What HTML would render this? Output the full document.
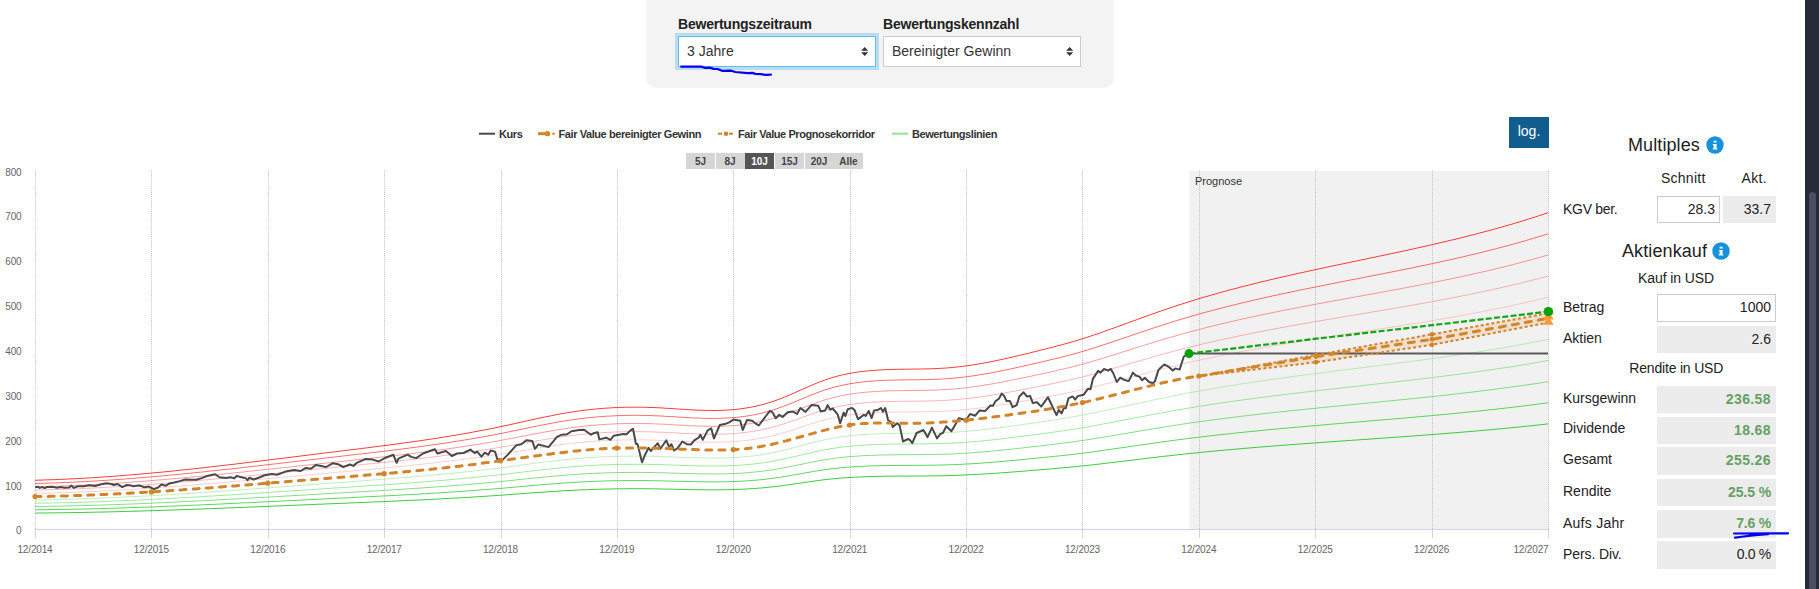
<!DOCTYPE html>
<html><head><meta charset="utf-8"><style>
*{box-sizing:border-box}
html,body{margin:0;padding:0}
body{width:1819px;height:589px;overflow:hidden;background:#fff;position:relative;font-family:"Liberation Sans",sans-serif;color:#222}
.abs{position:absolute}
.panel{position:absolute;left:646px;top:-20px;width:468px;height:108px;background:#f3f3f3;border-radius:10px}
.lbl{position:absolute;font-weight:bold;font-size:14px;color:#222;white-space:nowrap;letter-spacing:-0.22px}
.sel{position:absolute;background:#fff;border:1px solid #ccc;height:31px;font-size:14px;color:#333;padding-left:8px;line-height:29px;white-space:nowrap}
.arr{position:absolute;right:6px;top:9px;width:8px;height:12px}
svg text.ax{font-size:10px;fill:#666;letter-spacing:-0.15px;font-family:"Liberation Sans",sans-serif}
svg text.prog{font-size:11px;fill:#333;font-family:"Liberation Sans",sans-serif}
.leg{position:absolute;top:128px;font-size:11px;font-weight:bold;color:#333;white-space:nowrap;letter-spacing:-0.42px}
.rb{position:absolute;top:153px;height:16px;width:29px;background:#d6d6d6;font-size:10px;font-weight:bold;color:#444;text-align:center;line-height:18px}
.rb.on{background:#555;color:#fff}
.logb{position:absolute;left:1509px;top:117px;width:40px;height:31px;background:#115e8e;color:#fff;font-size:14px;text-align:center;line-height:28.5px}
.rp{position:absolute;font-size:14px;color:#222;white-space:nowrap}
.h{position:absolute;font-size:18px;color:#222;white-space:nowrap}
.info{position:absolute;width:18px;height:18px;color:#fff;font-size:12px;font-weight:bold;text-align:center;line-height:18px;font-family:"Liberation Sans",sans-serif}
.box{position:absolute;height:27.5px;background:#ececec;text-align:right;font-size:14px;color:#222;padding-right:5px;line-height:27px}
.box.w{background:#fff;border:1px solid #ccc;line-height:25.5px;padding-right:4px}
.g{color:#66a066;font-weight:bold}
.sb{position:absolute;left:1805px;top:0;width:14px;height:589px;background:#272b38}
.th{position:absolute;left:1808.5px;top:191.5px;width:7.5px;height:420px;background:#4a4e65;border-radius:4px}
</style></head><body>
<div class="panel"></div>
<div class="lbl" style="left:678px;top:16px">Bewertungszeitraum</div>
<div class="lbl" style="left:883px;top:16px">Bewertungskennzahl</div>
<div class="abs" style="left:675px;top:33px;width:204px;height:37px;background:#bcdcef"></div>
<div class="sel" style="left:678px;top:36px;width:198px;border-color:#5bc0f5">3 Jahre<svg class="arr" viewBox="0 0 8 12"><path d="M3.7,1 L7.2,4.7 L0.2,4.7Z M3.7,10 L7.2,6.2 L0.2,6.2Z" fill="#333"/></svg></div>
<div class="sel" style="left:883px;top:36px;width:198px">Bereinigter Gewinn<svg class="arr" viewBox="0 0 8 12"><path d="M3.7,1 L7.2,4.7 L0.2,4.7Z M3.7,10 L7.2,6.2 L0.2,6.2Z" fill="#333"/></svg></div>
<svg class="abs" style="left:0;top:0" width="1819" height="589">
<path d="M681.2,66.7 L701,66.5 L705,67.9 L710.2,67.7 L713.5,68.9 L717.5,69 L722.1,70.8 L731.3,70.7 L735.3,72 L747.8,73.1 L752.5,72.9 L755.8,74 L761,74.1 L765.6,74.9 L770.9,74.7" fill="none" stroke="#0000f0" stroke-width="2.2" stroke-linecap="round" stroke-linejoin="round"/>
</svg>
<svg class="abs" style="left:0;top:0" width="1819" height="589">
<rect x="1189.5" y="171" width="359" height="358.5" fill="#f1f1f1"/>
<line x1="35.5" y1="171" x2="35.5" y2="529" stroke="#bdbdbd" stroke-width="1" stroke-dasharray="1,1.1"/>
<line x1="151.5" y1="171" x2="151.5" y2="529" stroke="#bdbdbd" stroke-width="1" stroke-dasharray="1,1.1"/>
<line x1="268.5" y1="171" x2="268.5" y2="529" stroke="#bdbdbd" stroke-width="1" stroke-dasharray="1,1.1"/>
<line x1="384.5" y1="171" x2="384.5" y2="529" stroke="#bdbdbd" stroke-width="1" stroke-dasharray="1,1.1"/>
<line x1="501.5" y1="171" x2="501.5" y2="529" stroke="#bdbdbd" stroke-width="1" stroke-dasharray="1,1.1"/>
<line x1="617.5" y1="171" x2="617.5" y2="529" stroke="#bdbdbd" stroke-width="1" stroke-dasharray="1,1.1"/>
<line x1="733.5" y1="171" x2="733.5" y2="529" stroke="#bdbdbd" stroke-width="1" stroke-dasharray="1,1.1"/>
<line x1="850.5" y1="171" x2="850.5" y2="529" stroke="#bdbdbd" stroke-width="1" stroke-dasharray="1,1.1"/>
<line x1="966.5" y1="171" x2="966.5" y2="529" stroke="#bdbdbd" stroke-width="1" stroke-dasharray="1,1.1"/>
<line x1="1082.5" y1="171" x2="1082.5" y2="529" stroke="#bdbdbd" stroke-width="1" stroke-dasharray="1,1.1"/>
<line x1="1199.5" y1="171" x2="1199.5" y2="529" stroke="#bdbdbd" stroke-width="1" stroke-dasharray="1,1.1"/>
<line x1="1315.5" y1="171" x2="1315.5" y2="529" stroke="#bdbdbd" stroke-width="1" stroke-dasharray="1,1.1"/>
<line x1="1432.5" y1="171" x2="1432.5" y2="529" stroke="#bdbdbd" stroke-width="1" stroke-dasharray="1,1.1"/>
<line x1="1548.5" y1="171" x2="1548.5" y2="529" stroke="#bdbdbd" stroke-width="1" stroke-dasharray="1,1.1"/>
<line x1="35" y1="529.5" x2="1549" y2="529.5" stroke="#ccd6eb" stroke-width="1"/>
<line x1="35.5" y1="529.5" x2="35.5" y2="538" stroke="#ccd6eb" stroke-width="1"/>
<line x1="151.5" y1="529.5" x2="151.5" y2="538" stroke="#ccd6eb" stroke-width="1"/>
<line x1="268.5" y1="529.5" x2="268.5" y2="538" stroke="#ccd6eb" stroke-width="1"/>
<line x1="384.5" y1="529.5" x2="384.5" y2="538" stroke="#ccd6eb" stroke-width="1"/>
<line x1="501.5" y1="529.5" x2="501.5" y2="538" stroke="#ccd6eb" stroke-width="1"/>
<line x1="617.5" y1="529.5" x2="617.5" y2="538" stroke="#ccd6eb" stroke-width="1"/>
<line x1="733.5" y1="529.5" x2="733.5" y2="538" stroke="#ccd6eb" stroke-width="1"/>
<line x1="850.5" y1="529.5" x2="850.5" y2="538" stroke="#ccd6eb" stroke-width="1"/>
<line x1="966.5" y1="529.5" x2="966.5" y2="538" stroke="#ccd6eb" stroke-width="1"/>
<line x1="1082.5" y1="529.5" x2="1082.5" y2="538" stroke="#ccd6eb" stroke-width="1"/>
<line x1="1199.5" y1="529.5" x2="1199.5" y2="538" stroke="#ccd6eb" stroke-width="1"/>
<line x1="1315.5" y1="529.5" x2="1315.5" y2="538" stroke="#ccd6eb" stroke-width="1"/>
<line x1="1432.5" y1="529.5" x2="1432.5" y2="538" stroke="#ccd6eb" stroke-width="1"/>
<line x1="1548.5" y1="529.5" x2="1548.5" y2="538" stroke="#ccd6eb" stroke-width="1"/>
<path d="M1199,376.1 L1316,355.0 L1432,334.3 L1548,313.3 L1548,322.6 L1432,344.8 L1316,362.2 L1199,376.1 Z" fill="#e8a050" fill-opacity="0.22"/>
<path d="M35.0,480.2 L37.0,480.2 L39.0,480.1 L41.0,480.1 L43.0,480.0 L45.0,479.9 L47.0,479.9 L49.0,479.8 L51.0,479.7 L53.0,479.7 L55.0,479.6 L57.0,479.5 L59.0,479.4 L61.0,479.4 L63.0,479.3 L65.0,479.2 L67.0,479.1 L69.0,479.0 L71.0,478.9 L73.0,478.8 L75.0,478.7 L77.0,478.6 L79.0,478.5 L81.0,478.4 L83.0,478.3 L85.0,478.2 L87.0,478.0 L89.0,477.9 L91.0,477.8 L93.0,477.7 L95.0,477.6 L97.0,477.4 L99.0,477.3 L101.0,477.2 L103.0,477.0 L105.0,476.9 L107.0,476.7 L109.0,476.6 L111.0,476.5 L113.0,476.3 L115.0,476.2 L117.0,476.0 L119.0,475.8 L121.0,475.7 L123.0,475.5 L125.0,475.4 L127.0,475.2 L129.0,475.0 L131.0,474.9 L133.0,474.7 L135.0,474.5 L137.0,474.4 L139.0,474.2 L141.0,474.0 L143.0,473.8 L145.0,473.7 L147.0,473.5 L149.0,473.3 L151.0,473.1 L153.0,472.9 L155.0,472.7 L157.0,472.5 L159.0,472.4 L161.0,472.2 L163.0,472.0 L165.0,471.8 L167.0,471.6 L169.0,471.4 L171.0,471.2 L173.0,471.0 L175.0,470.8 L177.0,470.6 L179.0,470.3 L181.0,470.1 L183.0,469.9 L185.0,469.7 L187.0,469.5 L189.0,469.3 L191.0,469.1 L193.0,468.9 L195.0,468.6 L197.0,468.4 L199.0,468.2 L201.0,468.0 L203.0,467.8 L205.0,467.5 L207.0,467.3 L209.0,467.1 L211.0,466.9 L213.0,466.6 L215.0,466.4 L217.0,466.2 L219.0,465.9 L221.0,465.7 L223.0,465.5 L225.0,465.2 L227.0,465.0 L229.0,464.8 L231.0,464.5 L233.0,464.3 L235.0,464.1 L237.0,463.8 L239.0,463.6 L241.0,463.4 L243.0,463.1 L245.0,462.9 L247.0,462.6 L249.0,462.4 L251.0,462.1 L253.0,461.9 L255.0,461.7 L257.0,461.4 L259.0,461.2 L261.0,460.9 L263.0,460.7 L265.0,460.4 L267.0,460.2 L269.0,459.9 L271.0,459.7 L273.0,459.4 L275.0,459.2 L277.0,458.9 L279.0,458.7 L281.0,458.5 L283.0,458.2 L285.0,458.0 L287.0,457.7 L289.0,457.5 L291.0,457.2 L293.0,457.0 L295.0,456.7 L297.0,456.5 L299.0,456.2 L301.0,456.0 L303.0,455.7 L305.0,455.5 L307.0,455.2 L309.0,455.0 L311.0,454.7 L313.0,454.5 L315.0,454.2 L317.0,454.0 L319.0,453.7 L321.0,453.5 L323.0,453.2 L325.0,453.0 L327.0,452.7 L329.0,452.5 L331.0,452.2 L333.0,452.0 L335.0,451.8 L337.0,451.5 L339.0,451.3 L341.0,451.0 L343.0,450.8 L345.0,450.5 L347.0,450.3 L349.0,450.0 L351.0,449.8 L353.0,449.5 L355.0,449.3 L357.0,449.1 L359.0,448.8 L361.0,448.6 L363.0,448.3 L365.0,448.1 L367.0,447.8 L369.0,447.6 L371.0,447.3 L373.0,447.1 L375.0,446.8 L377.0,446.5 L379.0,446.3 L381.0,446.0 L383.0,445.8 L385.0,445.5 L387.0,445.3 L389.0,445.0 L391.0,444.7 L393.0,444.5 L395.0,444.2 L397.0,443.9 L399.0,443.7 L401.0,443.4 L403.0,443.1 L405.0,442.8 L407.0,442.6 L409.0,442.3 L411.0,442.0 L413.0,441.7 L415.0,441.4 L417.0,441.2 L419.0,440.9 L421.0,440.6 L423.0,440.3 L425.0,440.0 L427.0,439.7 L429.0,439.4 L431.0,439.1 L433.0,438.8 L435.0,438.5 L437.0,438.2 L439.0,437.9 L441.0,437.6 L443.0,437.2 L445.0,436.9 L447.0,436.6 L449.0,436.3 L451.0,435.9 L453.0,435.6 L455.0,435.3 L457.0,434.9 L459.0,434.6 L461.0,434.3 L463.0,433.9 L465.0,433.6 L467.0,433.2 L469.0,432.8 L471.0,432.5 L473.0,432.1 L475.0,431.7 L477.0,431.4 L479.0,431.0 L481.0,430.6 L483.0,430.2 L485.0,429.8 L487.0,429.5 L489.0,429.1 L491.0,428.7 L493.0,428.3 L495.0,427.8 L497.0,427.4 L499.0,427.0 L501.0,426.6 L503.0,426.2 L505.0,425.7 L507.0,425.3 L509.0,424.9 L511.0,424.4 L513.0,424.0 L515.0,423.5 L517.0,423.1 L519.0,422.7 L521.0,422.2 L523.0,421.8 L525.0,421.3 L527.0,420.9 L529.0,420.4 L531.0,420.0 L533.0,419.6 L535.0,419.1 L537.0,418.7 L539.0,418.2 L541.0,417.8 L543.0,417.4 L545.0,417.0 L547.0,416.6 L549.0,416.2 L551.0,415.8 L553.0,415.4 L555.0,415.0 L557.0,414.6 L559.0,414.2 L561.0,413.8 L563.0,413.5 L565.0,413.1 L567.0,412.8 L569.0,412.5 L571.0,412.2 L573.0,411.8 L575.0,411.5 L577.0,411.3 L579.0,411.0 L581.0,410.7 L583.0,410.4 L585.0,410.2 L587.0,410.0 L589.0,409.7 L591.0,409.5 L593.0,409.3 L595.0,409.1 L597.0,408.9 L599.0,408.7 L601.0,408.6 L603.0,408.4 L605.0,408.2 L607.0,408.1 L609.0,408.0 L611.0,407.9 L613.0,407.7 L615.0,407.6 L617.0,407.6 L619.0,407.5 L621.0,407.4 L623.0,407.3 L625.0,407.3 L627.0,407.2 L629.0,407.2 L631.0,407.2 L633.0,407.2 L635.0,407.2 L637.0,407.2 L639.0,407.2 L641.0,407.2 L643.0,407.2 L645.0,407.3 L647.0,407.3 L649.0,407.4 L651.0,407.5 L653.0,407.5 L655.0,407.6 L657.0,407.7 L659.0,407.8 L661.0,407.9 L663.0,408.0 L665.0,408.2 L667.0,408.3 L669.0,408.4 L671.0,408.5 L673.0,408.7 L675.0,408.8 L677.0,408.9 L679.0,409.1 L681.0,409.2 L683.0,409.3 L685.0,409.4 L687.0,409.6 L689.0,409.7 L691.0,409.8 L693.0,409.9 L695.0,410.0 L697.0,410.1 L699.0,410.2 L701.0,410.2 L703.0,410.3 L705.0,410.4 L707.0,410.4 L709.0,410.4 L711.0,410.5 L713.0,410.5 L715.0,410.5 L717.0,410.4 L719.0,410.4 L721.0,410.3 L723.0,410.3 L725.0,410.2 L727.0,410.1 L729.0,410.0 L731.0,409.8 L733.0,409.7 L735.0,409.5 L737.0,409.3 L739.0,409.0 L741.0,408.8 L743.0,408.5 L745.0,408.2 L747.0,407.9 L749.0,407.5 L751.0,407.2 L753.0,406.8 L755.0,406.4 L757.0,405.9 L759.0,405.4 L761.0,405.0 L763.0,404.4 L765.0,403.9 L767.0,403.3 L769.0,402.7 L771.0,402.1 L773.0,401.4 L775.0,400.7 L777.0,400.0 L779.0,399.3 L781.0,398.5 L783.0,397.7 L785.0,396.9 L787.0,396.1 L789.0,395.2 L791.0,394.4 L793.0,393.5 L795.0,392.6 L797.0,391.7 L799.0,390.8 L801.0,389.9 L803.0,389.0 L805.0,388.2 L807.0,387.3 L809.0,386.4 L811.0,385.5 L813.0,384.7 L815.0,383.8 L817.0,383.0 L819.0,382.2 L821.0,381.5 L823.0,380.7 L825.0,380.0 L827.0,379.3 L829.0,378.6 L831.0,378.0 L833.0,377.4 L835.0,376.8 L837.0,376.3 L839.0,375.7 L841.0,375.2 L843.0,374.8 L845.0,374.3 L847.0,373.9 L849.0,373.5 L851.0,373.2 L853.0,372.8 L855.0,372.5 L857.0,372.2 L859.0,371.9 L861.0,371.6 L863.0,371.4 L865.0,371.2 L867.0,371.0 L869.0,370.8 L871.0,370.6 L873.0,370.4 L875.0,370.3 L877.0,370.1 L879.0,370.0 L881.0,369.9 L883.0,369.8 L885.0,369.7 L887.0,369.6 L889.0,369.6 L891.0,369.5 L893.0,369.4 L895.0,369.4 L897.0,369.3 L899.0,369.3 L901.0,369.3 L903.0,369.2 L905.0,369.2 L907.0,369.2 L909.0,369.2 L911.0,369.1 L913.0,369.1 L915.0,369.1 L917.0,369.1 L919.0,369.0 L921.0,369.0 L923.0,369.0 L925.0,368.9 L927.0,368.9 L929.0,368.8 L931.0,368.8 L933.0,368.7 L935.0,368.6 L937.0,368.5 L939.0,368.4 L941.0,368.3 L943.0,368.2 L945.0,368.1 L947.0,367.9 L949.0,367.8 L951.0,367.6 L953.0,367.4 L955.0,367.2 L957.0,367.0 L959.0,366.8 L961.0,366.6 L963.0,366.3 L965.0,366.0 L967.0,365.8 L969.0,365.5 L971.0,365.2 L973.0,364.9 L975.0,364.6 L977.0,364.2 L979.0,363.9 L981.0,363.6 L983.0,363.2 L985.0,362.8 L987.0,362.5 L989.0,362.1 L991.0,361.7 L993.0,361.3 L995.0,360.9 L997.0,360.5 L999.0,360.0 L1001.0,359.6 L1003.0,359.2 L1005.0,358.7 L1007.0,358.3 L1009.0,357.8 L1011.0,357.4 L1013.0,356.9 L1015.0,356.4 L1017.0,356.0 L1019.0,355.5 L1021.0,355.0 L1023.0,354.5 L1025.0,354.1 L1027.0,353.6 L1029.0,353.1 L1031.0,352.6 L1033.0,352.1 L1035.0,351.6 L1037.0,351.1 L1039.0,350.6 L1041.0,350.1 L1043.0,349.6 L1045.0,349.1 L1047.0,348.6 L1049.0,348.1 L1051.0,347.6 L1053.0,347.1 L1055.0,346.6 L1057.0,346.0 L1059.0,345.5 L1061.0,345.0 L1063.0,344.4 L1065.0,343.9 L1067.0,343.3 L1069.0,342.8 L1071.0,342.2 L1073.0,341.6 L1075.0,341.0 L1077.0,340.5 L1079.0,339.8 L1081.0,339.2 L1083.0,338.6 L1085.0,338.0 L1087.0,337.3 L1089.0,336.7 L1091.0,336.0 L1093.0,335.3 L1095.0,334.6 L1097.0,334.0 L1099.0,333.3 L1101.0,332.6 L1103.0,331.9 L1105.0,331.1 L1107.0,330.4 L1109.0,329.7 L1111.0,329.0 L1113.0,328.3 L1115.0,327.6 L1117.0,326.8 L1119.0,326.1 L1121.0,325.4 L1123.0,324.7 L1125.0,323.9 L1127.0,323.2 L1129.0,322.5 L1131.0,321.7 L1133.0,321.0 L1135.0,320.3 L1137.0,319.6 L1139.0,318.8 L1141.0,318.1 L1143.0,317.4 L1145.0,316.7 L1147.0,315.9 L1149.0,315.2 L1151.0,314.5 L1153.0,313.8 L1155.0,313.1 L1157.0,312.4 L1159.0,311.7 L1161.0,311.0 L1163.0,310.3 L1165.0,309.6 L1167.0,308.9 L1169.0,308.3 L1171.0,307.6 L1173.0,306.9 L1175.0,306.3 L1177.0,305.6 L1179.0,304.9 L1181.0,304.3 L1183.0,303.7 L1185.0,303.0 L1187.0,302.4 L1189.0,301.8 L1191.0,301.1 L1193.0,300.5 L1195.0,299.9 L1197.0,299.3 L1199.0,298.7 L1201.0,298.1 L1203.0,297.5 L1205.0,296.9 L1207.0,296.3 L1209.0,295.8 L1211.0,295.2 L1213.0,294.6 L1215.0,294.1 L1217.0,293.5 L1219.0,292.9 L1221.0,292.4 L1223.0,291.8 L1225.0,291.3 L1227.0,290.7 L1229.0,290.2 L1231.0,289.7 L1233.0,289.1 L1235.0,288.6 L1237.0,288.1 L1239.0,287.6 L1241.0,287.0 L1243.0,286.5 L1245.0,286.0 L1247.0,285.5 L1249.0,285.0 L1251.0,284.5 L1253.0,284.0 L1255.0,283.5 L1257.0,283.0 L1259.0,282.5 L1261.0,282.0 L1263.0,281.5 L1265.0,281.1 L1267.0,280.6 L1269.0,280.1 L1271.0,279.6 L1273.0,279.2 L1275.0,278.7 L1277.0,278.2 L1279.0,277.8 L1281.0,277.3 L1283.0,276.8 L1285.0,276.4 L1287.0,275.9 L1289.0,275.5 L1291.0,275.0 L1293.0,274.6 L1295.0,274.1 L1297.0,273.7 L1299.0,273.2 L1301.0,272.8 L1303.0,272.4 L1305.0,271.9 L1307.0,271.5 L1309.0,271.0 L1311.0,270.6 L1313.0,270.2 L1315.0,269.7 L1317.0,269.3 L1319.0,268.9 L1321.0,268.4 L1323.0,268.0 L1325.0,267.6 L1327.0,267.2 L1329.0,266.7 L1331.0,266.3 L1333.0,265.9 L1335.0,265.5 L1337.0,265.1 L1339.0,264.6 L1341.0,264.2 L1343.0,263.8 L1345.0,263.4 L1347.0,263.0 L1349.0,262.5 L1351.0,262.1 L1353.0,261.7 L1355.0,261.3 L1357.0,260.9 L1359.0,260.4 L1361.0,260.0 L1363.0,259.6 L1365.0,259.2 L1367.0,258.8 L1369.0,258.3 L1371.0,257.9 L1373.0,257.5 L1375.0,257.1 L1377.0,256.7 L1379.0,256.2 L1381.0,255.8 L1383.0,255.4 L1385.0,255.0 L1387.0,254.6 L1389.0,254.1 L1391.0,253.7 L1393.0,253.3 L1395.0,252.9 L1397.0,252.4 L1399.0,252.0 L1401.0,251.6 L1403.0,251.1 L1405.0,250.7 L1407.0,250.3 L1409.0,249.8 L1411.0,249.4 L1413.0,249.0 L1415.0,248.5 L1417.0,248.1 L1419.0,247.6 L1421.0,247.2 L1423.0,246.7 L1425.0,246.3 L1427.0,245.8 L1429.0,245.4 L1431.0,244.9 L1433.0,244.5 L1435.0,244.0 L1437.0,243.5 L1439.0,243.1 L1441.0,242.6 L1443.0,242.1 L1445.0,241.7 L1447.0,241.2 L1449.0,240.7 L1451.0,240.2 L1453.0,239.8 L1455.0,239.3 L1457.0,238.8 L1459.0,238.3 L1461.0,237.8 L1463.0,237.3 L1465.0,236.8 L1467.0,236.3 L1469.0,235.8 L1471.0,235.3 L1473.0,234.8 L1475.0,234.3 L1477.0,233.8 L1479.0,233.2 L1481.0,232.7 L1483.0,232.2 L1485.0,231.6 L1487.0,231.1 L1489.0,230.6 L1491.0,230.0 L1493.0,229.5 L1495.0,228.9 L1497.0,228.4 L1499.0,227.8 L1501.0,227.3 L1503.0,226.7 L1505.0,226.1 L1507.0,225.5 L1509.0,225.0 L1511.0,224.4 L1513.0,223.8 L1515.0,223.2 L1517.0,222.6 L1519.0,222.0 L1521.0,221.4 L1523.0,220.8 L1525.0,220.2 L1527.0,219.5 L1529.0,218.9 L1531.0,218.3 L1533.0,217.7 L1535.0,217.0 L1537.0,216.4 L1539.0,215.7 L1541.0,215.1 L1543.0,214.4 L1545.0,213.7 L1547.0,213.1 L1548.0,212.7" fill="none" stroke="#ff2828" stroke-opacity="0.9" stroke-width="1"/>
<path d="M35.0,483.5 L37.0,483.4 L39.0,483.4 L41.0,483.4 L43.0,483.3 L45.0,483.2 L47.0,483.2 L49.0,483.1 L51.0,483.1 L53.0,483.0 L55.0,482.9 L57.0,482.9 L59.0,482.8 L61.0,482.7 L63.0,482.6 L65.0,482.5 L67.0,482.5 L69.0,482.4 L71.0,482.3 L73.0,482.2 L75.0,482.1 L77.0,482.0 L79.0,481.9 L81.0,481.8 L83.0,481.7 L85.0,481.6 L87.0,481.5 L89.0,481.4 L91.0,481.2 L93.0,481.1 L95.0,481.0 L97.0,480.9 L99.0,480.8 L101.0,480.6 L103.0,480.5 L105.0,480.4 L107.0,480.3 L109.0,480.1 L111.0,480.0 L113.0,479.9 L115.0,479.7 L117.0,479.6 L119.0,479.4 L121.0,479.3 L123.0,479.1 L125.0,479.0 L127.0,478.8 L129.0,478.7 L131.0,478.5 L133.0,478.4 L135.0,478.2 L137.0,478.0 L139.0,477.9 L141.0,477.7 L143.0,477.6 L145.0,477.4 L147.0,477.2 L149.0,477.0 L151.0,476.9 L153.0,476.7 L155.0,476.5 L157.0,476.3 L159.0,476.2 L161.0,476.0 L163.0,475.8 L165.0,475.6 L167.0,475.4 L169.0,475.2 L171.0,475.1 L173.0,474.9 L175.0,474.7 L177.0,474.5 L179.0,474.3 L181.0,474.1 L183.0,473.9 L185.0,473.7 L187.0,473.5 L189.0,473.3 L191.0,473.1 L193.0,472.9 L195.0,472.7 L197.0,472.5 L199.0,472.3 L201.0,472.1 L203.0,471.9 L205.0,471.7 L207.0,471.5 L209.0,471.2 L211.0,471.0 L213.0,470.8 L215.0,470.6 L217.0,470.4 L219.0,470.2 L221.0,470.0 L223.0,469.7 L225.0,469.5 L227.0,469.3 L229.0,469.1 L231.0,468.9 L233.0,468.7 L235.0,468.4 L237.0,468.2 L239.0,468.0 L241.0,467.8 L243.0,467.5 L245.0,467.3 L247.0,467.1 L249.0,466.9 L251.0,466.6 L253.0,466.4 L255.0,466.2 L257.0,466.0 L259.0,465.7 L261.0,465.5 L263.0,465.3 L265.0,465.0 L267.0,464.8 L269.0,464.6 L271.0,464.3 L273.0,464.1 L275.0,463.9 L277.0,463.7 L279.0,463.4 L281.0,463.2 L283.0,463.0 L285.0,462.7 L287.0,462.5 L289.0,462.3 L291.0,462.0 L293.0,461.8 L295.0,461.6 L297.0,461.3 L299.0,461.1 L301.0,460.9 L303.0,460.6 L305.0,460.4 L307.0,460.2 L309.0,459.9 L311.0,459.7 L313.0,459.5 L315.0,459.2 L317.0,459.0 L319.0,458.8 L321.0,458.6 L323.0,458.3 L325.0,458.1 L327.0,457.9 L329.0,457.6 L331.0,457.4 L333.0,457.2 L335.0,456.9 L337.0,456.7 L339.0,456.5 L341.0,456.3 L343.0,456.0 L345.0,455.8 L347.0,455.6 L349.0,455.3 L351.0,455.1 L353.0,454.9 L355.0,454.6 L357.0,454.4 L359.0,454.2 L361.0,454.0 L363.0,453.7 L365.0,453.5 L367.0,453.3 L369.0,453.0 L371.0,452.8 L373.0,452.5 L375.0,452.3 L377.0,452.1 L379.0,451.8 L381.0,451.6 L383.0,451.4 L385.0,451.1 L387.0,450.9 L389.0,450.6 L391.0,450.4 L393.0,450.1 L395.0,449.9 L397.0,449.6 L399.0,449.4 L401.0,449.1 L403.0,448.9 L405.0,448.6 L407.0,448.4 L409.0,448.1 L411.0,447.8 L413.0,447.6 L415.0,447.3 L417.0,447.1 L419.0,446.8 L421.0,446.5 L423.0,446.2 L425.0,446.0 L427.0,445.7 L429.0,445.4 L431.0,445.1 L433.0,444.8 L435.0,444.6 L437.0,444.3 L439.0,444.0 L441.0,443.7 L443.0,443.4 L445.0,443.1 L447.0,442.8 L449.0,442.5 L451.0,442.2 L453.0,441.9 L455.0,441.6 L457.0,441.2 L459.0,440.9 L461.0,440.6 L463.0,440.3 L465.0,439.9 L467.0,439.6 L469.0,439.3 L471.0,438.9 L473.0,438.6 L475.0,438.3 L477.0,437.9 L479.0,437.6 L481.0,437.2 L483.0,436.8 L485.0,436.5 L487.0,436.1 L489.0,435.8 L491.0,435.4 L493.0,435.0 L495.0,434.6 L497.0,434.2 L499.0,433.8 L501.0,433.5 L503.0,433.1 L505.0,432.7 L507.0,432.3 L509.0,431.8 L511.0,431.4 L513.0,431.0 L515.0,430.6 L517.0,430.2 L519.0,429.8 L521.0,429.4 L523.0,428.9 L525.0,428.5 L527.0,428.1 L529.0,427.7 L531.0,427.3 L533.0,426.9 L535.0,426.5 L537.0,426.1 L539.0,425.7 L541.0,425.3 L543.0,424.9 L545.0,424.5 L547.0,424.1 L549.0,423.7 L551.0,423.3 L553.0,423.0 L555.0,422.6 L557.0,422.2 L559.0,421.9 L561.0,421.6 L563.0,421.2 L565.0,420.9 L567.0,420.6 L569.0,420.3 L571.0,420.0 L573.0,419.7 L575.0,419.4 L577.0,419.1 L579.0,418.9 L581.0,418.6 L583.0,418.4 L585.0,418.1 L587.0,417.9 L589.0,417.7 L591.0,417.5 L593.0,417.3 L595.0,417.1 L597.0,416.9 L599.0,416.8 L601.0,416.6 L603.0,416.5 L605.0,416.3 L607.0,416.2 L609.0,416.1 L611.0,416.0 L613.0,415.9 L615.0,415.8 L617.0,415.7 L619.0,415.6 L621.0,415.5 L623.0,415.5 L625.0,415.4 L627.0,415.4 L629.0,415.4 L631.0,415.3 L633.0,415.3 L635.0,415.3 L637.0,415.3 L639.0,415.3 L641.0,415.4 L643.0,415.4 L645.0,415.4 L647.0,415.5 L649.0,415.5 L651.0,415.6 L653.0,415.7 L655.0,415.8 L657.0,415.8 L659.0,415.9 L661.0,416.0 L663.0,416.1 L665.0,416.3 L667.0,416.4 L669.0,416.5 L671.0,416.6 L673.0,416.7 L675.0,416.8 L677.0,417.0 L679.0,417.1 L681.0,417.2 L683.0,417.3 L685.0,417.4 L687.0,417.6 L689.0,417.7 L691.0,417.8 L693.0,417.9 L695.0,418.0 L697.0,418.0 L699.0,418.1 L701.0,418.2 L703.0,418.3 L705.0,418.3 L707.0,418.3 L709.0,418.4 L711.0,418.4 L713.0,418.4 L715.0,418.4 L717.0,418.4 L719.0,418.3 L721.0,418.3 L723.0,418.2 L725.0,418.1 L727.0,418.0 L729.0,417.9 L731.0,417.8 L733.0,417.6 L735.0,417.5 L737.0,417.3 L739.0,417.1 L741.0,416.8 L743.0,416.6 L745.0,416.3 L747.0,416.0 L749.0,415.7 L751.0,415.3 L753.0,415.0 L755.0,414.6 L757.0,414.2 L759.0,413.7 L761.0,413.3 L763.0,412.8 L765.0,412.3 L767.0,411.7 L769.0,411.2 L771.0,410.6 L773.0,410.0 L775.0,409.3 L777.0,408.6 L779.0,407.9 L781.0,407.2 L783.0,406.5 L785.0,405.7 L787.0,405.0 L789.0,404.2 L791.0,403.4 L793.0,402.6 L795.0,401.7 L797.0,400.9 L799.0,400.1 L801.0,399.2 L803.0,398.4 L805.0,397.6 L807.0,396.8 L809.0,395.9 L811.0,395.1 L813.0,394.3 L815.0,393.6 L817.0,392.8 L819.0,392.1 L821.0,391.3 L823.0,390.6 L825.0,389.9 L827.0,389.3 L829.0,388.7 L831.0,388.1 L833.0,387.5 L835.0,387.0 L837.0,386.5 L839.0,386.0 L841.0,385.5 L843.0,385.1 L845.0,384.7 L847.0,384.3 L849.0,383.9 L851.0,383.6 L853.0,383.3 L855.0,383.0 L857.0,382.7 L859.0,382.4 L861.0,382.2 L863.0,381.9 L865.0,381.7 L867.0,381.5 L869.0,381.3 L871.0,381.2 L873.0,381.0 L875.0,380.9 L877.0,380.8 L879.0,380.6 L881.0,380.5 L883.0,380.4 L885.0,380.4 L887.0,380.3 L889.0,380.2 L891.0,380.2 L893.0,380.1 L895.0,380.1 L897.0,380.0 L899.0,380.0 L901.0,379.9 L903.0,379.9 L905.0,379.9 L907.0,379.9 L909.0,379.8 L911.0,379.8 L913.0,379.8 L915.0,379.8 L917.0,379.8 L919.0,379.7 L921.0,379.7 L923.0,379.7 L925.0,379.6 L927.0,379.6 L929.0,379.5 L931.0,379.5 L933.0,379.4 L935.0,379.3 L937.0,379.3 L939.0,379.2 L941.0,379.1 L943.0,379.0 L945.0,378.8 L947.0,378.7 L949.0,378.6 L951.0,378.4 L953.0,378.2 L955.0,378.0 L957.0,377.9 L959.0,377.6 L961.0,377.4 L963.0,377.2 L965.0,376.9 L967.0,376.7 L969.0,376.4 L971.0,376.1 L973.0,375.9 L975.0,375.6 L977.0,375.3 L979.0,374.9 L981.0,374.6 L983.0,374.3 L985.0,373.9 L987.0,373.6 L989.0,373.2 L991.0,372.9 L993.0,372.5 L995.0,372.1 L997.0,371.7 L999.0,371.3 L1001.0,370.9 L1003.0,370.5 L1005.0,370.1 L1007.0,369.7 L1009.0,369.3 L1011.0,368.8 L1013.0,368.4 L1015.0,368.0 L1017.0,367.5 L1019.0,367.1 L1021.0,366.7 L1023.0,366.2 L1025.0,365.8 L1027.0,365.3 L1029.0,364.8 L1031.0,364.4 L1033.0,363.9 L1035.0,363.5 L1037.0,363.0 L1039.0,362.5 L1041.0,362.1 L1043.0,361.6 L1045.0,361.1 L1047.0,360.7 L1049.0,360.2 L1051.0,359.7 L1053.0,359.2 L1055.0,358.8 L1057.0,358.3 L1059.0,357.8 L1061.0,357.3 L1063.0,356.8 L1065.0,356.3 L1067.0,355.8 L1069.0,355.2 L1071.0,354.7 L1073.0,354.2 L1075.0,353.6 L1077.0,353.1 L1079.0,352.5 L1081.0,351.9 L1083.0,351.3 L1085.0,350.7 L1087.0,350.1 L1089.0,349.5 L1091.0,348.9 L1093.0,348.3 L1095.0,347.6 L1097.0,347.0 L1099.0,346.3 L1101.0,345.7 L1103.0,345.0 L1105.0,344.4 L1107.0,343.7 L1109.0,343.0 L1111.0,342.4 L1113.0,341.7 L1115.0,341.0 L1117.0,340.3 L1119.0,339.7 L1121.0,339.0 L1123.0,338.3 L1125.0,337.6 L1127.0,337.0 L1129.0,336.3 L1131.0,335.6 L1133.0,334.9 L1135.0,334.2 L1137.0,333.6 L1139.0,332.9 L1141.0,332.2 L1143.0,331.5 L1145.0,330.9 L1147.0,330.2 L1149.0,329.5 L1151.0,328.8 L1153.0,328.2 L1155.0,327.5 L1157.0,326.9 L1159.0,326.2 L1161.0,325.6 L1163.0,324.9 L1165.0,324.3 L1167.0,323.6 L1169.0,323.0 L1171.0,322.4 L1173.0,321.8 L1175.0,321.1 L1177.0,320.5 L1179.0,319.9 L1181.0,319.3 L1183.0,318.7 L1185.0,318.1 L1187.0,317.5 L1189.0,317.0 L1191.0,316.4 L1193.0,315.8 L1195.0,315.2 L1197.0,314.7 L1199.0,314.1 L1201.0,313.5 L1203.0,313.0 L1205.0,312.4 L1207.0,311.9 L1209.0,311.4 L1211.0,310.8 L1213.0,310.3 L1215.0,309.8 L1217.0,309.2 L1219.0,308.7 L1221.0,308.2 L1223.0,307.7 L1225.0,307.2 L1227.0,306.7 L1229.0,306.2 L1231.0,305.6 L1233.0,305.2 L1235.0,304.7 L1237.0,304.2 L1239.0,303.7 L1241.0,303.2 L1243.0,302.7 L1245.0,302.2 L1247.0,301.8 L1249.0,301.3 L1251.0,300.8 L1253.0,300.4 L1255.0,299.9 L1257.0,299.4 L1259.0,299.0 L1261.0,298.5 L1263.0,298.1 L1265.0,297.6 L1267.0,297.2 L1269.0,296.7 L1271.0,296.3 L1273.0,295.8 L1275.0,295.4 L1277.0,295.0 L1279.0,294.5 L1281.0,294.1 L1283.0,293.7 L1285.0,293.3 L1287.0,292.8 L1289.0,292.4 L1291.0,292.0 L1293.0,291.6 L1295.0,291.1 L1297.0,290.7 L1299.0,290.3 L1301.0,289.9 L1303.0,289.5 L1305.0,289.1 L1307.0,288.7 L1309.0,288.3 L1311.0,287.9 L1313.0,287.5 L1315.0,287.1 L1317.0,286.7 L1319.0,286.3 L1321.0,285.9 L1323.0,285.5 L1325.0,285.1 L1327.0,284.7 L1329.0,284.3 L1331.0,283.9 L1333.0,283.5 L1335.0,283.1 L1337.0,282.7 L1339.0,282.3 L1341.0,281.9 L1343.0,281.5 L1345.0,281.1 L1347.0,280.7 L1349.0,280.3 L1351.0,279.9 L1353.0,279.5 L1355.0,279.2 L1357.0,278.8 L1359.0,278.4 L1361.0,278.0 L1363.0,277.6 L1365.0,277.2 L1367.0,276.8 L1369.0,276.4 L1371.0,276.0 L1373.0,275.6 L1375.0,275.2 L1377.0,274.9 L1379.0,274.5 L1381.0,274.1 L1383.0,273.7 L1385.0,273.3 L1387.0,272.9 L1389.0,272.5 L1391.0,272.1 L1393.0,271.7 L1395.0,271.3 L1397.0,270.9 L1399.0,270.5 L1401.0,270.1 L1403.0,269.7 L1405.0,269.3 L1407.0,268.9 L1409.0,268.5 L1411.0,268.1 L1413.0,267.7 L1415.0,267.2 L1417.0,266.8 L1419.0,266.4 L1421.0,266.0 L1423.0,265.6 L1425.0,265.2 L1427.0,264.7 L1429.0,264.3 L1431.0,263.9 L1433.0,263.5 L1435.0,263.0 L1437.0,262.6 L1439.0,262.2 L1441.0,261.7 L1443.0,261.3 L1445.0,260.9 L1447.0,260.4 L1449.0,260.0 L1451.0,259.5 L1453.0,259.1 L1455.0,258.6 L1457.0,258.2 L1459.0,257.7 L1461.0,257.3 L1463.0,256.8 L1465.0,256.3 L1467.0,255.9 L1469.0,255.4 L1471.0,254.9 L1473.0,254.4 L1475.0,254.0 L1477.0,253.5 L1479.0,253.0 L1481.0,252.5 L1483.0,252.0 L1485.0,251.5 L1487.0,251.0 L1489.0,250.5 L1491.0,250.0 L1493.0,249.5 L1495.0,249.0 L1497.0,248.5 L1499.0,247.9 L1501.0,247.4 L1503.0,246.9 L1505.0,246.3 L1507.0,245.8 L1509.0,245.3 L1511.0,244.7 L1513.0,244.2 L1515.0,243.6 L1517.0,243.1 L1519.0,242.5 L1521.0,241.9 L1523.0,241.4 L1525.0,240.8 L1527.0,240.2 L1529.0,239.6 L1531.0,239.0 L1533.0,238.4 L1535.0,237.8 L1537.0,237.2 L1539.0,236.6 L1541.0,236.0 L1543.0,235.4 L1545.0,234.8 L1547.0,234.2 L1548.0,233.8" fill="none" stroke="#ff3838" stroke-opacity="0.72" stroke-width="1"/>
<path d="M35.0,486.8 L37.0,486.7 L39.0,486.7 L41.0,486.6 L43.0,486.6 L45.0,486.5 L47.0,486.5 L49.0,486.4 L51.0,486.4 L53.0,486.3 L55.0,486.3 L57.0,486.2 L59.0,486.1 L61.0,486.0 L63.0,486.0 L65.0,485.9 L67.0,485.8 L69.0,485.7 L71.0,485.7 L73.0,485.6 L75.0,485.5 L77.0,485.4 L79.0,485.3 L81.0,485.2 L83.0,485.1 L85.0,485.0 L87.0,484.9 L89.0,484.8 L91.0,484.7 L93.0,484.6 L95.0,484.5 L97.0,484.4 L99.0,484.3 L101.0,484.1 L103.0,484.0 L105.0,483.9 L107.0,483.8 L109.0,483.7 L111.0,483.5 L113.0,483.4 L115.0,483.3 L117.0,483.1 L119.0,483.0 L121.0,482.9 L123.0,482.7 L125.0,482.6 L127.0,482.4 L129.0,482.3 L131.0,482.2 L133.0,482.0 L135.0,481.9 L137.0,481.7 L139.0,481.6 L141.0,481.4 L143.0,481.3 L145.0,481.1 L147.0,480.9 L149.0,480.8 L151.0,480.6 L153.0,480.5 L155.0,480.3 L157.0,480.1 L159.0,480.0 L161.0,479.8 L163.0,479.6 L165.0,479.5 L167.0,479.3 L169.0,479.1 L171.0,478.9 L173.0,478.8 L175.0,478.6 L177.0,478.4 L179.0,478.2 L181.0,478.1 L183.0,477.9 L185.0,477.7 L187.0,477.5 L189.0,477.3 L191.0,477.1 L193.0,476.9 L195.0,476.8 L197.0,476.6 L199.0,476.4 L201.0,476.2 L203.0,476.0 L205.0,475.8 L207.0,475.6 L209.0,475.4 L211.0,475.2 L213.0,475.0 L215.0,474.8 L217.0,474.6 L219.0,474.4 L221.0,474.2 L223.0,474.0 L225.0,473.8 L227.0,473.6 L229.0,473.4 L231.0,473.2 L233.0,473.0 L235.0,472.8 L237.0,472.6 L239.0,472.4 L241.0,472.2 L243.0,472.0 L245.0,471.8 L247.0,471.5 L249.0,471.3 L251.0,471.1 L253.0,470.9 L255.0,470.7 L257.0,470.5 L259.0,470.3 L261.0,470.1 L263.0,469.9 L265.0,469.6 L267.0,469.4 L269.0,469.2 L271.0,469.0 L273.0,468.8 L275.0,468.6 L277.0,468.4 L279.0,468.1 L281.0,467.9 L283.0,467.7 L285.0,467.5 L287.0,467.3 L289.0,467.1 L291.0,466.8 L293.0,466.6 L295.0,466.4 L297.0,466.2 L299.0,466.0 L301.0,465.8 L303.0,465.6 L305.0,465.3 L307.0,465.1 L309.0,464.9 L311.0,464.7 L313.0,464.5 L315.0,464.3 L317.0,464.0 L319.0,463.8 L321.0,463.6 L323.0,463.4 L325.0,463.2 L327.0,463.0 L329.0,462.8 L331.0,462.5 L333.0,462.3 L335.0,462.1 L337.0,461.9 L339.0,461.7 L341.0,461.5 L343.0,461.3 L345.0,461.1 L347.0,460.8 L349.0,460.6 L351.0,460.4 L353.0,460.2 L355.0,460.0 L357.0,459.8 L359.0,459.6 L361.0,459.3 L363.0,459.1 L365.0,458.9 L367.0,458.7 L369.0,458.5 L371.0,458.3 L373.0,458.0 L375.0,457.8 L377.0,457.6 L379.0,457.4 L381.0,457.2 L383.0,456.9 L385.0,456.7 L387.0,456.5 L389.0,456.3 L391.0,456.0 L393.0,455.8 L395.0,455.6 L397.0,455.3 L399.0,455.1 L401.0,454.9 L403.0,454.6 L405.0,454.4 L407.0,454.2 L409.0,453.9 L411.0,453.7 L413.0,453.4 L415.0,453.2 L417.0,452.9 L419.0,452.7 L421.0,452.4 L423.0,452.2 L425.0,451.9 L427.0,451.7 L429.0,451.4 L431.0,451.2 L433.0,450.9 L435.0,450.6 L437.0,450.4 L439.0,450.1 L441.0,449.8 L443.0,449.5 L445.0,449.3 L447.0,449.0 L449.0,448.7 L451.0,448.4 L453.0,448.1 L455.0,447.8 L457.0,447.5 L459.0,447.2 L461.0,447.0 L463.0,446.6 L465.0,446.3 L467.0,446.0 L469.0,445.7 L471.0,445.4 L473.0,445.1 L475.0,444.8 L477.0,444.5 L479.0,444.1 L481.0,443.8 L483.0,443.5 L485.0,443.1 L487.0,442.8 L489.0,442.4 L491.0,442.1 L493.0,441.8 L495.0,441.4 L497.0,441.0 L499.0,440.7 L501.0,440.3 L503.0,439.9 L505.0,439.6 L507.0,439.2 L509.0,438.8 L511.0,438.4 L513.0,438.1 L515.0,437.7 L517.0,437.3 L519.0,436.9 L521.0,436.5 L523.0,436.1 L525.0,435.7 L527.0,435.4 L529.0,435.0 L531.0,434.6 L533.0,434.2 L535.0,433.8 L537.0,433.5 L539.0,433.1 L541.0,432.7 L543.0,432.3 L545.0,432.0 L547.0,431.6 L549.0,431.3 L551.0,430.9 L553.0,430.6 L555.0,430.2 L557.0,429.9 L559.0,429.6 L561.0,429.3 L563.0,429.0 L565.0,428.7 L567.0,428.4 L569.0,428.1 L571.0,427.8 L573.0,427.5 L575.0,427.3 L577.0,427.0 L579.0,426.8 L581.0,426.5 L583.0,426.3 L585.0,426.1 L587.0,425.9 L589.0,425.7 L591.0,425.5 L593.0,425.3 L595.0,425.2 L597.0,425.0 L599.0,424.8 L601.0,424.7 L603.0,424.5 L605.0,424.4 L607.0,424.3 L609.0,424.2 L611.0,424.1 L613.0,424.0 L615.0,423.9 L617.0,423.8 L619.0,423.7 L621.0,423.7 L623.0,423.6 L625.0,423.6 L627.0,423.5 L629.0,423.5 L631.0,423.5 L633.0,423.5 L635.0,423.5 L637.0,423.5 L639.0,423.5 L641.0,423.5 L643.0,423.5 L645.0,423.6 L647.0,423.6 L649.0,423.7 L651.0,423.7 L653.0,423.8 L655.0,423.9 L657.0,424.0 L659.0,424.0 L661.0,424.1 L663.0,424.2 L665.0,424.3 L667.0,424.4 L669.0,424.6 L671.0,424.7 L673.0,424.8 L675.0,424.9 L677.0,425.0 L679.0,425.1 L681.0,425.2 L683.0,425.3 L685.0,425.4 L687.0,425.6 L689.0,425.7 L691.0,425.7 L693.0,425.8 L695.0,425.9 L697.0,426.0 L699.0,426.1 L701.0,426.1 L703.0,426.2 L705.0,426.2 L707.0,426.3 L709.0,426.3 L711.0,426.3 L713.0,426.3 L715.0,426.3 L717.0,426.3 L719.0,426.3 L721.0,426.2 L723.0,426.2 L725.0,426.1 L727.0,426.0 L729.0,425.9 L731.0,425.8 L733.0,425.6 L735.0,425.5 L737.0,425.3 L739.0,425.1 L741.0,424.9 L743.0,424.6 L745.0,424.4 L747.0,424.1 L749.0,423.8 L751.0,423.5 L753.0,423.1 L755.0,422.8 L757.0,422.4 L759.0,422.0 L761.0,421.6 L763.0,421.1 L765.0,420.6 L767.0,420.1 L769.0,419.6 L771.0,419.1 L773.0,418.5 L775.0,417.9 L777.0,417.3 L779.0,416.6 L781.0,416.0 L783.0,415.3 L785.0,414.6 L787.0,413.9 L789.0,413.1 L791.0,412.4 L793.0,411.6 L795.0,410.9 L797.0,410.1 L799.0,409.3 L801.0,408.5 L803.0,407.8 L805.0,407.0 L807.0,406.2 L809.0,405.5 L811.0,404.7 L813.0,404.0 L815.0,403.3 L817.0,402.6 L819.0,401.9 L821.0,401.2 L823.0,400.5 L825.0,399.9 L827.0,399.3 L829.0,398.7 L831.0,398.2 L833.0,397.7 L835.0,397.2 L837.0,396.7 L839.0,396.2 L841.0,395.8 L843.0,395.4 L845.0,395.0 L847.0,394.7 L849.0,394.3 L851.0,394.0 L853.0,393.7 L855.0,393.4 L857.0,393.2 L859.0,392.9 L861.0,392.7 L863.0,392.5 L865.0,392.3 L867.0,392.1 L869.0,391.9 L871.0,391.8 L873.0,391.6 L875.0,391.5 L877.0,391.4 L879.0,391.3 L881.0,391.2 L883.0,391.1 L885.0,391.0 L887.0,390.9 L889.0,390.9 L891.0,390.8 L893.0,390.8 L895.0,390.7 L897.0,390.7 L899.0,390.7 L901.0,390.6 L903.0,390.6 L905.0,390.6 L907.0,390.6 L909.0,390.5 L911.0,390.5 L913.0,390.5 L915.0,390.5 L917.0,390.4 L919.0,390.4 L921.0,390.4 L923.0,390.4 L925.0,390.3 L927.0,390.3 L929.0,390.2 L931.0,390.2 L933.0,390.1 L935.0,390.1 L937.0,390.0 L939.0,389.9 L941.0,389.8 L943.0,389.7 L945.0,389.6 L947.0,389.5 L949.0,389.3 L951.0,389.2 L953.0,389.0 L955.0,388.9 L957.0,388.7 L959.0,388.5 L961.0,388.3 L963.0,388.1 L965.0,387.8 L967.0,387.6 L969.0,387.4 L971.0,387.1 L973.0,386.8 L975.0,386.6 L977.0,386.3 L979.0,386.0 L981.0,385.7 L983.0,385.4 L985.0,385.0 L987.0,384.7 L989.0,384.4 L991.0,384.1 L993.0,383.7 L995.0,383.4 L997.0,383.0 L999.0,382.6 L1001.0,382.3 L1003.0,381.9 L1005.0,381.5 L1007.0,381.1 L1009.0,380.7 L1011.0,380.3 L1013.0,379.9 L1015.0,379.5 L1017.0,379.1 L1019.0,378.7 L1021.0,378.3 L1023.0,377.9 L1025.0,377.5 L1027.0,377.0 L1029.0,376.6 L1031.0,376.2 L1033.0,375.8 L1035.0,375.3 L1037.0,374.9 L1039.0,374.5 L1041.0,374.0 L1043.0,373.6 L1045.0,373.2 L1047.0,372.7 L1049.0,372.3 L1051.0,371.9 L1053.0,371.4 L1055.0,371.0 L1057.0,370.5 L1059.0,370.0 L1061.0,369.6 L1063.0,369.1 L1065.0,368.6 L1067.0,368.2 L1069.0,367.7 L1071.0,367.2 L1073.0,366.7 L1075.0,366.2 L1077.0,365.7 L1079.0,365.1 L1081.0,364.6 L1083.0,364.1 L1085.0,363.5 L1087.0,362.9 L1089.0,362.4 L1091.0,361.8 L1093.0,361.2 L1095.0,360.6 L1097.0,360.0 L1099.0,359.4 L1101.0,358.8 L1103.0,358.2 L1105.0,357.6 L1107.0,357.0 L1109.0,356.4 L1111.0,355.7 L1113.0,355.1 L1115.0,354.5 L1117.0,353.9 L1119.0,353.2 L1121.0,352.6 L1123.0,352.0 L1125.0,351.3 L1127.0,350.7 L1129.0,350.1 L1131.0,349.4 L1133.0,348.8 L1135.0,348.2 L1137.0,347.5 L1139.0,346.9 L1141.0,346.3 L1143.0,345.7 L1145.0,345.0 L1147.0,344.4 L1149.0,343.8 L1151.0,343.2 L1153.0,342.6 L1155.0,341.9 L1157.0,341.3 L1159.0,340.7 L1161.0,340.1 L1163.0,339.5 L1165.0,338.9 L1167.0,338.3 L1169.0,337.8 L1171.0,337.2 L1173.0,336.6 L1175.0,336.0 L1177.0,335.5 L1179.0,334.9 L1181.0,334.3 L1183.0,333.8 L1185.0,333.2 L1187.0,332.7 L1189.0,332.1 L1191.0,331.6 L1193.0,331.1 L1195.0,330.5 L1197.0,330.0 L1199.0,329.5 L1201.0,329.0 L1203.0,328.5 L1205.0,327.9 L1207.0,327.4 L1209.0,326.9 L1211.0,326.4 L1213.0,325.9 L1215.0,325.4 L1217.0,325.0 L1219.0,324.5 L1221.0,324.0 L1223.0,323.5 L1225.0,323.0 L1227.0,322.6 L1229.0,322.1 L1231.0,321.6 L1233.0,321.2 L1235.0,320.7 L1237.0,320.3 L1239.0,319.8 L1241.0,319.4 L1243.0,318.9 L1245.0,318.5 L1247.0,318.0 L1249.0,317.6 L1251.0,317.2 L1253.0,316.7 L1255.0,316.3 L1257.0,315.9 L1259.0,315.4 L1261.0,315.0 L1263.0,314.6 L1265.0,314.2 L1267.0,313.8 L1269.0,313.4 L1271.0,312.9 L1273.0,312.5 L1275.0,312.1 L1277.0,311.7 L1279.0,311.3 L1281.0,310.9 L1283.0,310.5 L1285.0,310.1 L1287.0,309.7 L1289.0,309.3 L1291.0,309.0 L1293.0,308.6 L1295.0,308.2 L1297.0,307.8 L1299.0,307.4 L1301.0,307.0 L1303.0,306.6 L1305.0,306.3 L1307.0,305.9 L1309.0,305.5 L1311.0,305.1 L1313.0,304.7 L1315.0,304.4 L1317.0,304.0 L1319.0,303.6 L1321.0,303.3 L1323.0,302.9 L1325.0,302.5 L1327.0,302.1 L1329.0,301.8 L1331.0,301.4 L1333.0,301.0 L1335.0,300.7 L1337.0,300.3 L1339.0,299.9 L1341.0,299.6 L1343.0,299.2 L1345.0,298.9 L1347.0,298.5 L1349.0,298.1 L1351.0,297.8 L1353.0,297.4 L1355.0,297.0 L1357.0,296.7 L1359.0,296.3 L1361.0,296.0 L1363.0,295.6 L1365.0,295.2 L1367.0,294.9 L1369.0,294.5 L1371.0,294.1 L1373.0,293.8 L1375.0,293.4 L1377.0,293.0 L1379.0,292.7 L1381.0,292.3 L1383.0,291.9 L1385.0,291.6 L1387.0,291.2 L1389.0,290.8 L1391.0,290.5 L1393.0,290.1 L1395.0,289.7 L1397.0,289.4 L1399.0,289.0 L1401.0,288.6 L1403.0,288.2 L1405.0,287.9 L1407.0,287.5 L1409.0,287.1 L1411.0,286.7 L1413.0,286.4 L1415.0,286.0 L1417.0,285.6 L1419.0,285.2 L1421.0,284.8 L1423.0,284.4 L1425.0,284.0 L1427.0,283.7 L1429.0,283.3 L1431.0,282.9 L1433.0,282.5 L1435.0,282.1 L1437.0,281.7 L1439.0,281.3 L1441.0,280.9 L1443.0,280.5 L1445.0,280.0 L1447.0,279.6 L1449.0,279.2 L1451.0,278.8 L1453.0,278.4 L1455.0,278.0 L1457.0,277.6 L1459.0,277.1 L1461.0,276.7 L1463.0,276.3 L1465.0,275.8 L1467.0,275.4 L1469.0,275.0 L1471.0,274.5 L1473.0,274.1 L1475.0,273.6 L1477.0,273.2 L1479.0,272.7 L1481.0,272.3 L1483.0,271.8 L1485.0,271.4 L1487.0,270.9 L1489.0,270.4 L1491.0,270.0 L1493.0,269.5 L1495.0,269.0 L1497.0,268.5 L1499.0,268.0 L1501.0,267.6 L1503.0,267.1 L1505.0,266.6 L1507.0,266.1 L1509.0,265.6 L1511.0,265.1 L1513.0,264.6 L1515.0,264.0 L1517.0,263.5 L1519.0,263.0 L1521.0,262.5 L1523.0,261.9 L1525.0,261.4 L1527.0,260.9 L1529.0,260.3 L1531.0,259.8 L1533.0,259.2 L1535.0,258.7 L1537.0,258.1 L1539.0,257.6 L1541.0,257.0 L1543.0,256.4 L1545.0,255.8 L1547.0,255.3 L1548.0,255.0" fill="none" stroke="#ff4848" stroke-opacity="0.55" stroke-width="1"/>
<path d="M35.0,490.1 L37.0,490.0 L39.0,490.0 L41.0,489.9 L43.0,489.9 L45.0,489.9 L47.0,489.8 L49.0,489.8 L51.0,489.7 L53.0,489.6 L55.0,489.6 L57.0,489.5 L59.0,489.5 L61.0,489.4 L63.0,489.3 L65.0,489.3 L67.0,489.2 L69.0,489.1 L71.0,489.0 L73.0,488.9 L75.0,488.9 L77.0,488.8 L79.0,488.7 L81.0,488.6 L83.0,488.5 L85.0,488.4 L87.0,488.3 L89.0,488.2 L91.0,488.1 L93.0,488.0 L95.0,487.9 L97.0,487.8 L99.0,487.7 L101.0,487.6 L103.0,487.5 L105.0,487.4 L107.0,487.3 L109.0,487.2 L111.0,487.1 L113.0,486.9 L115.0,486.8 L117.0,486.7 L119.0,486.6 L121.0,486.5 L123.0,486.3 L125.0,486.2 L127.0,486.1 L129.0,485.9 L131.0,485.8 L133.0,485.7 L135.0,485.5 L137.0,485.4 L139.0,485.3 L141.0,485.1 L143.0,485.0 L145.0,484.8 L147.0,484.7 L149.0,484.5 L151.0,484.4 L153.0,484.2 L155.0,484.1 L157.0,483.9 L159.0,483.8 L161.0,483.6 L163.0,483.5 L165.0,483.3 L167.0,483.2 L169.0,483.0 L171.0,482.8 L173.0,482.7 L175.0,482.5 L177.0,482.3 L179.0,482.2 L181.0,482.0 L183.0,481.8 L185.0,481.7 L187.0,481.5 L189.0,481.3 L191.0,481.2 L193.0,481.0 L195.0,480.8 L197.0,480.6 L199.0,480.5 L201.0,480.3 L203.0,480.1 L205.0,479.9 L207.0,479.8 L209.0,479.6 L211.0,479.4 L213.0,479.2 L215.0,479.0 L217.0,478.8 L219.0,478.7 L221.0,478.5 L223.0,478.3 L225.0,478.1 L227.0,477.9 L229.0,477.7 L231.0,477.5 L233.0,477.3 L235.0,477.2 L237.0,477.0 L239.0,476.8 L241.0,476.6 L243.0,476.4 L245.0,476.2 L247.0,476.0 L249.0,475.8 L251.0,475.6 L253.0,475.4 L255.0,475.2 L257.0,475.0 L259.0,474.8 L261.0,474.6 L263.0,474.4 L265.0,474.2 L267.0,474.0 L269.0,473.9 L271.0,473.7 L273.0,473.5 L275.0,473.3 L277.0,473.1 L279.0,472.9 L281.0,472.7 L283.0,472.5 L285.0,472.3 L287.0,472.1 L289.0,471.9 L291.0,471.7 L293.0,471.5 L295.0,471.3 L297.0,471.1 L299.0,470.9 L301.0,470.7 L303.0,470.5 L305.0,470.3 L307.0,470.1 L309.0,469.9 L311.0,469.7 L313.0,469.5 L315.0,469.3 L317.0,469.1 L319.0,468.9 L321.0,468.7 L323.0,468.5 L325.0,468.3 L327.0,468.1 L329.0,467.9 L331.0,467.7 L333.0,467.5 L335.0,467.3 L337.0,467.1 L339.0,466.9 L341.0,466.7 L343.0,466.5 L345.0,466.3 L347.0,466.1 L349.0,465.9 L351.0,465.7 L353.0,465.5 L355.0,465.3 L357.0,465.1 L359.0,464.9 L361.0,464.7 L363.0,464.5 L365.0,464.3 L367.0,464.1 L369.0,463.9 L371.0,463.7 L373.0,463.5 L375.0,463.3 L377.0,463.1 L379.0,462.9 L381.0,462.7 L383.0,462.5 L385.0,462.3 L387.0,462.1 L389.0,461.9 L391.0,461.7 L393.0,461.5 L395.0,461.3 L397.0,461.0 L399.0,460.8 L401.0,460.6 L403.0,460.4 L405.0,460.2 L407.0,460.0 L409.0,459.7 L411.0,459.5 L413.0,459.3 L415.0,459.1 L417.0,458.8 L419.0,458.6 L421.0,458.4 L423.0,458.1 L425.0,457.9 L427.0,457.7 L429.0,457.4 L431.0,457.2 L433.0,456.9 L435.0,456.7 L437.0,456.4 L439.0,456.2 L441.0,455.9 L443.0,455.7 L445.0,455.4 L447.0,455.2 L449.0,454.9 L451.0,454.7 L453.0,454.4 L455.0,454.1 L457.0,453.8 L459.0,453.6 L461.0,453.3 L463.0,453.0 L465.0,452.7 L467.0,452.5 L469.0,452.2 L471.0,451.9 L473.0,451.6 L475.0,451.3 L477.0,451.0 L479.0,450.7 L481.0,450.4 L483.0,450.1 L485.0,449.8 L487.0,449.5 L489.0,449.1 L491.0,448.8 L493.0,448.5 L495.0,448.2 L497.0,447.8 L499.0,447.5 L501.0,447.2 L503.0,446.8 L505.0,446.5 L507.0,446.1 L509.0,445.8 L511.0,445.4 L513.0,445.1 L515.0,444.7 L517.0,444.4 L519.0,444.0 L521.0,443.7 L523.0,443.3 L525.0,443.0 L527.0,442.6 L529.0,442.2 L531.0,441.9 L533.0,441.5 L535.0,441.2 L537.0,440.8 L539.0,440.5 L541.0,440.2 L543.0,439.8 L545.0,439.5 L547.0,439.2 L549.0,438.8 L551.0,438.5 L553.0,438.2 L555.0,437.9 L557.0,437.6 L559.0,437.3 L561.0,437.0 L563.0,436.7 L565.0,436.4 L567.0,436.1 L569.0,435.9 L571.0,435.6 L573.0,435.4 L575.0,435.1 L577.0,434.9 L579.0,434.7 L581.0,434.5 L583.0,434.3 L585.0,434.1 L587.0,433.9 L589.0,433.7 L591.0,433.5 L593.0,433.3 L595.0,433.2 L597.0,433.0 L599.0,432.9 L601.0,432.7 L603.0,432.6 L605.0,432.5 L607.0,432.4 L609.0,432.3 L611.0,432.2 L613.0,432.1 L615.0,432.0 L617.0,431.9 L619.0,431.9 L621.0,431.8 L623.0,431.8 L625.0,431.7 L627.0,431.7 L629.0,431.7 L631.0,431.6 L633.0,431.6 L635.0,431.6 L637.0,431.6 L639.0,431.6 L641.0,431.7 L643.0,431.7 L645.0,431.7 L647.0,431.8 L649.0,431.8 L651.0,431.9 L653.0,431.9 L655.0,432.0 L657.0,432.1 L659.0,432.2 L661.0,432.2 L663.0,432.3 L665.0,432.4 L667.0,432.5 L669.0,432.6 L671.0,432.7 L673.0,432.8 L675.0,432.9 L677.0,433.0 L679.0,433.1 L681.0,433.3 L683.0,433.4 L685.0,433.5 L687.0,433.5 L689.0,433.6 L691.0,433.7 L693.0,433.8 L695.0,433.9 L697.0,434.0 L699.0,434.0 L701.0,434.1 L703.0,434.1 L705.0,434.2 L707.0,434.2 L709.0,434.2 L711.0,434.3 L713.0,434.3 L715.0,434.3 L717.0,434.2 L719.0,434.2 L721.0,434.2 L723.0,434.1 L725.0,434.1 L727.0,434.0 L729.0,433.9 L731.0,433.8 L733.0,433.6 L735.0,433.5 L737.0,433.3 L739.0,433.1 L741.0,432.9 L743.0,432.7 L745.0,432.5 L747.0,432.2 L749.0,431.9 L751.0,431.6 L753.0,431.3 L755.0,431.0 L757.0,430.6 L759.0,430.3 L761.0,429.9 L763.0,429.4 L765.0,429.0 L767.0,428.5 L769.0,428.1 L771.0,427.6 L773.0,427.0 L775.0,426.5 L777.0,425.9 L779.0,425.3 L781.0,424.7 L783.0,424.1 L785.0,423.4 L787.0,422.7 L789.0,422.1 L791.0,421.4 L793.0,420.7 L795.0,420.0 L797.0,419.3 L799.0,418.6 L801.0,417.8 L803.0,417.1 L805.0,416.4 L807.0,415.7 L809.0,415.0 L811.0,414.3 L813.0,413.6 L815.0,413.0 L817.0,412.3 L819.0,411.7 L821.0,411.1 L823.0,410.5 L825.0,409.9 L827.0,409.3 L829.0,408.8 L831.0,408.3 L833.0,407.8 L835.0,407.3 L837.0,406.9 L839.0,406.5 L841.0,406.1 L843.0,405.7 L845.0,405.4 L847.0,405.0 L849.0,404.7 L851.0,404.4 L853.0,404.2 L855.0,403.9 L857.0,403.7 L859.0,403.4 L861.0,403.2 L863.0,403.0 L865.0,402.8 L867.0,402.7 L869.0,402.5 L871.0,402.4 L873.0,402.2 L875.0,402.1 L877.0,402.0 L879.0,401.9 L881.0,401.8 L883.0,401.7 L885.0,401.7 L887.0,401.6 L889.0,401.5 L891.0,401.5 L893.0,401.4 L895.0,401.4 L897.0,401.4 L899.0,401.3 L901.0,401.3 L903.0,401.3 L905.0,401.3 L907.0,401.2 L909.0,401.2 L911.0,401.2 L913.0,401.2 L915.0,401.2 L917.0,401.1 L919.0,401.1 L921.0,401.1 L923.0,401.1 L925.0,401.0 L927.0,401.0 L929.0,401.0 L931.0,400.9 L933.0,400.9 L935.0,400.8 L937.0,400.7 L939.0,400.6 L941.0,400.6 L943.0,400.5 L945.0,400.4 L947.0,400.3 L949.0,400.1 L951.0,400.0 L953.0,399.8 L955.0,399.7 L957.0,399.5 L959.0,399.3 L961.0,399.1 L963.0,398.9 L965.0,398.7 L967.0,398.5 L969.0,398.3 L971.0,398.1 L973.0,397.8 L975.0,397.6 L977.0,397.3 L979.0,397.0 L981.0,396.7 L983.0,396.5 L985.0,396.2 L987.0,395.9 L989.0,395.6 L991.0,395.2 L993.0,394.9 L995.0,394.6 L997.0,394.3 L999.0,393.9 L1001.0,393.6 L1003.0,393.2 L1005.0,392.9 L1007.0,392.5 L1009.0,392.2 L1011.0,391.8 L1013.0,391.4 L1015.0,391.1 L1017.0,390.7 L1019.0,390.3 L1021.0,389.9 L1023.0,389.5 L1025.0,389.1 L1027.0,388.8 L1029.0,388.4 L1031.0,388.0 L1033.0,387.6 L1035.0,387.2 L1037.0,386.8 L1039.0,386.4 L1041.0,386.0 L1043.0,385.6 L1045.0,385.2 L1047.0,384.8 L1049.0,384.4 L1051.0,384.0 L1053.0,383.6 L1055.0,383.2 L1057.0,382.7 L1059.0,382.3 L1061.0,381.9 L1063.0,381.5 L1065.0,381.0 L1067.0,380.6 L1069.0,380.1 L1071.0,379.7 L1073.0,379.2 L1075.0,378.7 L1077.0,378.3 L1079.0,377.8 L1081.0,377.3 L1083.0,376.8 L1085.0,376.3 L1087.0,375.8 L1089.0,375.2 L1091.0,374.7 L1093.0,374.2 L1095.0,373.6 L1097.0,373.1 L1099.0,372.5 L1101.0,371.9 L1103.0,371.4 L1105.0,370.8 L1107.0,370.2 L1109.0,369.7 L1111.0,369.1 L1113.0,368.5 L1115.0,367.9 L1117.0,367.4 L1119.0,366.8 L1121.0,366.2 L1123.0,365.6 L1125.0,365.0 L1127.0,364.5 L1129.0,363.9 L1131.0,363.3 L1133.0,362.7 L1135.0,362.1 L1137.0,361.5 L1139.0,361.0 L1141.0,360.4 L1143.0,359.8 L1145.0,359.2 L1147.0,358.7 L1149.0,358.1 L1151.0,357.5 L1153.0,356.9 L1155.0,356.4 L1157.0,355.8 L1159.0,355.3 L1161.0,354.7 L1163.0,354.1 L1165.0,353.6 L1167.0,353.0 L1169.0,352.5 L1171.0,352.0 L1173.0,351.4 L1175.0,350.9 L1177.0,350.4 L1179.0,349.9 L1181.0,349.3 L1183.0,348.8 L1185.0,348.3 L1187.0,347.8 L1189.0,347.3 L1191.0,346.8 L1193.0,346.3 L1195.0,345.8 L1197.0,345.4 L1199.0,344.9 L1201.0,344.4 L1203.0,343.9 L1205.0,343.4 L1207.0,343.0 L1209.0,342.5 L1211.0,342.1 L1213.0,341.6 L1215.0,341.1 L1217.0,340.7 L1219.0,340.2 L1221.0,339.8 L1223.0,339.4 L1225.0,338.9 L1227.0,338.5 L1229.0,338.1 L1231.0,337.6 L1233.0,337.2 L1235.0,336.8 L1237.0,336.4 L1239.0,335.9 L1241.0,335.5 L1243.0,335.1 L1245.0,334.7 L1247.0,334.3 L1249.0,333.9 L1251.0,333.5 L1253.0,333.1 L1255.0,332.7 L1257.0,332.3 L1259.0,331.9 L1261.0,331.5 L1263.0,331.1 L1265.0,330.7 L1267.0,330.4 L1269.0,330.0 L1271.0,329.6 L1273.0,329.2 L1275.0,328.9 L1277.0,328.5 L1279.0,328.1 L1281.0,327.7 L1283.0,327.4 L1285.0,327.0 L1287.0,326.6 L1289.0,326.3 L1291.0,325.9 L1293.0,325.6 L1295.0,325.2 L1297.0,324.8 L1299.0,324.5 L1301.0,324.1 L1303.0,323.8 L1305.0,323.4 L1307.0,323.1 L1309.0,322.7 L1311.0,322.4 L1313.0,322.0 L1315.0,321.7 L1317.0,321.3 L1319.0,321.0 L1321.0,320.7 L1323.0,320.3 L1325.0,320.0 L1327.0,319.6 L1329.0,319.3 L1331.0,319.0 L1333.0,318.6 L1335.0,318.3 L1337.0,317.9 L1339.0,317.6 L1341.0,317.3 L1343.0,316.9 L1345.0,316.6 L1347.0,316.3 L1349.0,315.9 L1351.0,315.6 L1353.0,315.3 L1355.0,314.9 L1357.0,314.6 L1359.0,314.3 L1361.0,313.9 L1363.0,313.6 L1365.0,313.2 L1367.0,312.9 L1369.0,312.6 L1371.0,312.2 L1373.0,311.9 L1375.0,311.6 L1377.0,311.2 L1379.0,310.9 L1381.0,310.6 L1383.0,310.2 L1385.0,309.9 L1387.0,309.5 L1389.0,309.2 L1391.0,308.9 L1393.0,308.5 L1395.0,308.2 L1397.0,307.8 L1399.0,307.5 L1401.0,307.2 L1403.0,306.8 L1405.0,306.5 L1407.0,306.1 L1409.0,305.8 L1411.0,305.4 L1413.0,305.1 L1415.0,304.7 L1417.0,304.4 L1419.0,304.0 L1421.0,303.6 L1423.0,303.3 L1425.0,302.9 L1427.0,302.6 L1429.0,302.2 L1431.0,301.8 L1433.0,301.5 L1435.0,301.1 L1437.0,300.7 L1439.0,300.4 L1441.0,300.0 L1443.0,299.6 L1445.0,299.2 L1447.0,298.9 L1449.0,298.5 L1451.0,298.1 L1453.0,297.7 L1455.0,297.3 L1457.0,296.9 L1459.0,296.5 L1461.0,296.1 L1463.0,295.7 L1465.0,295.3 L1467.0,294.9 L1469.0,294.5 L1471.0,294.1 L1473.0,293.7 L1475.0,293.3 L1477.0,292.9 L1479.0,292.5 L1481.0,292.1 L1483.0,291.6 L1485.0,291.2 L1487.0,290.8 L1489.0,290.4 L1491.0,289.9 L1493.0,289.5 L1495.0,289.0 L1497.0,288.6 L1499.0,288.2 L1501.0,287.7 L1503.0,287.2 L1505.0,286.8 L1507.0,286.3 L1509.0,285.9 L1511.0,285.4 L1513.0,284.9 L1515.0,284.5 L1517.0,284.0 L1519.0,283.5 L1521.0,283.0 L1523.0,282.5 L1525.0,282.0 L1527.0,281.5 L1529.0,281.0 L1531.0,280.5 L1533.0,280.0 L1535.0,279.5 L1537.0,279.0 L1539.0,278.5 L1541.0,277.9 L1543.0,277.4 L1545.0,276.9 L1547.0,276.3 L1548.0,276.1" fill="none" stroke="#ff6060" stroke-opacity="0.45" stroke-width="1"/>
<path d="M35.0,493.4 L37.0,493.3 L39.0,493.3 L41.0,493.2 L43.0,493.2 L45.0,493.2 L47.0,493.1 L49.0,493.1 L51.0,493.0 L53.0,493.0 L55.0,492.9 L57.0,492.9 L59.0,492.8 L61.0,492.7 L63.0,492.7 L65.0,492.6 L67.0,492.5 L69.0,492.5 L71.0,492.4 L73.0,492.3 L75.0,492.3 L77.0,492.2 L79.0,492.1 L81.0,492.0 L83.0,491.9 L85.0,491.9 L87.0,491.8 L89.0,491.7 L91.0,491.6 L93.0,491.5 L95.0,491.4 L97.0,491.3 L99.0,491.2 L101.0,491.1 L103.0,491.0 L105.0,490.9 L107.0,490.8 L109.0,490.7 L111.0,490.6 L113.0,490.5 L115.0,490.4 L117.0,490.3 L119.0,490.2 L121.0,490.0 L123.0,489.9 L125.0,489.8 L127.0,489.7 L129.0,489.6 L131.0,489.4 L133.0,489.3 L135.0,489.2 L137.0,489.1 L139.0,488.9 L141.0,488.8 L143.0,488.7 L145.0,488.6 L147.0,488.4 L149.0,488.3 L151.0,488.1 L153.0,488.0 L155.0,487.9 L157.0,487.7 L159.0,487.6 L161.0,487.5 L163.0,487.3 L165.0,487.2 L167.0,487.0 L169.0,486.9 L171.0,486.7 L173.0,486.6 L175.0,486.4 L177.0,486.3 L179.0,486.1 L181.0,486.0 L183.0,485.8 L185.0,485.7 L187.0,485.5 L189.0,485.3 L191.0,485.2 L193.0,485.0 L195.0,484.9 L197.0,484.7 L199.0,484.6 L201.0,484.4 L203.0,484.2 L205.0,484.1 L207.0,483.9 L209.0,483.7 L211.0,483.6 L213.0,483.4 L215.0,483.2 L217.0,483.1 L219.0,482.9 L221.0,482.7 L223.0,482.6 L225.0,482.4 L227.0,482.2 L229.0,482.0 L231.0,481.9 L233.0,481.7 L235.0,481.5 L237.0,481.3 L239.0,481.2 L241.0,481.0 L243.0,480.8 L245.0,480.6 L247.0,480.5 L249.0,480.3 L251.0,480.1 L253.0,479.9 L255.0,479.7 L257.0,479.6 L259.0,479.4 L261.0,479.2 L263.0,479.0 L265.0,478.9 L267.0,478.7 L269.0,478.5 L271.0,478.3 L273.0,478.1 L275.0,477.9 L277.0,477.8 L279.0,477.6 L281.0,477.4 L283.0,477.2 L285.0,477.0 L287.0,476.9 L289.0,476.7 L291.0,476.5 L293.0,476.3 L295.0,476.1 L297.0,475.9 L299.0,475.8 L301.0,475.6 L303.0,475.4 L305.0,475.2 L307.0,475.0 L309.0,474.8 L311.0,474.7 L313.0,474.5 L315.0,474.3 L317.0,474.1 L319.0,473.9 L321.0,473.8 L323.0,473.6 L325.0,473.4 L327.0,473.2 L329.0,473.0 L331.0,472.8 L333.0,472.7 L335.0,472.5 L337.0,472.3 L339.0,472.1 L341.0,471.9 L343.0,471.8 L345.0,471.6 L347.0,471.4 L349.0,471.2 L351.0,471.0 L353.0,470.9 L355.0,470.7 L357.0,470.5 L359.0,470.3 L361.0,470.1 L363.0,470.0 L365.0,469.8 L367.0,469.6 L369.0,469.4 L371.0,469.2 L373.0,469.0 L375.0,468.9 L377.0,468.7 L379.0,468.5 L381.0,468.3 L383.0,468.1 L385.0,467.9 L387.0,467.7 L389.0,467.5 L391.0,467.3 L393.0,467.1 L395.0,466.9 L397.0,466.8 L399.0,466.6 L401.0,466.4 L403.0,466.2 L405.0,466.0 L407.0,465.8 L409.0,465.5 L411.0,465.3 L413.0,465.1 L415.0,464.9 L417.0,464.7 L419.0,464.5 L421.0,464.3 L423.0,464.1 L425.0,463.9 L427.0,463.6 L429.0,463.4 L431.0,463.2 L433.0,463.0 L435.0,462.8 L437.0,462.5 L439.0,462.3 L441.0,462.1 L443.0,461.8 L445.0,461.6 L447.0,461.4 L449.0,461.1 L451.0,460.9 L453.0,460.6 L455.0,460.4 L457.0,460.2 L459.0,459.9 L461.0,459.7 L463.0,459.4 L465.0,459.1 L467.0,458.9 L469.0,458.6 L471.0,458.3 L473.0,458.1 L475.0,457.8 L477.0,457.5 L479.0,457.3 L481.0,457.0 L483.0,456.7 L485.0,456.4 L487.0,456.1 L489.0,455.8 L491.0,455.5 L493.0,455.3 L495.0,455.0 L497.0,454.6 L499.0,454.3 L501.0,454.0 L503.0,453.7 L505.0,453.4 L507.0,453.1 L509.0,452.8 L511.0,452.4 L513.0,452.1 L515.0,451.8 L517.0,451.5 L519.0,451.1 L521.0,450.8 L523.0,450.5 L525.0,450.2 L527.0,449.8 L529.0,449.5 L531.0,449.2 L533.0,448.9 L535.0,448.6 L537.0,448.2 L539.0,447.9 L541.0,447.6 L543.0,447.3 L545.0,447.0 L547.0,446.7 L549.0,446.4 L551.0,446.1 L553.0,445.8 L555.0,445.5 L557.0,445.2 L559.0,445.0 L561.0,444.7 L563.0,444.4 L565.0,444.2 L567.0,443.9 L569.0,443.7 L571.0,443.4 L573.0,443.2 L575.0,443.0 L577.0,442.8 L579.0,442.6 L581.0,442.4 L583.0,442.2 L585.0,442.0 L587.0,441.8 L589.0,441.7 L591.0,441.5 L593.0,441.4 L595.0,441.2 L597.0,441.1 L599.0,440.9 L601.0,440.8 L603.0,440.7 L605.0,440.6 L607.0,440.5 L609.0,440.4 L611.0,440.3 L613.0,440.2 L615.0,440.1 L617.0,440.1 L619.0,440.0 L621.0,440.0 L623.0,439.9 L625.0,439.9 L627.0,439.8 L629.0,439.8 L631.0,439.8 L633.0,439.8 L635.0,439.8 L637.0,439.8 L639.0,439.8 L641.0,439.8 L643.0,439.8 L645.0,439.9 L647.0,439.9 L649.0,440.0 L651.0,440.0 L653.0,440.1 L655.0,440.1 L657.0,440.2 L659.0,440.3 L661.0,440.4 L663.0,440.4 L665.0,440.5 L667.0,440.6 L669.0,440.7 L671.0,440.8 L673.0,440.9 L675.0,441.0 L677.0,441.1 L679.0,441.2 L681.0,441.3 L683.0,441.4 L685.0,441.5 L687.0,441.5 L689.0,441.6 L691.0,441.7 L693.0,441.8 L695.0,441.9 L697.0,441.9 L699.0,442.0 L701.0,442.0 L703.0,442.1 L705.0,442.1 L707.0,442.2 L709.0,442.2 L711.0,442.2 L713.0,442.2 L715.0,442.2 L717.0,442.2 L719.0,442.2 L721.0,442.1 L723.0,442.1 L725.0,442.0 L727.0,441.9 L729.0,441.8 L731.0,441.7 L733.0,441.6 L735.0,441.5 L737.0,441.3 L739.0,441.2 L741.0,441.0 L743.0,440.8 L745.0,440.6 L747.0,440.3 L749.0,440.1 L751.0,439.8 L753.0,439.5 L755.0,439.2 L757.0,438.9 L759.0,438.5 L761.0,438.2 L763.0,437.8 L765.0,437.4 L767.0,437.0 L769.0,436.5 L771.0,436.1 L773.0,435.6 L775.0,435.1 L777.0,434.5 L779.0,434.0 L781.0,433.4 L783.0,432.9 L785.0,432.3 L787.0,431.6 L789.0,431.0 L791.0,430.4 L793.0,429.8 L795.0,429.1 L797.0,428.5 L799.0,427.8 L801.0,427.2 L803.0,426.5 L805.0,425.8 L807.0,425.2 L809.0,424.6 L811.0,423.9 L813.0,423.3 L815.0,422.7 L817.0,422.1 L819.0,421.5 L821.0,420.9 L823.0,420.4 L825.0,419.9 L827.0,419.3 L829.0,418.9 L831.0,418.4 L833.0,417.9 L835.0,417.5 L837.0,417.1 L839.0,416.7 L841.0,416.4 L843.0,416.0 L845.0,415.7 L847.0,415.4 L849.0,415.1 L851.0,414.9 L853.0,414.6 L855.0,414.4 L857.0,414.1 L859.0,413.9 L861.0,413.7 L863.0,413.6 L865.0,413.4 L867.0,413.2 L869.0,413.1 L871.0,413.0 L873.0,412.8 L875.0,412.7 L877.0,412.6 L879.0,412.5 L881.0,412.5 L883.0,412.4 L885.0,412.3 L887.0,412.3 L889.0,412.2 L891.0,412.2 L893.0,412.1 L895.0,412.1 L897.0,412.1 L899.0,412.0 L901.0,412.0 L903.0,412.0 L905.0,412.0 L907.0,411.9 L909.0,411.9 L911.0,411.9 L913.0,411.9 L915.0,411.9 L917.0,411.8 L919.0,411.8 L921.0,411.8 L923.0,411.8 L925.0,411.7 L927.0,411.7 L929.0,411.7 L931.0,411.6 L933.0,411.6 L935.0,411.5 L937.0,411.5 L939.0,411.4 L941.0,411.3 L943.0,411.2 L945.0,411.1 L947.0,411.0 L949.0,410.9 L951.0,410.8 L953.0,410.6 L955.0,410.5 L957.0,410.3 L959.0,410.2 L961.0,410.0 L963.0,409.8 L965.0,409.6 L967.0,409.4 L969.0,409.2 L971.0,409.0 L973.0,408.8 L975.0,408.5 L977.0,408.3 L979.0,408.1 L981.0,407.8 L983.0,407.5 L985.0,407.3 L987.0,407.0 L989.0,406.7 L991.0,406.4 L993.0,406.1 L995.0,405.8 L997.0,405.5 L999.0,405.2 L1001.0,404.9 L1003.0,404.6 L1005.0,404.3 L1007.0,403.9 L1009.0,403.6 L1011.0,403.3 L1013.0,402.9 L1015.0,402.6 L1017.0,402.2 L1019.0,401.9 L1021.0,401.6 L1023.0,401.2 L1025.0,400.8 L1027.0,400.5 L1029.0,400.1 L1031.0,399.8 L1033.0,399.4 L1035.0,399.0 L1037.0,398.7 L1039.0,398.3 L1041.0,398.0 L1043.0,397.6 L1045.0,397.2 L1047.0,396.9 L1049.0,396.5 L1051.0,396.1 L1053.0,395.7 L1055.0,395.4 L1057.0,395.0 L1059.0,394.6 L1061.0,394.2 L1063.0,393.8 L1065.0,393.4 L1067.0,393.0 L1069.0,392.6 L1071.0,392.2 L1073.0,391.7 L1075.0,391.3 L1077.0,390.9 L1079.0,390.4 L1081.0,390.0 L1083.0,389.5 L1085.0,389.0 L1087.0,388.6 L1089.0,388.1 L1091.0,387.6 L1093.0,387.1 L1095.0,386.6 L1097.0,386.1 L1099.0,385.6 L1101.0,385.1 L1103.0,384.6 L1105.0,384.0 L1107.0,383.5 L1109.0,383.0 L1111.0,382.5 L1113.0,381.9 L1115.0,381.4 L1117.0,380.9 L1119.0,380.3 L1121.0,379.8 L1123.0,379.3 L1125.0,378.7 L1127.0,378.2 L1129.0,377.7 L1131.0,377.1 L1133.0,376.6 L1135.0,376.1 L1137.0,375.5 L1139.0,375.0 L1141.0,374.5 L1143.0,373.9 L1145.0,373.4 L1147.0,372.9 L1149.0,372.4 L1151.0,371.8 L1153.0,371.3 L1155.0,370.8 L1157.0,370.3 L1159.0,369.8 L1161.0,369.3 L1163.0,368.8 L1165.0,368.3 L1167.0,367.8 L1169.0,367.3 L1171.0,366.8 L1173.0,366.3 L1175.0,365.8 L1177.0,365.3 L1179.0,364.8 L1181.0,364.4 L1183.0,363.9 L1185.0,363.4 L1187.0,363.0 L1189.0,362.5 L1191.0,362.0 L1193.0,361.6 L1195.0,361.1 L1197.0,360.7 L1199.0,360.3 L1201.0,359.8 L1203.0,359.4 L1205.0,359.0 L1207.0,358.5 L1209.0,358.1 L1211.0,357.7 L1213.0,357.3 L1215.0,356.8 L1217.0,356.4 L1219.0,356.0 L1221.0,355.6 L1223.0,355.2 L1225.0,354.8 L1227.0,354.4 L1229.0,354.0 L1231.0,353.6 L1233.0,353.2 L1235.0,352.8 L1237.0,352.5 L1239.0,352.1 L1241.0,351.7 L1243.0,351.3 L1245.0,350.9 L1247.0,350.6 L1249.0,350.2 L1251.0,349.8 L1253.0,349.5 L1255.0,349.1 L1257.0,348.7 L1259.0,348.4 L1261.0,348.0 L1263.0,347.7 L1265.0,347.3 L1267.0,347.0 L1269.0,346.6 L1271.0,346.3 L1273.0,345.9 L1275.0,345.6 L1277.0,345.2 L1279.0,344.9 L1281.0,344.6 L1283.0,344.2 L1285.0,343.9 L1287.0,343.5 L1289.0,343.2 L1291.0,342.9 L1293.0,342.6 L1295.0,342.2 L1297.0,341.9 L1299.0,341.6 L1301.0,341.2 L1303.0,340.9 L1305.0,340.6 L1307.0,340.3 L1309.0,340.0 L1311.0,339.6 L1313.0,339.3 L1315.0,339.0 L1317.0,338.7 L1319.0,338.4 L1321.0,338.1 L1323.0,337.7 L1325.0,337.4 L1327.0,337.1 L1329.0,336.8 L1331.0,336.5 L1333.0,336.2 L1335.0,335.9 L1337.0,335.6 L1339.0,335.3 L1341.0,335.0 L1343.0,334.6 L1345.0,334.3 L1347.0,334.0 L1349.0,333.7 L1351.0,333.4 L1353.0,333.1 L1355.0,332.8 L1357.0,332.5 L1359.0,332.2 L1361.0,331.9 L1363.0,331.6 L1365.0,331.3 L1367.0,331.0 L1369.0,330.7 L1371.0,330.3 L1373.0,330.0 L1375.0,329.7 L1377.0,329.4 L1379.0,329.1 L1381.0,328.8 L1383.0,328.5 L1385.0,328.2 L1387.0,327.9 L1389.0,327.6 L1391.0,327.3 L1393.0,326.9 L1395.0,326.6 L1397.0,326.3 L1399.0,326.0 L1401.0,325.7 L1403.0,325.4 L1405.0,325.0 L1407.0,324.7 L1409.0,324.4 L1411.0,324.1 L1413.0,323.8 L1415.0,323.4 L1417.0,323.1 L1419.0,322.8 L1421.0,322.5 L1423.0,322.1 L1425.0,321.8 L1427.0,321.5 L1429.0,321.1 L1431.0,320.8 L1433.0,320.5 L1435.0,320.1 L1437.0,319.8 L1439.0,319.5 L1441.0,319.1 L1443.0,318.8 L1445.0,318.4 L1447.0,318.1 L1449.0,317.7 L1451.0,317.4 L1453.0,317.0 L1455.0,316.7 L1457.0,316.3 L1459.0,316.0 L1461.0,315.6 L1463.0,315.2 L1465.0,314.9 L1467.0,314.5 L1469.0,314.1 L1471.0,313.8 L1473.0,313.4 L1475.0,313.0 L1477.0,312.6 L1479.0,312.2 L1481.0,311.9 L1483.0,311.5 L1485.0,311.1 L1487.0,310.7 L1489.0,310.3 L1491.0,309.9 L1493.0,309.5 L1495.0,309.1 L1497.0,308.7 L1499.0,308.3 L1501.0,307.9 L1503.0,307.4 L1505.0,307.0 L1507.0,306.6 L1509.0,306.2 L1511.0,305.7 L1513.0,305.3 L1515.0,304.9 L1517.0,304.4 L1519.0,304.0 L1521.0,303.6 L1523.0,303.1 L1525.0,302.7 L1527.0,302.2 L1529.0,301.7 L1531.0,301.3 L1533.0,300.8 L1535.0,300.3 L1537.0,299.9 L1539.0,299.4 L1541.0,298.9 L1543.0,298.4 L1545.0,297.9 L1547.0,297.4 L1548.0,297.2" fill="none" stroke="#ff8080" stroke-opacity="0.38" stroke-width="1"/>
<path d="M35.0,499.9 L37.0,499.9 L39.0,499.9 L41.0,499.8 L43.0,499.8 L45.0,499.8 L47.0,499.7 L49.0,499.7 L51.0,499.6 L53.0,499.6 L55.0,499.6 L57.0,499.5 L59.0,499.5 L61.0,499.4 L63.0,499.4 L65.0,499.3 L67.0,499.3 L69.0,499.2 L71.0,499.1 L73.0,499.1 L75.0,499.0 L77.0,499.0 L79.0,498.9 L81.0,498.8 L83.0,498.8 L85.0,498.7 L87.0,498.6 L89.0,498.6 L91.0,498.5 L93.0,498.4 L95.0,498.3 L97.0,498.3 L99.0,498.2 L101.0,498.1 L103.0,498.0 L105.0,497.9 L107.0,497.8 L109.0,497.8 L111.0,497.7 L113.0,497.6 L115.0,497.5 L117.0,497.4 L119.0,497.3 L121.0,497.2 L123.0,497.1 L125.0,497.0 L127.0,496.9 L129.0,496.8 L131.0,496.7 L133.0,496.6 L135.0,496.5 L137.0,496.4 L139.0,496.3 L141.0,496.2 L143.0,496.1 L145.0,496.0 L147.0,495.9 L149.0,495.8 L151.0,495.7 L153.0,495.6 L155.0,495.4 L157.0,495.3 L159.0,495.2 L161.0,495.1 L163.0,495.0 L165.0,494.9 L167.0,494.7 L169.0,494.6 L171.0,494.5 L173.0,494.4 L175.0,494.3 L177.0,494.1 L179.0,494.0 L181.0,493.9 L183.0,493.8 L185.0,493.6 L187.0,493.5 L189.0,493.4 L191.0,493.2 L193.0,493.1 L195.0,493.0 L197.0,492.9 L199.0,492.7 L201.0,492.6 L203.0,492.5 L205.0,492.3 L207.0,492.2 L209.0,492.1 L211.0,491.9 L213.0,491.8 L215.0,491.6 L217.0,491.5 L219.0,491.4 L221.0,491.2 L223.0,491.1 L225.0,490.9 L227.0,490.8 L229.0,490.7 L231.0,490.5 L233.0,490.4 L235.0,490.2 L237.0,490.1 L239.0,490.0 L241.0,489.8 L243.0,489.7 L245.0,489.5 L247.0,489.4 L249.0,489.2 L251.0,489.1 L253.0,488.9 L255.0,488.8 L257.0,488.6 L259.0,488.5 L261.0,488.4 L263.0,488.2 L265.0,488.1 L267.0,487.9 L269.0,487.8 L271.0,487.6 L273.0,487.5 L275.0,487.3 L277.0,487.2 L279.0,487.0 L281.0,486.9 L283.0,486.7 L285.0,486.6 L287.0,486.4 L289.0,486.3 L291.0,486.1 L293.0,486.0 L295.0,485.8 L297.0,485.7 L299.0,485.5 L301.0,485.4 L303.0,485.2 L305.0,485.1 L307.0,484.9 L309.0,484.8 L311.0,484.6 L313.0,484.5 L315.0,484.3 L317.0,484.2 L319.0,484.0 L321.0,483.9 L323.0,483.7 L325.0,483.6 L327.0,483.4 L329.0,483.3 L331.0,483.1 L333.0,483.0 L335.0,482.9 L337.0,482.7 L339.0,482.6 L341.0,482.4 L343.0,482.3 L345.0,482.1 L347.0,482.0 L349.0,481.8 L351.0,481.7 L353.0,481.5 L355.0,481.4 L357.0,481.2 L359.0,481.1 L361.0,480.9 L363.0,480.8 L365.0,480.6 L367.0,480.5 L369.0,480.3 L371.0,480.2 L373.0,480.0 L375.0,479.9 L377.0,479.7 L379.0,479.6 L381.0,479.4 L383.0,479.3 L385.0,479.1 L387.0,479.0 L389.0,478.8 L391.0,478.6 L393.0,478.5 L395.0,478.3 L397.0,478.2 L399.0,478.0 L401.0,477.8 L403.0,477.7 L405.0,477.5 L407.0,477.3 L409.0,477.2 L411.0,477.0 L413.0,476.8 L415.0,476.7 L417.0,476.5 L419.0,476.3 L421.0,476.2 L423.0,476.0 L425.0,475.8 L427.0,475.6 L429.0,475.4 L431.0,475.3 L433.0,475.1 L435.0,474.9 L437.0,474.7 L439.0,474.5 L441.0,474.3 L443.0,474.1 L445.0,474.0 L447.0,473.8 L449.0,473.6 L451.0,473.4 L453.0,473.2 L455.0,473.0 L457.0,472.8 L459.0,472.6 L461.0,472.4 L463.0,472.1 L465.0,471.9 L467.0,471.7 L469.0,471.5 L471.0,471.3 L473.0,471.1 L475.0,470.8 L477.0,470.6 L479.0,470.4 L481.0,470.2 L483.0,469.9 L485.0,469.7 L487.0,469.5 L489.0,469.2 L491.0,469.0 L493.0,468.8 L495.0,468.5 L497.0,468.3 L499.0,468.0 L501.0,467.8 L503.0,467.5 L505.0,467.2 L507.0,467.0 L509.0,466.7 L511.0,466.5 L513.0,466.2 L515.0,465.9 L517.0,465.7 L519.0,465.4 L521.0,465.1 L523.0,464.9 L525.0,464.6 L527.0,464.3 L529.0,464.1 L531.0,463.8 L533.0,463.5 L535.0,463.3 L537.0,463.0 L539.0,462.7 L541.0,462.5 L543.0,462.2 L545.0,462.0 L547.0,461.7 L549.0,461.5 L551.0,461.3 L553.0,461.0 L555.0,460.8 L557.0,460.6 L559.0,460.3 L561.0,460.1 L563.0,459.9 L565.0,459.7 L567.0,459.5 L569.0,459.3 L571.0,459.1 L573.0,458.9 L575.0,458.7 L577.0,458.6 L579.0,458.4 L581.0,458.2 L583.0,458.1 L585.0,457.9 L587.0,457.8 L589.0,457.6 L591.0,457.5 L593.0,457.4 L595.0,457.3 L597.0,457.1 L599.0,457.0 L601.0,456.9 L603.0,456.8 L605.0,456.7 L607.0,456.7 L609.0,456.6 L611.0,456.5 L613.0,456.4 L615.0,456.4 L617.0,456.3 L619.0,456.3 L621.0,456.2 L623.0,456.2 L625.0,456.2 L627.0,456.1 L629.0,456.1 L631.0,456.1 L633.0,456.1 L635.0,456.1 L637.0,456.1 L639.0,456.1 L641.0,456.1 L643.0,456.1 L645.0,456.2 L647.0,456.2 L649.0,456.2 L651.0,456.3 L653.0,456.3 L655.0,456.4 L657.0,456.4 L659.0,456.5 L661.0,456.6 L663.0,456.6 L665.0,456.7 L667.0,456.8 L669.0,456.8 L671.0,456.9 L673.0,457.0 L675.0,457.1 L677.0,457.2 L679.0,457.2 L681.0,457.3 L683.0,457.4 L685.0,457.5 L687.0,457.5 L689.0,457.6 L691.0,457.7 L693.0,457.7 L695.0,457.8 L697.0,457.8 L699.0,457.9 L701.0,457.9 L703.0,458.0 L705.0,458.0 L707.0,458.0 L709.0,458.1 L711.0,458.1 L713.0,458.1 L715.0,458.1 L717.0,458.1 L719.0,458.0 L721.0,458.0 L723.0,458.0 L725.0,457.9 L727.0,457.9 L729.0,457.8 L731.0,457.7 L733.0,457.6 L735.0,457.5 L737.0,457.4 L739.0,457.2 L741.0,457.1 L743.0,456.9 L745.0,456.7 L747.0,456.5 L749.0,456.3 L751.0,456.1 L753.0,455.9 L755.0,455.6 L757.0,455.4 L759.0,455.1 L761.0,454.8 L763.0,454.5 L765.0,454.1 L767.0,453.8 L769.0,453.4 L771.0,453.0 L773.0,452.6 L775.0,452.2 L777.0,451.8 L779.0,451.4 L781.0,450.9 L783.0,450.4 L785.0,449.9 L787.0,449.4 L789.0,448.9 L791.0,448.4 L793.0,447.9 L795.0,447.4 L797.0,446.8 L799.0,446.3 L801.0,445.8 L803.0,445.2 L805.0,444.7 L807.0,444.2 L809.0,443.6 L811.0,443.1 L813.0,442.6 L815.0,442.1 L817.0,441.6 L819.0,441.1 L821.0,440.7 L823.0,440.2 L825.0,439.8 L827.0,439.4 L829.0,439.0 L831.0,438.6 L833.0,438.2 L835.0,437.9 L837.0,437.6 L839.0,437.2 L841.0,436.9 L843.0,436.7 L845.0,436.4 L847.0,436.2 L849.0,435.9 L851.0,435.7 L853.0,435.5 L855.0,435.3 L857.0,435.1 L859.0,434.9 L861.0,434.8 L863.0,434.6 L865.0,434.5 L867.0,434.4 L869.0,434.3 L871.0,434.2 L873.0,434.1 L875.0,434.0 L877.0,433.9 L879.0,433.8 L881.0,433.7 L883.0,433.7 L885.0,433.6 L887.0,433.6 L889.0,433.5 L891.0,433.5 L893.0,433.5 L895.0,433.4 L897.0,433.4 L899.0,433.4 L901.0,433.4 L903.0,433.3 L905.0,433.3 L907.0,433.3 L909.0,433.3 L911.0,433.3 L913.0,433.3 L915.0,433.2 L917.0,433.2 L919.0,433.2 L921.0,433.2 L923.0,433.2 L925.0,433.1 L927.0,433.1 L929.0,433.1 L931.0,433.1 L933.0,433.0 L935.0,433.0 L937.0,432.9 L939.0,432.9 L941.0,432.8 L943.0,432.7 L945.0,432.6 L947.0,432.6 L949.0,432.5 L951.0,432.4 L953.0,432.3 L955.0,432.1 L957.0,432.0 L959.0,431.9 L961.0,431.7 L963.0,431.6 L965.0,431.4 L967.0,431.3 L969.0,431.1 L971.0,430.9 L973.0,430.7 L975.0,430.5 L977.0,430.3 L979.0,430.1 L981.0,429.9 L983.0,429.7 L985.0,429.5 L987.0,429.3 L989.0,429.0 L991.0,428.8 L993.0,428.6 L995.0,428.3 L997.0,428.1 L999.0,427.8 L1001.0,427.6 L1003.0,427.3 L1005.0,427.0 L1007.0,426.8 L1009.0,426.5 L1011.0,426.2 L1013.0,425.9 L1015.0,425.7 L1017.0,425.4 L1019.0,425.1 L1021.0,424.8 L1023.0,424.5 L1025.0,424.2 L1027.0,423.9 L1029.0,423.7 L1031.0,423.4 L1033.0,423.1 L1035.0,422.8 L1037.0,422.5 L1039.0,422.2 L1041.0,421.9 L1043.0,421.6 L1045.0,421.3 L1047.0,421.0 L1049.0,420.7 L1051.0,420.4 L1053.0,420.1 L1055.0,419.7 L1057.0,419.4 L1059.0,419.1 L1061.0,418.8 L1063.0,418.5 L1065.0,418.1 L1067.0,417.8 L1069.0,417.5 L1071.0,417.1 L1073.0,416.8 L1075.0,416.4 L1077.0,416.1 L1079.0,415.7 L1081.0,415.3 L1083.0,415.0 L1085.0,414.6 L1087.0,414.2 L1089.0,413.8 L1091.0,413.4 L1093.0,413.0 L1095.0,412.6 L1097.0,412.2 L1099.0,411.8 L1101.0,411.3 L1103.0,410.9 L1105.0,410.5 L1107.0,410.1 L1109.0,409.6 L1111.0,409.2 L1113.0,408.8 L1115.0,408.3 L1117.0,407.9 L1119.0,407.5 L1121.0,407.0 L1123.0,406.6 L1125.0,406.2 L1127.0,405.7 L1129.0,405.3 L1131.0,404.8 L1133.0,404.4 L1135.0,404.0 L1137.0,403.5 L1139.0,403.1 L1141.0,402.7 L1143.0,402.2 L1145.0,401.8 L1147.0,401.4 L1149.0,400.9 L1151.0,400.5 L1153.0,400.1 L1155.0,399.7 L1157.0,399.2 L1159.0,398.8 L1161.0,398.4 L1163.0,398.0 L1165.0,397.6 L1167.0,397.2 L1169.0,396.8 L1171.0,396.4 L1173.0,396.0 L1175.0,395.6 L1177.0,395.2 L1179.0,394.8 L1181.0,394.4 L1183.0,394.0 L1185.0,393.6 L1187.0,393.2 L1189.0,392.9 L1191.0,392.5 L1193.0,392.1 L1195.0,391.8 L1197.0,391.4 L1199.0,391.0 L1201.0,390.7 L1203.0,390.3 L1205.0,390.0 L1207.0,389.6 L1209.0,389.3 L1211.0,388.9 L1213.0,388.6 L1215.0,388.2 L1217.0,387.9 L1219.0,387.6 L1221.0,387.2 L1223.0,386.9 L1225.0,386.6 L1227.0,386.2 L1229.0,385.9 L1231.0,385.6 L1233.0,385.3 L1235.0,385.0 L1237.0,384.6 L1239.0,384.3 L1241.0,384.0 L1243.0,383.7 L1245.0,383.4 L1247.0,383.1 L1249.0,382.8 L1251.0,382.5 L1253.0,382.2 L1255.0,381.9 L1257.0,381.6 L1259.0,381.3 L1261.0,381.0 L1263.0,380.7 L1265.0,380.4 L1267.0,380.1 L1269.0,379.9 L1271.0,379.6 L1273.0,379.3 L1275.0,379.0 L1277.0,378.7 L1279.0,378.5 L1281.0,378.2 L1283.0,377.9 L1285.0,377.6 L1287.0,377.4 L1289.0,377.1 L1291.0,376.8 L1293.0,376.5 L1295.0,376.3 L1297.0,376.0 L1299.0,375.7 L1301.0,375.5 L1303.0,375.2 L1305.0,374.9 L1307.0,374.7 L1309.0,374.4 L1311.0,374.2 L1313.0,373.9 L1315.0,373.6 L1317.0,373.4 L1319.0,373.1 L1321.0,372.9 L1323.0,372.6 L1325.0,372.4 L1327.0,372.1 L1329.0,371.8 L1331.0,371.6 L1333.0,371.3 L1335.0,371.1 L1337.0,370.8 L1339.0,370.6 L1341.0,370.3 L1343.0,370.1 L1345.0,369.8 L1347.0,369.6 L1349.0,369.3 L1351.0,369.1 L1353.0,368.8 L1355.0,368.6 L1357.0,368.3 L1359.0,368.1 L1361.0,367.8 L1363.0,367.6 L1365.0,367.3 L1367.0,367.1 L1369.0,366.8 L1371.0,366.6 L1373.0,366.3 L1375.0,366.1 L1377.0,365.8 L1379.0,365.5 L1381.0,365.3 L1383.0,365.0 L1385.0,364.8 L1387.0,364.5 L1389.0,364.3 L1391.0,364.0 L1393.0,363.8 L1395.0,363.5 L1397.0,363.3 L1399.0,363.0 L1401.0,362.7 L1403.0,362.5 L1405.0,362.2 L1407.0,362.0 L1409.0,361.7 L1411.0,361.4 L1413.0,361.2 L1415.0,360.9 L1417.0,360.6 L1419.0,360.4 L1421.0,360.1 L1423.0,359.8 L1425.0,359.6 L1427.0,359.3 L1429.0,359.0 L1431.0,358.8 L1433.0,358.5 L1435.0,358.2 L1437.0,357.9 L1439.0,357.6 L1441.0,357.4 L1443.0,357.1 L1445.0,356.8 L1447.0,356.5 L1449.0,356.2 L1451.0,355.9 L1453.0,355.7 L1455.0,355.4 L1457.0,355.1 L1459.0,354.8 L1461.0,354.5 L1463.0,354.2 L1465.0,353.9 L1467.0,353.6 L1469.0,353.3 L1471.0,353.0 L1473.0,352.7 L1475.0,352.4 L1477.0,352.1 L1479.0,351.7 L1481.0,351.4 L1483.0,351.1 L1485.0,350.8 L1487.0,350.5 L1489.0,350.1 L1491.0,349.8 L1493.0,349.5 L1495.0,349.2 L1497.0,348.8 L1499.0,348.5 L1501.0,348.2 L1503.0,347.8 L1505.0,347.5 L1507.0,347.1 L1509.0,346.8 L1511.0,346.4 L1513.0,346.1 L1515.0,345.7 L1517.0,345.4 L1519.0,345.0 L1521.0,344.6 L1523.0,344.3 L1525.0,343.9 L1527.0,343.5 L1529.0,343.2 L1531.0,342.8 L1533.0,342.4 L1535.0,342.0 L1537.0,341.6 L1539.0,341.2 L1541.0,340.8 L1543.0,340.4 L1545.0,340.0 L1547.0,339.6 L1548.0,339.4" fill="none" stroke="#70dd70" stroke-opacity="0.45" stroke-width="1"/>
<path d="M35.0,503.2 L37.0,503.2 L39.0,503.2 L41.0,503.1 L43.0,503.1 L45.0,503.1 L47.0,503.0 L49.0,503.0 L51.0,503.0 L53.0,502.9 L55.0,502.9 L57.0,502.8 L59.0,502.8 L61.0,502.8 L63.0,502.7 L65.0,502.7 L67.0,502.6 L69.0,502.6 L71.0,502.5 L73.0,502.5 L75.0,502.4 L77.0,502.4 L79.0,502.3 L81.0,502.2 L83.0,502.2 L85.0,502.1 L87.0,502.1 L89.0,502.0 L91.0,501.9 L93.0,501.9 L95.0,501.8 L97.0,501.7 L99.0,501.7 L101.0,501.6 L103.0,501.5 L105.0,501.4 L107.0,501.4 L109.0,501.3 L111.0,501.2 L113.0,501.1 L115.0,501.0 L117.0,501.0 L119.0,500.9 L121.0,500.8 L123.0,500.7 L125.0,500.6 L127.0,500.5 L129.0,500.5 L131.0,500.4 L133.0,500.3 L135.0,500.2 L137.0,500.1 L139.0,500.0 L141.0,499.9 L143.0,499.8 L145.0,499.7 L147.0,499.6 L149.0,499.5 L151.0,499.4 L153.0,499.3 L155.0,499.2 L157.0,499.1 L159.0,499.0 L161.0,498.9 L163.0,498.8 L165.0,498.7 L167.0,498.6 L169.0,498.5 L171.0,498.4 L173.0,498.3 L175.0,498.2 L177.0,498.1 L179.0,498.0 L181.0,497.8 L183.0,497.7 L185.0,497.6 L187.0,497.5 L189.0,497.4 L191.0,497.3 L193.0,497.2 L195.0,497.0 L197.0,496.9 L199.0,496.8 L201.0,496.7 L203.0,496.6 L205.0,496.5 L207.0,496.3 L209.0,496.2 L211.0,496.1 L213.0,496.0 L215.0,495.8 L217.0,495.7 L219.0,495.6 L221.0,495.5 L223.0,495.4 L225.0,495.2 L227.0,495.1 L229.0,495.0 L231.0,494.9 L233.0,494.7 L235.0,494.6 L237.0,494.5 L239.0,494.3 L241.0,494.2 L243.0,494.1 L245.0,494.0 L247.0,493.8 L249.0,493.7 L251.0,493.6 L253.0,493.4 L255.0,493.3 L257.0,493.2 L259.0,493.1 L261.0,492.9 L263.0,492.8 L265.0,492.7 L267.0,492.5 L269.0,492.4 L271.0,492.3 L273.0,492.1 L275.0,492.0 L277.0,491.9 L279.0,491.7 L281.0,491.6 L283.0,491.5 L285.0,491.3 L287.0,491.2 L289.0,491.1 L291.0,490.9 L293.0,490.8 L295.0,490.7 L297.0,490.5 L299.0,490.4 L301.0,490.3 L303.0,490.1 L305.0,490.0 L307.0,489.9 L309.0,489.8 L311.0,489.6 L313.0,489.5 L315.0,489.4 L317.0,489.2 L319.0,489.1 L321.0,489.0 L323.0,488.8 L325.0,488.7 L327.0,488.6 L329.0,488.4 L331.0,488.3 L333.0,488.2 L335.0,488.0 L337.0,487.9 L339.0,487.8 L341.0,487.6 L343.0,487.5 L345.0,487.4 L347.0,487.3 L349.0,487.1 L351.0,487.0 L353.0,486.9 L355.0,486.7 L357.0,486.6 L359.0,486.5 L361.0,486.3 L363.0,486.2 L365.0,486.1 L367.0,485.9 L369.0,485.8 L371.0,485.7 L373.0,485.5 L375.0,485.4 L377.0,485.3 L379.0,485.1 L381.0,485.0 L383.0,484.8 L385.0,484.7 L387.0,484.6 L389.0,484.4 L391.0,484.3 L393.0,484.1 L395.0,484.0 L397.0,483.9 L399.0,483.7 L401.0,483.6 L403.0,483.4 L405.0,483.3 L407.0,483.1 L409.0,483.0 L411.0,482.8 L413.0,482.7 L415.0,482.5 L417.0,482.4 L419.0,482.2 L421.0,482.1 L423.0,481.9 L425.0,481.8 L427.0,481.6 L429.0,481.4 L431.0,481.3 L433.0,481.1 L435.0,481.0 L437.0,480.8 L439.0,480.6 L441.0,480.5 L443.0,480.3 L445.0,480.1 L447.0,480.0 L449.0,479.8 L451.0,479.6 L453.0,479.4 L455.0,479.2 L457.0,479.1 L459.0,478.9 L461.0,478.7 L463.0,478.5 L465.0,478.3 L467.0,478.1 L469.0,477.9 L471.0,477.8 L473.0,477.6 L475.0,477.4 L477.0,477.2 L479.0,477.0 L481.0,476.8 L483.0,476.6 L485.0,476.3 L487.0,476.1 L489.0,475.9 L491.0,475.7 L493.0,475.5 L495.0,475.3 L497.0,475.1 L499.0,474.8 L501.0,474.6 L503.0,474.4 L505.0,474.2 L507.0,473.9 L509.0,473.7 L511.0,473.5 L513.0,473.2 L515.0,473.0 L517.0,472.8 L519.0,472.5 L521.0,472.3 L523.0,472.0 L525.0,471.8 L527.0,471.6 L529.0,471.3 L531.0,471.1 L533.0,470.9 L535.0,470.6 L537.0,470.4 L539.0,470.2 L541.0,469.9 L543.0,469.7 L545.0,469.5 L547.0,469.3 L549.0,469.1 L551.0,468.8 L553.0,468.6 L555.0,468.4 L557.0,468.2 L559.0,468.0 L561.0,467.8 L563.0,467.6 L565.0,467.4 L567.0,467.3 L569.0,467.1 L571.0,466.9 L573.0,466.7 L575.0,466.6 L577.0,466.4 L579.0,466.3 L581.0,466.1 L583.0,466.0 L585.0,465.9 L587.0,465.7 L589.0,465.6 L591.0,465.5 L593.0,465.4 L595.0,465.3 L597.0,465.2 L599.0,465.1 L601.0,465.0 L603.0,464.9 L605.0,464.8 L607.0,464.8 L609.0,464.7 L611.0,464.6 L613.0,464.6 L615.0,464.5 L617.0,464.5 L619.0,464.4 L621.0,464.4 L623.0,464.3 L625.0,464.3 L627.0,464.3 L629.0,464.3 L631.0,464.3 L633.0,464.3 L635.0,464.3 L637.0,464.3 L639.0,464.3 L641.0,464.3 L643.0,464.3 L645.0,464.3 L647.0,464.3 L649.0,464.4 L651.0,464.4 L653.0,464.5 L655.0,464.5 L657.0,464.6 L659.0,464.6 L661.0,464.7 L663.0,464.7 L665.0,464.8 L667.0,464.9 L669.0,464.9 L671.0,465.0 L673.0,465.1 L675.0,465.1 L677.0,465.2 L679.0,465.3 L681.0,465.3 L683.0,465.4 L685.0,465.5 L687.0,465.5 L689.0,465.6 L691.0,465.7 L693.0,465.7 L695.0,465.8 L697.0,465.8 L699.0,465.9 L701.0,465.9 L703.0,465.9 L705.0,466.0 L707.0,466.0 L709.0,466.0 L711.0,466.0 L713.0,466.0 L715.0,466.0 L717.0,466.0 L719.0,466.0 L721.0,466.0 L723.0,465.9 L725.0,465.9 L727.0,465.8 L729.0,465.7 L731.0,465.7 L733.0,465.6 L735.0,465.5 L737.0,465.4 L739.0,465.2 L741.0,465.1 L743.0,465.0 L745.0,464.8 L747.0,464.6 L749.0,464.5 L751.0,464.3 L753.0,464.0 L755.0,463.8 L757.0,463.6 L759.0,463.3 L761.0,463.1 L763.0,462.8 L765.0,462.5 L767.0,462.2 L769.0,461.9 L771.0,461.5 L773.0,461.2 L775.0,460.8 L777.0,460.4 L779.0,460.0 L781.0,459.6 L783.0,459.2 L785.0,458.8 L787.0,458.3 L789.0,457.9 L791.0,457.4 L793.0,457.0 L795.0,456.5 L797.0,456.0 L799.0,455.5 L801.0,455.1 L803.0,454.6 L805.0,454.1 L807.0,453.6 L809.0,453.2 L811.0,452.7 L813.0,452.3 L815.0,451.8 L817.0,451.4 L819.0,451.0 L821.0,450.5 L823.0,450.1 L825.0,449.8 L827.0,449.4 L829.0,449.0 L831.0,448.7 L833.0,448.4 L835.0,448.1 L837.0,447.8 L839.0,447.5 L841.0,447.2 L843.0,447.0 L845.0,446.7 L847.0,446.5 L849.0,446.3 L851.0,446.1 L853.0,445.9 L855.0,445.8 L857.0,445.6 L859.0,445.5 L861.0,445.3 L863.0,445.2 L865.0,445.1 L867.0,444.9 L869.0,444.8 L871.0,444.7 L873.0,444.7 L875.0,444.6 L877.0,444.5 L879.0,444.4 L881.0,444.4 L883.0,444.3 L885.0,444.3 L887.0,444.2 L889.0,444.2 L891.0,444.2 L893.0,444.1 L895.0,444.1 L897.0,444.1 L899.0,444.1 L901.0,444.0 L903.0,444.0 L905.0,444.0 L907.0,444.0 L909.0,444.0 L911.0,444.0 L913.0,444.0 L915.0,443.9 L917.0,443.9 L919.0,443.9 L921.0,443.9 L923.0,443.9 L925.0,443.9 L927.0,443.8 L929.0,443.8 L931.0,443.8 L933.0,443.7 L935.0,443.7 L937.0,443.6 L939.0,443.6 L941.0,443.5 L943.0,443.5 L945.0,443.4 L947.0,443.3 L949.0,443.3 L951.0,443.2 L953.0,443.1 L955.0,443.0 L957.0,442.8 L959.0,442.7 L961.0,442.6 L963.0,442.5 L965.0,442.3 L967.0,442.2 L969.0,442.0 L971.0,441.9 L973.0,441.7 L975.0,441.5 L977.0,441.4 L979.0,441.2 L981.0,441.0 L983.0,440.8 L985.0,440.6 L987.0,440.4 L989.0,440.2 L991.0,440.0 L993.0,439.8 L995.0,439.6 L997.0,439.3 L999.0,439.1 L1001.0,438.9 L1003.0,438.7 L1005.0,438.4 L1007.0,438.2 L1009.0,437.9 L1011.0,437.7 L1013.0,437.5 L1015.0,437.2 L1017.0,437.0 L1019.0,436.7 L1021.0,436.4 L1023.0,436.2 L1025.0,435.9 L1027.0,435.7 L1029.0,435.4 L1031.0,435.1 L1033.0,434.9 L1035.0,434.6 L1037.0,434.4 L1039.0,434.1 L1041.0,433.8 L1043.0,433.6 L1045.0,433.3 L1047.0,433.0 L1049.0,432.8 L1051.0,432.5 L1053.0,432.2 L1055.0,431.9 L1057.0,431.7 L1059.0,431.4 L1061.0,431.1 L1063.0,430.8 L1065.0,430.5 L1067.0,430.2 L1069.0,429.9 L1071.0,429.6 L1073.0,429.3 L1075.0,429.0 L1077.0,428.7 L1079.0,428.4 L1081.0,428.0 L1083.0,427.7 L1085.0,427.3 L1087.0,427.0 L1089.0,426.7 L1091.0,426.3 L1093.0,425.9 L1095.0,425.6 L1097.0,425.2 L1099.0,424.8 L1101.0,424.5 L1103.0,424.1 L1105.0,423.7 L1107.0,423.3 L1109.0,422.9 L1111.0,422.6 L1113.0,422.2 L1115.0,421.8 L1117.0,421.4 L1119.0,421.0 L1121.0,420.6 L1123.0,420.2 L1125.0,419.9 L1127.0,419.5 L1129.0,419.1 L1131.0,418.7 L1133.0,418.3 L1135.0,417.9 L1137.0,417.5 L1139.0,417.1 L1141.0,416.8 L1143.0,416.4 L1145.0,416.0 L1147.0,415.6 L1149.0,415.2 L1151.0,414.8 L1153.0,414.5 L1155.0,414.1 L1157.0,413.7 L1159.0,413.3 L1161.0,413.0 L1163.0,412.6 L1165.0,412.2 L1167.0,411.9 L1169.0,411.5 L1171.0,411.1 L1173.0,410.8 L1175.0,410.4 L1177.0,410.1 L1179.0,409.7 L1181.0,409.4 L1183.0,409.1 L1185.0,408.7 L1187.0,408.4 L1189.0,408.0 L1191.0,407.7 L1193.0,407.4 L1195.0,407.1 L1197.0,406.7 L1199.0,406.4 L1201.0,406.1 L1203.0,405.8 L1205.0,405.5 L1207.0,405.2 L1209.0,404.8 L1211.0,404.5 L1213.0,404.2 L1215.0,403.9 L1217.0,403.6 L1219.0,403.3 L1221.0,403.0 L1223.0,402.7 L1225.0,402.4 L1227.0,402.2 L1229.0,401.9 L1231.0,401.6 L1233.0,401.3 L1235.0,401.0 L1237.0,400.7 L1239.0,400.5 L1241.0,400.2 L1243.0,399.9 L1245.0,399.6 L1247.0,399.4 L1249.0,399.1 L1251.0,398.8 L1253.0,398.6 L1255.0,398.3 L1257.0,398.0 L1259.0,397.8 L1261.0,397.5 L1263.0,397.3 L1265.0,397.0 L1267.0,396.7 L1269.0,396.5 L1271.0,396.2 L1273.0,396.0 L1275.0,395.7 L1277.0,395.5 L1279.0,395.2 L1281.0,395.0 L1283.0,394.7 L1285.0,394.5 L1287.0,394.3 L1289.0,394.0 L1291.0,393.8 L1293.0,393.5 L1295.0,393.3 L1297.0,393.1 L1299.0,392.8 L1301.0,392.6 L1303.0,392.4 L1305.0,392.1 L1307.0,391.9 L1309.0,391.7 L1311.0,391.4 L1313.0,391.2 L1315.0,391.0 L1317.0,390.7 L1319.0,390.5 L1321.0,390.3 L1323.0,390.0 L1325.0,389.8 L1327.0,389.6 L1329.0,389.4 L1331.0,389.1 L1333.0,388.9 L1335.0,388.7 L1337.0,388.5 L1339.0,388.2 L1341.0,388.0 L1343.0,387.8 L1345.0,387.6 L1347.0,387.3 L1349.0,387.1 L1351.0,386.9 L1353.0,386.7 L1355.0,386.4 L1357.0,386.2 L1359.0,386.0 L1361.0,385.8 L1363.0,385.6 L1365.0,385.3 L1367.0,385.1 L1369.0,384.9 L1371.0,384.7 L1373.0,384.4 L1375.0,384.2 L1377.0,384.0 L1379.0,383.8 L1381.0,383.5 L1383.0,383.3 L1385.0,383.1 L1387.0,382.9 L1389.0,382.6 L1391.0,382.4 L1393.0,382.2 L1395.0,382.0 L1397.0,381.7 L1399.0,381.5 L1401.0,381.3 L1403.0,381.0 L1405.0,380.8 L1407.0,380.6 L1409.0,380.3 L1411.0,380.1 L1413.0,379.9 L1415.0,379.6 L1417.0,379.4 L1419.0,379.2 L1421.0,378.9 L1423.0,378.7 L1425.0,378.4 L1427.0,378.2 L1429.0,378.0 L1431.0,377.7 L1433.0,377.5 L1435.0,377.2 L1437.0,377.0 L1439.0,376.7 L1441.0,376.5 L1443.0,376.2 L1445.0,376.0 L1447.0,375.7 L1449.0,375.5 L1451.0,375.2 L1453.0,375.0 L1455.0,374.7 L1457.0,374.5 L1459.0,374.2 L1461.0,373.9 L1463.0,373.7 L1465.0,373.4 L1467.0,373.1 L1469.0,372.9 L1471.0,372.6 L1473.0,372.3 L1475.0,372.0 L1477.0,371.8 L1479.0,371.5 L1481.0,371.2 L1483.0,370.9 L1485.0,370.6 L1487.0,370.4 L1489.0,370.1 L1491.0,369.8 L1493.0,369.5 L1495.0,369.2 L1497.0,368.9 L1499.0,368.6 L1501.0,368.3 L1503.0,368.0 L1505.0,367.7 L1507.0,367.4 L1509.0,367.1 L1511.0,366.8 L1513.0,366.5 L1515.0,366.1 L1517.0,365.8 L1519.0,365.5 L1521.0,365.2 L1523.0,364.8 L1525.0,364.5 L1527.0,364.2 L1529.0,363.9 L1531.0,363.5 L1533.0,363.2 L1535.0,362.8 L1537.0,362.5 L1539.0,362.1 L1541.0,361.8 L1543.0,361.4 L1545.0,361.1 L1547.0,360.7 L1548.0,360.6" fill="none" stroke="#50d850" stroke-opacity="0.55" stroke-width="1"/>
<path d="M35.0,506.5 L37.0,506.5 L39.0,506.5 L41.0,506.4 L43.0,506.4 L45.0,506.4 L47.0,506.3 L49.0,506.3 L51.0,506.3 L53.0,506.2 L55.0,506.2 L57.0,506.2 L59.0,506.1 L61.0,506.1 L63.0,506.1 L65.0,506.0 L67.0,506.0 L69.0,505.9 L71.0,505.9 L73.0,505.8 L75.0,505.8 L77.0,505.7 L79.0,505.7 L81.0,505.6 L83.0,505.6 L85.0,505.5 L87.0,505.5 L89.0,505.4 L91.0,505.4 L93.0,505.3 L95.0,505.3 L97.0,505.2 L99.0,505.1 L101.0,505.1 L103.0,505.0 L105.0,504.9 L107.0,504.9 L109.0,504.8 L111.0,504.7 L113.0,504.7 L115.0,504.6 L117.0,504.5 L119.0,504.5 L121.0,504.4 L123.0,504.3 L125.0,504.2 L127.0,504.2 L129.0,504.1 L131.0,504.0 L133.0,503.9 L135.0,503.9 L137.0,503.8 L139.0,503.7 L141.0,503.6 L143.0,503.5 L145.0,503.4 L147.0,503.4 L149.0,503.3 L151.0,503.2 L153.0,503.1 L155.0,503.0 L157.0,502.9 L159.0,502.8 L161.0,502.7 L163.0,502.7 L165.0,502.6 L167.0,502.5 L169.0,502.4 L171.0,502.3 L173.0,502.2 L175.0,502.1 L177.0,502.0 L179.0,501.9 L181.0,501.8 L183.0,501.7 L185.0,501.6 L187.0,501.5 L189.0,501.4 L191.0,501.3 L193.0,501.2 L195.0,501.1 L197.0,501.0 L199.0,500.9 L201.0,500.8 L203.0,500.7 L205.0,500.6 L207.0,500.5 L209.0,500.4 L211.0,500.3 L213.0,500.2 L215.0,500.1 L217.0,499.9 L219.0,499.8 L221.0,499.7 L223.0,499.6 L225.0,499.5 L227.0,499.4 L229.0,499.3 L231.0,499.2 L233.0,499.1 L235.0,499.0 L237.0,498.9 L239.0,498.7 L241.0,498.6 L243.0,498.5 L245.0,498.4 L247.0,498.3 L249.0,498.2 L251.0,498.1 L253.0,498.0 L255.0,497.8 L257.0,497.7 L259.0,497.6 L261.0,497.5 L263.0,497.4 L265.0,497.3 L267.0,497.2 L269.0,497.0 L271.0,496.9 L273.0,496.8 L275.0,496.7 L277.0,496.6 L279.0,496.5 L281.0,496.3 L283.0,496.2 L285.0,496.1 L287.0,496.0 L289.0,495.9 L291.0,495.8 L293.0,495.6 L295.0,495.5 L297.0,495.4 L299.0,495.3 L301.0,495.2 L303.0,495.1 L305.0,495.0 L307.0,494.8 L309.0,494.7 L311.0,494.6 L313.0,494.5 L315.0,494.4 L317.0,494.3 L319.0,494.1 L321.0,494.0 L323.0,493.9 L325.0,493.8 L327.0,493.7 L329.0,493.6 L331.0,493.4 L333.0,493.3 L335.0,493.2 L337.0,493.1 L339.0,493.0 L341.0,492.9 L343.0,492.8 L345.0,492.6 L347.0,492.5 L349.0,492.4 L351.0,492.3 L353.0,492.2 L355.0,492.1 L357.0,492.0 L359.0,491.8 L361.0,491.7 L363.0,491.6 L365.0,491.5 L367.0,491.4 L369.0,491.3 L371.0,491.1 L373.0,491.0 L375.0,490.9 L377.0,490.8 L379.0,490.7 L381.0,490.5 L383.0,490.4 L385.0,490.3 L387.0,490.2 L389.0,490.1 L391.0,489.9 L393.0,489.8 L395.0,489.7 L397.0,489.6 L399.0,489.4 L401.0,489.3 L403.0,489.2 L405.0,489.1 L407.0,488.9 L409.0,488.8 L411.0,488.7 L413.0,488.5 L415.0,488.4 L417.0,488.3 L419.0,488.1 L421.0,488.0 L423.0,487.9 L425.0,487.7 L427.0,487.6 L429.0,487.5 L431.0,487.3 L433.0,487.2 L435.0,487.0 L437.0,486.9 L439.0,486.7 L441.0,486.6 L443.0,486.4 L445.0,486.3 L447.0,486.1 L449.0,486.0 L451.0,485.8 L453.0,485.7 L455.0,485.5 L457.0,485.4 L459.0,485.2 L461.0,485.1 L463.0,484.9 L465.0,484.7 L467.0,484.6 L469.0,484.4 L471.0,484.2 L473.0,484.1 L475.0,483.9 L477.0,483.7 L479.0,483.5 L481.0,483.4 L483.0,483.2 L485.0,483.0 L487.0,482.8 L489.0,482.6 L491.0,482.4 L493.0,482.3 L495.0,482.1 L497.0,481.9 L499.0,481.7 L501.0,481.5 L503.0,481.3 L505.0,481.1 L507.0,480.9 L509.0,480.7 L511.0,480.5 L513.0,480.3 L515.0,480.1 L517.0,479.8 L519.0,479.6 L521.0,479.4 L523.0,479.2 L525.0,479.0 L527.0,478.8 L529.0,478.6 L531.0,478.4 L533.0,478.2 L535.0,478.0 L537.0,477.8 L539.0,477.6 L541.0,477.4 L543.0,477.2 L545.0,477.0 L547.0,476.8 L549.0,476.6 L551.0,476.4 L553.0,476.2 L555.0,476.1 L557.0,475.9 L559.0,475.7 L561.0,475.5 L563.0,475.4 L565.0,475.2 L567.0,475.0 L569.0,474.9 L571.0,474.7 L573.0,474.6 L575.0,474.5 L577.0,474.3 L579.0,474.2 L581.0,474.1 L583.0,473.9 L585.0,473.8 L587.0,473.7 L589.0,473.6 L591.0,473.5 L593.0,473.4 L595.0,473.3 L597.0,473.2 L599.0,473.1 L601.0,473.1 L603.0,473.0 L605.0,472.9 L607.0,472.9 L609.0,472.8 L611.0,472.7 L613.0,472.7 L615.0,472.6 L617.0,472.6 L619.0,472.6 L621.0,472.5 L623.0,472.5 L625.0,472.5 L627.0,472.4 L629.0,472.4 L631.0,472.4 L633.0,472.4 L635.0,472.4 L637.0,472.4 L639.0,472.4 L641.0,472.4 L643.0,472.4 L645.0,472.5 L647.0,472.5 L649.0,472.5 L651.0,472.5 L653.0,472.6 L655.0,472.6 L657.0,472.7 L659.0,472.7 L661.0,472.8 L663.0,472.8 L665.0,472.9 L667.0,472.9 L669.0,473.0 L671.0,473.1 L673.0,473.1 L675.0,473.2 L677.0,473.2 L679.0,473.3 L681.0,473.4 L683.0,473.4 L685.0,473.5 L687.0,473.5 L689.0,473.6 L691.0,473.6 L693.0,473.7 L695.0,473.7 L697.0,473.8 L699.0,473.8 L701.0,473.8 L703.0,473.9 L705.0,473.9 L707.0,473.9 L709.0,473.9 L711.0,473.9 L713.0,474.0 L715.0,473.9 L717.0,473.9 L719.0,473.9 L721.0,473.9 L723.0,473.9 L725.0,473.8 L727.0,473.8 L729.0,473.7 L731.0,473.6 L733.0,473.6 L735.0,473.5 L737.0,473.4 L739.0,473.3 L741.0,473.2 L743.0,473.0 L745.0,472.9 L747.0,472.7 L749.0,472.6 L751.0,472.4 L753.0,472.2 L755.0,472.0 L757.0,471.8 L759.0,471.6 L761.0,471.4 L763.0,471.1 L765.0,470.9 L767.0,470.6 L769.0,470.3 L771.0,470.0 L773.0,469.7 L775.0,469.4 L777.0,469.1 L779.0,468.7 L781.0,468.4 L783.0,468.0 L785.0,467.6 L787.0,467.2 L789.0,466.8 L791.0,466.4 L793.0,466.0 L795.0,465.6 L797.0,465.2 L799.0,464.8 L801.0,464.4 L803.0,464.0 L805.0,463.5 L807.0,463.1 L809.0,462.7 L811.0,462.3 L813.0,461.9 L815.0,461.5 L817.0,461.1 L819.0,460.8 L821.0,460.4 L823.0,460.1 L825.0,459.7 L827.0,459.4 L829.0,459.1 L831.0,458.8 L833.0,458.5 L835.0,458.2 L837.0,458.0 L839.0,457.7 L841.0,457.5 L843.0,457.3 L845.0,457.1 L847.0,456.9 L849.0,456.7 L851.0,456.5 L853.0,456.4 L855.0,456.2 L857.0,456.1 L859.0,456.0 L861.0,455.8 L863.0,455.7 L865.0,455.6 L867.0,455.5 L869.0,455.4 L871.0,455.3 L873.0,455.3 L875.0,455.2 L877.0,455.1 L879.0,455.1 L881.0,455.0 L883.0,455.0 L885.0,454.9 L887.0,454.9 L889.0,454.9 L891.0,454.8 L893.0,454.8 L895.0,454.8 L897.0,454.8 L899.0,454.7 L901.0,454.7 L903.0,454.7 L905.0,454.7 L907.0,454.7 L909.0,454.7 L911.0,454.7 L913.0,454.7 L915.0,454.6 L917.0,454.6 L919.0,454.6 L921.0,454.6 L923.0,454.6 L925.0,454.6 L927.0,454.5 L929.0,454.5 L931.0,454.5 L933.0,454.5 L935.0,454.4 L937.0,454.4 L939.0,454.3 L941.0,454.3 L943.0,454.2 L945.0,454.2 L947.0,454.1 L949.0,454.0 L951.0,454.0 L953.0,453.9 L955.0,453.8 L957.0,453.7 L959.0,453.6 L961.0,453.5 L963.0,453.3 L965.0,453.2 L967.0,453.1 L969.0,453.0 L971.0,452.8 L973.0,452.7 L975.0,452.5 L977.0,452.4 L979.0,452.2 L981.0,452.1 L983.0,451.9 L985.0,451.7 L987.0,451.5 L989.0,451.4 L991.0,451.2 L993.0,451.0 L995.0,450.8 L997.0,450.6 L999.0,450.4 L1001.0,450.2 L1003.0,450.0 L1005.0,449.8 L1007.0,449.6 L1009.0,449.4 L1011.0,449.2 L1013.0,449.0 L1015.0,448.7 L1017.0,448.5 L1019.0,448.3 L1021.0,448.1 L1023.0,447.9 L1025.0,447.6 L1027.0,447.4 L1029.0,447.2 L1031.0,446.9 L1033.0,446.7 L1035.0,446.5 L1037.0,446.3 L1039.0,446.0 L1041.0,445.8 L1043.0,445.6 L1045.0,445.3 L1047.0,445.1 L1049.0,444.9 L1051.0,444.6 L1053.0,444.4 L1055.0,444.1 L1057.0,443.9 L1059.0,443.6 L1061.0,443.4 L1063.0,443.1 L1065.0,442.9 L1067.0,442.6 L1069.0,442.4 L1071.0,442.1 L1073.0,441.8 L1075.0,441.6 L1077.0,441.3 L1079.0,441.0 L1081.0,440.7 L1083.0,440.4 L1085.0,440.1 L1087.0,439.8 L1089.0,439.5 L1091.0,439.2 L1093.0,438.9 L1095.0,438.6 L1097.0,438.2 L1099.0,437.9 L1101.0,437.6 L1103.0,437.3 L1105.0,436.9 L1107.0,436.6 L1109.0,436.3 L1111.0,435.9 L1113.0,435.6 L1115.0,435.3 L1117.0,434.9 L1119.0,434.6 L1121.0,434.2 L1123.0,433.9 L1125.0,433.6 L1127.0,433.2 L1129.0,432.9 L1131.0,432.5 L1133.0,432.2 L1135.0,431.9 L1137.0,431.5 L1139.0,431.2 L1141.0,430.8 L1143.0,430.5 L1145.0,430.2 L1147.0,429.8 L1149.0,429.5 L1151.0,429.2 L1153.0,428.8 L1155.0,428.5 L1157.0,428.2 L1159.0,427.9 L1161.0,427.5 L1163.0,427.2 L1165.0,426.9 L1167.0,426.6 L1169.0,426.3 L1171.0,425.9 L1173.0,425.6 L1175.0,425.3 L1177.0,425.0 L1179.0,424.7 L1181.0,424.4 L1183.0,424.1 L1185.0,423.8 L1187.0,423.5 L1189.0,423.2 L1191.0,422.9 L1193.0,422.6 L1195.0,422.4 L1197.0,422.1 L1199.0,421.8 L1201.0,421.5 L1203.0,421.2 L1205.0,421.0 L1207.0,420.7 L1209.0,420.4 L1211.0,420.2 L1213.0,419.9 L1215.0,419.6 L1217.0,419.4 L1219.0,419.1 L1221.0,418.8 L1223.0,418.6 L1225.0,418.3 L1227.0,418.1 L1229.0,417.8 L1231.0,417.6 L1233.0,417.3 L1235.0,417.1 L1237.0,416.8 L1239.0,416.6 L1241.0,416.3 L1243.0,416.1 L1245.0,415.9 L1247.0,415.6 L1249.0,415.4 L1251.0,415.2 L1253.0,414.9 L1255.0,414.7 L1257.0,414.5 L1259.0,414.2 L1261.0,414.0 L1263.0,413.8 L1265.0,413.6 L1267.0,413.3 L1269.0,413.1 L1271.0,412.9 L1273.0,412.7 L1275.0,412.5 L1277.0,412.2 L1279.0,412.0 L1281.0,411.8 L1283.0,411.6 L1285.0,411.4 L1287.0,411.2 L1289.0,411.0 L1291.0,410.7 L1293.0,410.5 L1295.0,410.3 L1297.0,410.1 L1299.0,409.9 L1301.0,409.7 L1303.0,409.5 L1305.0,409.3 L1307.0,409.1 L1309.0,408.9 L1311.0,408.7 L1313.0,408.5 L1315.0,408.3 L1317.0,408.1 L1319.0,407.9 L1321.0,407.7 L1323.0,407.5 L1325.0,407.3 L1327.0,407.1 L1329.0,406.9 L1331.0,406.7 L1333.0,406.5 L1335.0,406.3 L1337.0,406.1 L1339.0,405.9 L1341.0,405.7 L1343.0,405.5 L1345.0,405.3 L1347.0,405.1 L1349.0,404.9 L1351.0,404.7 L1353.0,404.5 L1355.0,404.3 L1357.0,404.1 L1359.0,403.9 L1361.0,403.7 L1363.0,403.5 L1365.0,403.4 L1367.0,403.2 L1369.0,403.0 L1371.0,402.8 L1373.0,402.6 L1375.0,402.4 L1377.0,402.2 L1379.0,402.0 L1381.0,401.8 L1383.0,401.6 L1385.0,401.4 L1387.0,401.2 L1389.0,401.0 L1391.0,400.8 L1393.0,400.6 L1395.0,400.4 L1397.0,400.2 L1399.0,400.0 L1401.0,399.8 L1403.0,399.6 L1405.0,399.4 L1407.0,399.2 L1409.0,399.0 L1411.0,398.8 L1413.0,398.6 L1415.0,398.4 L1417.0,398.2 L1419.0,398.0 L1421.0,397.7 L1423.0,397.5 L1425.0,397.3 L1427.0,397.1 L1429.0,396.9 L1431.0,396.7 L1433.0,396.5 L1435.0,396.3 L1437.0,396.1 L1439.0,395.8 L1441.0,395.6 L1443.0,395.4 L1445.0,395.2 L1447.0,395.0 L1449.0,394.7 L1451.0,394.5 L1453.0,394.3 L1455.0,394.1 L1457.0,393.8 L1459.0,393.6 L1461.0,393.4 L1463.0,393.1 L1465.0,392.9 L1467.0,392.7 L1469.0,392.4 L1471.0,392.2 L1473.0,392.0 L1475.0,391.7 L1477.0,391.5 L1479.0,391.2 L1481.0,391.0 L1483.0,390.7 L1485.0,390.5 L1487.0,390.3 L1489.0,390.0 L1491.0,389.7 L1493.0,389.5 L1495.0,389.2 L1497.0,389.0 L1499.0,388.7 L1501.0,388.5 L1503.0,388.2 L1505.0,387.9 L1507.0,387.7 L1509.0,387.4 L1511.0,387.1 L1513.0,386.8 L1515.0,386.6 L1517.0,386.3 L1519.0,386.0 L1521.0,385.7 L1523.0,385.4 L1525.0,385.1 L1527.0,384.9 L1529.0,384.6 L1531.0,384.3 L1533.0,384.0 L1535.0,383.7 L1537.0,383.4 L1539.0,383.1 L1541.0,382.8 L1543.0,382.5 L1545.0,382.1 L1547.0,381.8 L1548.0,381.7" fill="none" stroke="#40d040" stroke-opacity="0.65" stroke-width="1"/>
<path d="M35.0,509.8 L37.0,509.8 L39.0,509.7 L41.0,509.7 L43.0,509.7 L45.0,509.7 L47.0,509.7 L49.0,509.6 L51.0,509.6 L53.0,509.6 L55.0,509.5 L57.0,509.5 L59.0,509.5 L61.0,509.4 L63.0,509.4 L65.0,509.4 L67.0,509.3 L69.0,509.3 L71.0,509.3 L73.0,509.2 L75.0,509.2 L77.0,509.1 L79.0,509.1 L81.0,509.1 L83.0,509.0 L85.0,509.0 L87.0,508.9 L89.0,508.9 L91.0,508.8 L93.0,508.8 L95.0,508.7 L97.0,508.7 L99.0,508.6 L101.0,508.6 L103.0,508.5 L105.0,508.5 L107.0,508.4 L109.0,508.3 L111.0,508.3 L113.0,508.2 L115.0,508.2 L117.0,508.1 L119.0,508.0 L121.0,508.0 L123.0,507.9 L125.0,507.8 L127.0,507.8 L129.0,507.7 L131.0,507.7 L133.0,507.6 L135.0,507.5 L137.0,507.4 L139.0,507.4 L141.0,507.3 L143.0,507.2 L145.0,507.2 L147.0,507.1 L149.0,507.0 L151.0,506.9 L153.0,506.9 L155.0,506.8 L157.0,506.7 L159.0,506.6 L161.0,506.6 L163.0,506.5 L165.0,506.4 L167.0,506.3 L169.0,506.2 L171.0,506.2 L173.0,506.1 L175.0,506.0 L177.0,505.9 L179.0,505.8 L181.0,505.8 L183.0,505.7 L185.0,505.6 L187.0,505.5 L189.0,505.4 L191.0,505.3 L193.0,505.2 L195.0,505.2 L197.0,505.1 L199.0,505.0 L201.0,504.9 L203.0,504.8 L205.0,504.7 L207.0,504.6 L209.0,504.5 L211.0,504.4 L213.0,504.4 L215.0,504.3 L217.0,504.2 L219.0,504.1 L221.0,504.0 L223.0,503.9 L225.0,503.8 L227.0,503.7 L229.0,503.6 L231.0,503.5 L233.0,503.4 L235.0,503.3 L237.0,503.2 L239.0,503.1 L241.0,503.0 L243.0,502.9 L245.0,502.8 L247.0,502.8 L249.0,502.7 L251.0,502.6 L253.0,502.5 L255.0,502.4 L257.0,502.3 L259.0,502.2 L261.0,502.1 L263.0,502.0 L265.0,501.9 L267.0,501.8 L269.0,501.7 L271.0,501.6 L273.0,501.5 L275.0,501.4 L277.0,501.3 L279.0,501.2 L281.0,501.1 L283.0,501.0 L285.0,500.9 L287.0,500.8 L289.0,500.7 L291.0,500.6 L293.0,500.5 L295.0,500.4 L297.0,500.3 L299.0,500.2 L301.0,500.1 L303.0,500.0 L305.0,499.9 L307.0,499.8 L309.0,499.7 L311.0,499.6 L313.0,499.5 L315.0,499.4 L317.0,499.3 L319.0,499.2 L321.0,499.1 L323.0,499.0 L325.0,498.9 L327.0,498.8 L329.0,498.7 L331.0,498.6 L333.0,498.5 L335.0,498.4 L337.0,498.3 L339.0,498.2 L341.0,498.1 L343.0,498.0 L345.0,497.9 L347.0,497.8 L349.0,497.7 L351.0,497.6 L353.0,497.5 L355.0,497.4 L357.0,497.3 L359.0,497.2 L361.0,497.1 L363.0,497.0 L365.0,496.9 L367.0,496.8 L369.0,496.7 L371.0,496.6 L373.0,496.5 L375.0,496.4 L377.0,496.3 L379.0,496.2 L381.0,496.1 L383.0,496.0 L385.0,495.9 L387.0,495.8 L389.0,495.7 L391.0,495.6 L393.0,495.5 L395.0,495.4 L397.0,495.3 L399.0,495.2 L401.0,495.1 L403.0,494.9 L405.0,494.8 L407.0,494.7 L409.0,494.6 L411.0,494.5 L413.0,494.4 L415.0,494.3 L417.0,494.2 L419.0,494.1 L421.0,493.9 L423.0,493.8 L425.0,493.7 L427.0,493.6 L429.0,493.5 L431.0,493.3 L433.0,493.2 L435.0,493.1 L437.0,493.0 L439.0,492.8 L441.0,492.7 L443.0,492.6 L445.0,492.5 L447.0,492.3 L449.0,492.2 L451.0,492.1 L453.0,491.9 L455.0,491.8 L457.0,491.7 L459.0,491.5 L461.0,491.4 L463.0,491.3 L465.0,491.1 L467.0,491.0 L469.0,490.8 L471.0,490.7 L473.0,490.5 L475.0,490.4 L477.0,490.2 L479.0,490.1 L481.0,489.9 L483.0,489.8 L485.0,489.6 L487.0,489.5 L489.0,489.3 L491.0,489.2 L493.0,489.0 L495.0,488.8 L497.0,488.7 L499.0,488.5 L501.0,488.3 L503.0,488.2 L505.0,488.0 L507.0,487.8 L509.0,487.6 L511.0,487.5 L513.0,487.3 L515.0,487.1 L517.0,486.9 L519.0,486.8 L521.0,486.6 L523.0,486.4 L525.0,486.2 L527.0,486.1 L529.0,485.9 L531.0,485.7 L533.0,485.5 L535.0,485.3 L537.0,485.2 L539.0,485.0 L541.0,484.8 L543.0,484.7 L545.0,484.5 L547.0,484.3 L549.0,484.2 L551.0,484.0 L553.0,483.8 L555.0,483.7 L557.0,483.5 L559.0,483.4 L561.0,483.2 L563.0,483.1 L565.0,483.0 L567.0,482.8 L569.0,482.7 L571.0,482.6 L573.0,482.4 L575.0,482.3 L577.0,482.2 L579.0,482.1 L581.0,482.0 L583.0,481.9 L585.0,481.8 L587.0,481.7 L589.0,481.6 L591.0,481.5 L593.0,481.4 L595.0,481.3 L597.0,481.3 L599.0,481.2 L601.0,481.1 L603.0,481.1 L605.0,481.0 L607.0,480.9 L609.0,480.9 L611.0,480.8 L613.0,480.8 L615.0,480.8 L617.0,480.7 L619.0,480.7 L621.0,480.7 L623.0,480.6 L625.0,480.6 L627.0,480.6 L629.0,480.6 L631.0,480.6 L633.0,480.6 L635.0,480.6 L637.0,480.6 L639.0,480.6 L641.0,480.6 L643.0,480.6 L645.0,480.6 L647.0,480.6 L649.0,480.7 L651.0,480.7 L653.0,480.7 L655.0,480.8 L657.0,480.8 L659.0,480.8 L661.0,480.9 L663.0,480.9 L665.0,481.0 L667.0,481.0 L669.0,481.1 L671.0,481.1 L673.0,481.2 L675.0,481.2 L677.0,481.3 L679.0,481.3 L681.0,481.4 L683.0,481.4 L685.0,481.5 L687.0,481.5 L689.0,481.6 L691.0,481.6 L693.0,481.7 L695.0,481.7 L697.0,481.7 L699.0,481.8 L701.0,481.8 L703.0,481.8 L705.0,481.8 L707.0,481.9 L709.0,481.9 L711.0,481.9 L713.0,481.9 L715.0,481.9 L717.0,481.9 L719.0,481.9 L721.0,481.8 L723.0,481.8 L725.0,481.8 L727.0,481.7 L729.0,481.7 L731.0,481.6 L733.0,481.6 L735.0,481.5 L737.0,481.4 L739.0,481.3 L741.0,481.2 L743.0,481.1 L745.0,481.0 L747.0,480.9 L749.0,480.7 L751.0,480.6 L753.0,480.4 L755.0,480.2 L757.0,480.1 L759.0,479.9 L761.0,479.7 L763.0,479.5 L765.0,479.3 L767.0,479.0 L769.0,478.8 L771.0,478.5 L773.0,478.3 L775.0,478.0 L777.0,477.7 L779.0,477.4 L781.0,477.1 L783.0,476.8 L785.0,476.5 L787.0,476.1 L789.0,475.8 L791.0,475.4 L793.0,475.1 L795.0,474.7 L797.0,474.4 L799.0,474.0 L801.0,473.7 L803.0,473.3 L805.0,473.0 L807.0,472.6 L809.0,472.3 L811.0,471.9 L813.0,471.6 L815.0,471.2 L817.0,470.9 L819.0,470.6 L821.0,470.3 L823.0,470.0 L825.0,469.7 L827.0,469.4 L829.0,469.1 L831.0,468.9 L833.0,468.7 L835.0,468.4 L837.0,468.2 L839.0,468.0 L841.0,467.8 L843.0,467.6 L845.0,467.4 L847.0,467.3 L849.0,467.1 L851.0,467.0 L853.0,466.8 L855.0,466.7 L857.0,466.6 L859.0,466.5 L861.0,466.4 L863.0,466.3 L865.0,466.2 L867.0,466.1 L869.0,466.0 L871.0,465.9 L873.0,465.9 L875.0,465.8 L877.0,465.8 L879.0,465.7 L881.0,465.7 L883.0,465.6 L885.0,465.6 L887.0,465.6 L889.0,465.5 L891.0,465.5 L893.0,465.5 L895.0,465.5 L897.0,465.4 L899.0,465.4 L901.0,465.4 L903.0,465.4 L905.0,465.4 L907.0,465.4 L909.0,465.4 L911.0,465.4 L913.0,465.3 L915.0,465.3 L917.0,465.3 L919.0,465.3 L921.0,465.3 L923.0,465.3 L925.0,465.3 L927.0,465.2 L929.0,465.2 L931.0,465.2 L933.0,465.2 L935.0,465.1 L937.0,465.1 L939.0,465.1 L941.0,465.0 L943.0,465.0 L945.0,464.9 L947.0,464.9 L949.0,464.8 L951.0,464.7 L953.0,464.7 L955.0,464.6 L957.0,464.5 L959.0,464.4 L961.0,464.3 L963.0,464.2 L965.0,464.1 L967.0,464.0 L969.0,463.9 L971.0,463.8 L973.0,463.7 L975.0,463.5 L977.0,463.4 L979.0,463.3 L981.0,463.1 L983.0,463.0 L985.0,462.8 L987.0,462.7 L989.0,462.5 L991.0,462.4 L993.0,462.2 L995.0,462.0 L997.0,461.9 L999.0,461.7 L1001.0,461.5 L1003.0,461.4 L1005.0,461.2 L1007.0,461.0 L1009.0,460.8 L1011.0,460.6 L1013.0,460.5 L1015.0,460.3 L1017.0,460.1 L1019.0,459.9 L1021.0,459.7 L1023.0,459.5 L1025.0,459.3 L1027.0,459.1 L1029.0,458.9 L1031.0,458.7 L1033.0,458.5 L1035.0,458.3 L1037.0,458.1 L1039.0,457.9 L1041.0,457.7 L1043.0,457.5 L1045.0,457.3 L1047.0,457.1 L1049.0,456.9 L1051.0,456.7 L1053.0,456.5 L1055.0,456.3 L1057.0,456.1 L1059.0,455.9 L1061.0,455.7 L1063.0,455.5 L1065.0,455.3 L1067.0,455.0 L1069.0,454.8 L1071.0,454.6 L1073.0,454.4 L1075.0,454.1 L1077.0,453.9 L1079.0,453.6 L1081.0,453.4 L1083.0,453.1 L1085.0,452.9 L1087.0,452.6 L1089.0,452.4 L1091.0,452.1 L1093.0,451.8 L1095.0,451.6 L1097.0,451.3 L1099.0,451.0 L1101.0,450.7 L1103.0,450.4 L1105.0,450.2 L1107.0,449.9 L1109.0,449.6 L1111.0,449.3 L1113.0,449.0 L1115.0,448.7 L1117.0,448.4 L1119.0,448.1 L1121.0,447.9 L1123.0,447.6 L1125.0,447.3 L1127.0,447.0 L1129.0,446.7 L1131.0,446.4 L1133.0,446.1 L1135.0,445.8 L1137.0,445.5 L1139.0,445.2 L1141.0,444.9 L1143.0,444.7 L1145.0,444.4 L1147.0,444.1 L1149.0,443.8 L1151.0,443.5 L1153.0,443.2 L1155.0,442.9 L1157.0,442.7 L1159.0,442.4 L1161.0,442.1 L1163.0,441.8 L1165.0,441.5 L1167.0,441.3 L1169.0,441.0 L1171.0,440.7 L1173.0,440.5 L1175.0,440.2 L1177.0,439.9 L1179.0,439.7 L1181.0,439.4 L1183.0,439.2 L1185.0,438.9 L1187.0,438.7 L1189.0,438.4 L1191.0,438.2 L1193.0,437.9 L1195.0,437.7 L1197.0,437.4 L1199.0,437.2 L1201.0,436.9 L1203.0,436.7 L1205.0,436.5 L1207.0,436.2 L1209.0,436.0 L1211.0,435.8 L1213.0,435.5 L1215.0,435.3 L1217.0,435.1 L1219.0,434.9 L1221.0,434.7 L1223.0,434.4 L1225.0,434.2 L1227.0,434.0 L1229.0,433.8 L1231.0,433.6 L1233.0,433.4 L1235.0,433.1 L1237.0,432.9 L1239.0,432.7 L1241.0,432.5 L1243.0,432.3 L1245.0,432.1 L1247.0,431.9 L1249.0,431.7 L1251.0,431.5 L1253.0,431.3 L1255.0,431.1 L1257.0,430.9 L1259.0,430.7 L1261.0,430.5 L1263.0,430.3 L1265.0,430.1 L1267.0,429.9 L1269.0,429.7 L1271.0,429.6 L1273.0,429.4 L1275.0,429.2 L1277.0,429.0 L1279.0,428.8 L1281.0,428.6 L1283.0,428.4 L1285.0,428.3 L1287.0,428.1 L1289.0,427.9 L1291.0,427.7 L1293.0,427.5 L1295.0,427.3 L1297.0,427.2 L1299.0,427.0 L1301.0,426.8 L1303.0,426.6 L1305.0,426.5 L1307.0,426.3 L1309.0,426.1 L1311.0,425.9 L1313.0,425.8 L1315.0,425.6 L1317.0,425.4 L1319.0,425.3 L1321.0,425.1 L1323.0,424.9 L1325.0,424.7 L1327.0,424.6 L1329.0,424.4 L1331.0,424.2 L1333.0,424.1 L1335.0,423.9 L1337.0,423.7 L1339.0,423.6 L1341.0,423.4 L1343.0,423.2 L1345.0,423.0 L1347.0,422.9 L1349.0,422.7 L1351.0,422.5 L1353.0,422.4 L1355.0,422.2 L1357.0,422.0 L1359.0,421.9 L1361.0,421.7 L1363.0,421.5 L1365.0,421.4 L1367.0,421.2 L1369.0,421.0 L1371.0,420.9 L1373.0,420.7 L1375.0,420.5 L1377.0,420.4 L1379.0,420.2 L1381.0,420.0 L1383.0,419.9 L1385.0,419.7 L1387.0,419.5 L1389.0,419.4 L1391.0,419.2 L1393.0,419.0 L1395.0,418.8 L1397.0,418.7 L1399.0,418.5 L1401.0,418.3 L1403.0,418.2 L1405.0,418.0 L1407.0,417.8 L1409.0,417.6 L1411.0,417.5 L1413.0,417.3 L1415.0,417.1 L1417.0,416.9 L1419.0,416.7 L1421.0,416.6 L1423.0,416.4 L1425.0,416.2 L1427.0,416.0 L1429.0,415.9 L1431.0,415.7 L1433.0,415.5 L1435.0,415.3 L1437.0,415.1 L1439.0,414.9 L1441.0,414.7 L1443.0,414.6 L1445.0,414.4 L1447.0,414.2 L1449.0,414.0 L1451.0,413.8 L1453.0,413.6 L1455.0,413.4 L1457.0,413.2 L1459.0,413.0 L1461.0,412.8 L1463.0,412.6 L1465.0,412.4 L1467.0,412.2 L1469.0,412.0 L1471.0,411.8 L1473.0,411.6 L1475.0,411.4 L1477.0,411.2 L1479.0,411.0 L1481.0,410.8 L1483.0,410.6 L1485.0,410.4 L1487.0,410.1 L1489.0,409.9 L1491.0,409.7 L1493.0,409.5 L1495.0,409.3 L1497.0,409.1 L1499.0,408.8 L1501.0,408.6 L1503.0,408.4 L1505.0,408.1 L1507.0,407.9 L1509.0,407.7 L1511.0,407.5 L1513.0,407.2 L1515.0,407.0 L1517.0,406.7 L1519.0,406.5 L1521.0,406.3 L1523.0,406.0 L1525.0,405.8 L1527.0,405.5 L1529.0,405.3 L1531.0,405.0 L1533.0,404.8 L1535.0,404.5 L1537.0,404.2 L1539.0,404.0 L1541.0,403.7 L1543.0,403.5 L1545.0,403.2 L1547.0,402.9 L1548.0,402.8" fill="none" stroke="#30cc30" stroke-opacity="0.78" stroke-width="1"/>
<path d="M35.0,513.1 L37.0,513.1 L39.0,513.0 L41.0,513.0 L43.0,513.0 L45.0,513.0 L47.0,513.0 L49.0,512.9 L51.0,512.9 L53.0,512.9 L55.0,512.9 L57.0,512.8 L59.0,512.8 L61.0,512.8 L63.0,512.8 L65.0,512.7 L67.0,512.7 L69.0,512.7 L71.0,512.6 L73.0,512.6 L75.0,512.6 L77.0,512.5 L79.0,512.5 L81.0,512.5 L83.0,512.4 L85.0,512.4 L87.0,512.3 L89.0,512.3 L91.0,512.3 L93.0,512.2 L95.0,512.2 L97.0,512.1 L99.0,512.1 L101.0,512.1 L103.0,512.0 L105.0,512.0 L107.0,511.9 L109.0,511.9 L111.0,511.8 L113.0,511.8 L115.0,511.7 L117.0,511.7 L119.0,511.6 L121.0,511.6 L123.0,511.5 L125.0,511.5 L127.0,511.4 L129.0,511.3 L131.0,511.3 L133.0,511.2 L135.0,511.2 L137.0,511.1 L139.0,511.1 L141.0,511.0 L143.0,510.9 L145.0,510.9 L147.0,510.8 L149.0,510.8 L151.0,510.7 L153.0,510.6 L155.0,510.6 L157.0,510.5 L159.0,510.5 L161.0,510.4 L163.0,510.3 L165.0,510.3 L167.0,510.2 L169.0,510.1 L171.0,510.1 L173.0,510.0 L175.0,509.9 L177.0,509.9 L179.0,509.8 L181.0,509.7 L183.0,509.6 L185.0,509.6 L187.0,509.5 L189.0,509.4 L191.0,509.4 L193.0,509.3 L195.0,509.2 L197.0,509.1 L199.0,509.1 L201.0,509.0 L203.0,508.9 L205.0,508.8 L207.0,508.8 L209.0,508.7 L211.0,508.6 L213.0,508.5 L215.0,508.5 L217.0,508.4 L219.0,508.3 L221.0,508.2 L223.0,508.2 L225.0,508.1 L227.0,508.0 L229.0,507.9 L231.0,507.8 L233.0,507.8 L235.0,507.7 L237.0,507.6 L239.0,507.5 L241.0,507.5 L243.0,507.4 L245.0,507.3 L247.0,507.2 L249.0,507.1 L251.0,507.0 L253.0,507.0 L255.0,506.9 L257.0,506.8 L259.0,506.7 L261.0,506.6 L263.0,506.6 L265.0,506.5 L267.0,506.4 L269.0,506.3 L271.0,506.2 L273.0,506.1 L275.0,506.1 L277.0,506.0 L279.0,505.9 L281.0,505.8 L283.0,505.7 L285.0,505.7 L287.0,505.6 L289.0,505.5 L291.0,505.4 L293.0,505.3 L295.0,505.2 L297.0,505.2 L299.0,505.1 L301.0,505.0 L303.0,504.9 L305.0,504.8 L307.0,504.7 L309.0,504.7 L311.0,504.6 L313.0,504.5 L315.0,504.4 L317.0,504.3 L319.0,504.2 L321.0,504.2 L323.0,504.1 L325.0,504.0 L327.0,503.9 L329.0,503.8 L331.0,503.7 L333.0,503.7 L335.0,503.6 L337.0,503.5 L339.0,503.4 L341.0,503.3 L343.0,503.3 L345.0,503.2 L347.0,503.1 L349.0,503.0 L351.0,502.9 L353.0,502.8 L355.0,502.8 L357.0,502.7 L359.0,502.6 L361.0,502.5 L363.0,502.4 L365.0,502.4 L367.0,502.3 L369.0,502.2 L371.0,502.1 L373.0,502.0 L375.0,501.9 L377.0,501.8 L379.0,501.8 L381.0,501.7 L383.0,501.6 L385.0,501.5 L387.0,501.4 L389.0,501.3 L391.0,501.2 L393.0,501.2 L395.0,501.1 L397.0,501.0 L399.0,500.9 L401.0,500.8 L403.0,500.7 L405.0,500.6 L407.0,500.5 L409.0,500.4 L411.0,500.3 L413.0,500.2 L415.0,500.1 L417.0,500.1 L419.0,500.0 L421.0,499.9 L423.0,499.8 L425.0,499.7 L427.0,499.6 L429.0,499.5 L431.0,499.4 L433.0,499.3 L435.0,499.2 L437.0,499.1 L439.0,499.0 L441.0,498.9 L443.0,498.7 L445.0,498.6 L447.0,498.5 L449.0,498.4 L451.0,498.3 L453.0,498.2 L455.0,498.1 L457.0,498.0 L459.0,497.9 L461.0,497.8 L463.0,497.6 L465.0,497.5 L467.0,497.4 L469.0,497.3 L471.0,497.2 L473.0,497.0 L475.0,496.9 L477.0,496.8 L479.0,496.7 L481.0,496.5 L483.0,496.4 L485.0,496.3 L487.0,496.2 L489.0,496.0 L491.0,495.9 L493.0,495.8 L495.0,495.6 L497.0,495.5 L499.0,495.3 L501.0,495.2 L503.0,495.1 L505.0,494.9 L507.0,494.8 L509.0,494.6 L511.0,494.5 L513.0,494.3 L515.0,494.2 L517.0,494.0 L519.0,493.9 L521.0,493.7 L523.0,493.6 L525.0,493.4 L527.0,493.3 L529.0,493.1 L531.0,493.0 L533.0,492.9 L535.0,492.7 L537.0,492.6 L539.0,492.4 L541.0,492.3 L543.0,492.1 L545.0,492.0 L547.0,491.9 L549.0,491.7 L551.0,491.6 L553.0,491.5 L555.0,491.3 L557.0,491.2 L559.0,491.1 L561.0,490.9 L563.0,490.8 L565.0,490.7 L567.0,490.6 L569.0,490.5 L571.0,490.4 L573.0,490.3 L575.0,490.2 L577.0,490.1 L579.0,490.0 L581.0,489.9 L583.0,489.8 L585.0,489.7 L587.0,489.7 L589.0,489.6 L591.0,489.5 L593.0,489.4 L595.0,489.4 L597.0,489.3 L599.0,489.2 L601.0,489.2 L603.0,489.1 L605.0,489.1 L607.0,489.0 L609.0,489.0 L611.0,489.0 L613.0,488.9 L615.0,488.9 L617.0,488.9 L619.0,488.8 L621.0,488.8 L623.0,488.8 L625.0,488.8 L627.0,488.7 L629.0,488.7 L631.0,488.7 L633.0,488.7 L635.0,488.7 L637.0,488.7 L639.0,488.7 L641.0,488.7 L643.0,488.7 L645.0,488.8 L647.0,488.8 L649.0,488.8 L651.0,488.8 L653.0,488.8 L655.0,488.9 L657.0,488.9 L659.0,488.9 L661.0,489.0 L663.0,489.0 L665.0,489.1 L667.0,489.1 L669.0,489.1 L671.0,489.2 L673.0,489.2 L675.0,489.3 L677.0,489.3 L679.0,489.4 L681.0,489.4 L683.0,489.4 L685.0,489.5 L687.0,489.5 L689.0,489.6 L691.0,489.6 L693.0,489.6 L695.0,489.7 L697.0,489.7 L699.0,489.7 L701.0,489.7 L703.0,489.8 L705.0,489.8 L707.0,489.8 L709.0,489.8 L711.0,489.8 L713.0,489.8 L715.0,489.8 L717.0,489.8 L719.0,489.8 L721.0,489.8 L723.0,489.8 L725.0,489.7 L727.0,489.7 L729.0,489.7 L731.0,489.6 L733.0,489.6 L735.0,489.5 L737.0,489.4 L739.0,489.3 L741.0,489.3 L743.0,489.2 L745.0,489.1 L747.0,489.0 L749.0,488.8 L751.0,488.7 L753.0,488.6 L755.0,488.5 L757.0,488.3 L759.0,488.1 L761.0,488.0 L763.0,487.8 L765.0,487.6 L767.0,487.4 L769.0,487.2 L771.0,487.0 L773.0,486.8 L775.0,486.6 L777.0,486.3 L779.0,486.1 L781.0,485.8 L783.0,485.6 L785.0,485.3 L787.0,485.0 L789.0,484.7 L791.0,484.5 L793.0,484.2 L795.0,483.9 L797.0,483.6 L799.0,483.3 L801.0,483.0 L803.0,482.7 L805.0,482.4 L807.0,482.1 L809.0,481.8 L811.0,481.5 L813.0,481.2 L815.0,480.9 L817.0,480.7 L819.0,480.4 L821.0,480.2 L823.0,479.9 L825.0,479.7 L827.0,479.4 L829.0,479.2 L831.0,479.0 L833.0,478.8 L835.0,478.6 L837.0,478.4 L839.0,478.2 L841.0,478.1 L843.0,477.9 L845.0,477.8 L847.0,477.6 L849.0,477.5 L851.0,477.4 L853.0,477.3 L855.0,477.2 L857.0,477.1 L859.0,477.0 L861.0,476.9 L863.0,476.8 L865.0,476.7 L867.0,476.7 L869.0,476.6 L871.0,476.5 L873.0,476.5 L875.0,476.4 L877.0,476.4 L879.0,476.3 L881.0,476.3 L883.0,476.3 L885.0,476.2 L887.0,476.2 L889.0,476.2 L891.0,476.2 L893.0,476.1 L895.0,476.1 L897.0,476.1 L899.0,476.1 L901.0,476.1 L903.0,476.1 L905.0,476.1 L907.0,476.1 L909.0,476.1 L911.0,476.0 L913.0,476.0 L915.0,476.0 L917.0,476.0 L919.0,476.0 L921.0,476.0 L923.0,476.0 L925.0,476.0 L927.0,476.0 L929.0,475.9 L931.0,475.9 L933.0,475.9 L935.0,475.9 L937.0,475.8 L939.0,475.8 L941.0,475.8 L943.0,475.7 L945.0,475.7 L947.0,475.6 L949.0,475.6 L951.0,475.5 L953.0,475.5 L955.0,475.4 L957.0,475.3 L959.0,475.3 L961.0,475.2 L963.0,475.1 L965.0,475.0 L967.0,474.9 L969.0,474.8 L971.0,474.7 L973.0,474.6 L975.0,474.5 L977.0,474.4 L979.0,474.3 L981.0,474.2 L983.0,474.1 L985.0,473.9 L987.0,473.8 L989.0,473.7 L991.0,473.6 L993.0,473.4 L995.0,473.3 L997.0,473.2 L999.0,473.0 L1001.0,472.9 L1003.0,472.7 L1005.0,472.6 L1007.0,472.4 L1009.0,472.3 L1011.0,472.1 L1013.0,472.0 L1015.0,471.8 L1017.0,471.7 L1019.0,471.5 L1021.0,471.3 L1023.0,471.2 L1025.0,471.0 L1027.0,470.9 L1029.0,470.7 L1031.0,470.5 L1033.0,470.4 L1035.0,470.2 L1037.0,470.0 L1039.0,469.9 L1041.0,469.7 L1043.0,469.5 L1045.0,469.4 L1047.0,469.2 L1049.0,469.0 L1051.0,468.9 L1053.0,468.7 L1055.0,468.5 L1057.0,468.3 L1059.0,468.2 L1061.0,468.0 L1063.0,467.8 L1065.0,467.6 L1067.0,467.4 L1069.0,467.3 L1071.0,467.1 L1073.0,466.9 L1075.0,466.7 L1077.0,466.5 L1079.0,466.3 L1081.0,466.1 L1083.0,465.9 L1085.0,465.7 L1087.0,465.4 L1089.0,465.2 L1091.0,465.0 L1093.0,464.8 L1095.0,464.5 L1097.0,464.3 L1099.0,464.1 L1101.0,463.9 L1103.0,463.6 L1105.0,463.4 L1107.0,463.1 L1109.0,462.9 L1111.0,462.7 L1113.0,462.4 L1115.0,462.2 L1117.0,461.9 L1119.0,461.7 L1121.0,461.5 L1123.0,461.2 L1125.0,461.0 L1127.0,460.7 L1129.0,460.5 L1131.0,460.2 L1133.0,460.0 L1135.0,459.8 L1137.0,459.5 L1139.0,459.3 L1141.0,459.0 L1143.0,458.8 L1145.0,458.6 L1147.0,458.3 L1149.0,458.1 L1151.0,457.8 L1153.0,457.6 L1155.0,457.4 L1157.0,457.1 L1159.0,456.9 L1161.0,456.7 L1163.0,456.4 L1165.0,456.2 L1167.0,456.0 L1169.0,455.8 L1171.0,455.5 L1173.0,455.3 L1175.0,455.1 L1177.0,454.9 L1179.0,454.6 L1181.0,454.4 L1183.0,454.2 L1185.0,454.0 L1187.0,453.8 L1189.0,453.6 L1191.0,453.4 L1193.0,453.2 L1195.0,453.0 L1197.0,452.8 L1199.0,452.6 L1201.0,452.4 L1203.0,452.2 L1205.0,452.0 L1207.0,451.8 L1209.0,451.6 L1211.0,451.4 L1213.0,451.2 L1215.0,451.0 L1217.0,450.8 L1219.0,450.6 L1221.0,450.5 L1223.0,450.3 L1225.0,450.1 L1227.0,449.9 L1229.0,449.7 L1231.0,449.6 L1233.0,449.4 L1235.0,449.2 L1237.0,449.0 L1239.0,448.9 L1241.0,448.7 L1243.0,448.5 L1245.0,448.3 L1247.0,448.2 L1249.0,448.0 L1251.0,447.8 L1253.0,447.7 L1255.0,447.5 L1257.0,447.3 L1259.0,447.2 L1261.0,447.0 L1263.0,446.8 L1265.0,446.7 L1267.0,446.5 L1269.0,446.4 L1271.0,446.2 L1273.0,446.1 L1275.0,445.9 L1277.0,445.7 L1279.0,445.6 L1281.0,445.4 L1283.0,445.3 L1285.0,445.1 L1287.0,445.0 L1289.0,444.8 L1291.0,444.7 L1293.0,444.5 L1295.0,444.4 L1297.0,444.2 L1299.0,444.1 L1301.0,443.9 L1303.0,443.8 L1305.0,443.6 L1307.0,443.5 L1309.0,443.3 L1311.0,443.2 L1313.0,443.1 L1315.0,442.9 L1317.0,442.8 L1319.0,442.6 L1321.0,442.5 L1323.0,442.3 L1325.0,442.2 L1327.0,442.1 L1329.0,441.9 L1331.0,441.8 L1333.0,441.6 L1335.0,441.5 L1337.0,441.4 L1339.0,441.2 L1341.0,441.1 L1343.0,440.9 L1345.0,440.8 L1347.0,440.7 L1349.0,440.5 L1351.0,440.4 L1353.0,440.2 L1355.0,440.1 L1357.0,440.0 L1359.0,439.8 L1361.0,439.7 L1363.0,439.5 L1365.0,439.4 L1367.0,439.3 L1369.0,439.1 L1371.0,439.0 L1373.0,438.8 L1375.0,438.7 L1377.0,438.6 L1379.0,438.4 L1381.0,438.3 L1383.0,438.1 L1385.0,438.0 L1387.0,437.9 L1389.0,437.7 L1391.0,437.6 L1393.0,437.4 L1395.0,437.3 L1397.0,437.1 L1399.0,437.0 L1401.0,436.9 L1403.0,436.7 L1405.0,436.6 L1407.0,436.4 L1409.0,436.3 L1411.0,436.1 L1413.0,436.0 L1415.0,435.8 L1417.0,435.7 L1419.0,435.5 L1421.0,435.4 L1423.0,435.2 L1425.0,435.1 L1427.0,434.9 L1429.0,434.8 L1431.0,434.6 L1433.0,434.5 L1435.0,434.3 L1437.0,434.2 L1439.0,434.0 L1441.0,433.9 L1443.0,433.7 L1445.0,433.6 L1447.0,433.4 L1449.0,433.2 L1451.0,433.1 L1453.0,432.9 L1455.0,432.8 L1457.0,432.6 L1459.0,432.4 L1461.0,432.3 L1463.0,432.1 L1465.0,431.9 L1467.0,431.8 L1469.0,431.6 L1471.0,431.4 L1473.0,431.3 L1475.0,431.1 L1477.0,430.9 L1479.0,430.7 L1481.0,430.6 L1483.0,430.4 L1485.0,430.2 L1487.0,430.0 L1489.0,429.9 L1491.0,429.7 L1493.0,429.5 L1495.0,429.3 L1497.0,429.1 L1499.0,428.9 L1501.0,428.8 L1503.0,428.6 L1505.0,428.4 L1507.0,428.2 L1509.0,428.0 L1511.0,427.8 L1513.0,427.6 L1515.0,427.4 L1517.0,427.2 L1519.0,427.0 L1521.0,426.8 L1523.0,426.6 L1525.0,426.4 L1527.0,426.2 L1529.0,426.0 L1531.0,425.8 L1533.0,425.6 L1535.0,425.3 L1537.0,425.1 L1539.0,424.9 L1541.0,424.7 L1543.0,424.5 L1545.0,424.2 L1547.0,424.0 L1548.0,423.9" fill="none" stroke="#28c828" stroke-opacity="0.9" stroke-width="1"/>
<line x1="1189" y1="353.5" x2="1548" y2="353.5" stroke="#5a5a5a" stroke-width="2"/>
<path d="M35.1,486.9 L37.6,486.7 L39.7,487.9 L42.2,487.1 L44.8,488.1 L47.3,486.9 L52.4,486.7 L57,487.7 L60.6,487.1 L64.6,487.7 L69.2,487.4 L71.3,485.6 L73.8,487.9 L77.9,486.3 L84,486.3 L89.1,485.3 L95.2,486 L101.3,484.3 L106.4,483.3 L111.5,484 L113.5,485 L117.6,484 L122.2,487.1 L126.8,485 L131.4,485.6 L133.4,486.3 L136.4,485.8 L140,485.6 L144.4,487.2 L148.8,486.6 L153.8,489.1 L157.7,487.7 L161.5,484.4 L165.4,485.8 L169.2,483.6 L174.2,482.5 L179.7,481.1 L185.3,479.5 L190.8,479.7 L196.3,479.7 L201.8,478.1 L207.3,475.9 L215.1,474.2 L219.5,477.3 L226.1,478.1 L230.5,477.3 L234.4,478.4 L236.6,475.9 L241.5,477.3 L246,478.4 L247.6,480.3 L249.3,477.7 L253.7,479.5 L259.2,477.5 L264.7,475.3 L271.9,473.9 L277,474.7 L285.5,471.6 L294,470 L300.7,471 L305.8,467.9 L311,468.8 L316,464.9 L326.2,467 L333,463.2 L338,464.2 L343.2,467 L350,464.5 L353.4,465.9 L356.8,462.8 L365.3,459.1 L372,459.4 L378.8,461.5 L385.6,457.7 L393.3,454.7 L396.7,462.8 L398.4,458.6 L407.7,454.7 L411.1,456.9 L416.2,458.1 L423,453.5 L429.8,451 L434.9,449.2 L437.4,453.5 L445.9,451 L451.9,456 L457,453.5 L463.6,453 L470.4,449.6 L474.6,453 L477.2,451.6 L481.4,456.7 L484.8,452.7 L488.2,454.7 L490.7,450.5 L495,451.6 L497.5,459.8 L500.1,458.9 L501.8,460.6 L508.6,453.9 L516.2,445.4 L521.3,444.2 L526.4,440.3 L532.3,441.1 L534.9,448.8 L538.3,444.5 L548.5,447.1 L557,436.9 L562,434.7 L567.1,434.3 L571.4,431.3 L579,430.1 L584.1,429.7 L590.9,434.7 L594.3,433 L597.7,432.3 L599.4,439.4 L606.2,437.7 L610.4,439.8 L613.8,435.7 L623.2,434 L626.6,434.3 L630,430.9 L633,428.7 L635.9,443.7 L637.6,444.2 L642,462.3 L645.1,454.7 L648.5,447.9 L651,451 L653.6,447.6 L657.8,443.2 L660.4,448.8 L666.3,440.3 L668.9,446.7 L671.4,444.2 L674,450.5 L677.4,448.3 L682.4,441.5 L686.7,444.2 L690.9,444.5 L694.3,440.3 L698.6,437.7 L700.3,434.7 L702.8,439.8 L707.9,430.1 L711.3,428.4 L713.9,438.6 L719.8,425 L724.9,424.1 L729.1,422.4 L733.4,419.6 L740.2,420.7 L742.7,430.1 L747,419.9 L752.1,420.7 L755.4,423.3 L758.8,425.5 L765.6,416.5 L769.9,410.9 L772.4,412.3 L775.8,418.2 L779.2,414.8 L782.6,417 L787.7,412.3 L792.8,411.4 L797,414 L800.4,408 L805.5,411.9 L811.5,405.1 L818.3,405.8 L820.8,411.4 L825.1,410.6 L827.6,405.1 L830.2,409.7 L832.7,408.5 L837.6,414.3 L840.2,423.2 L843.6,412.6 L845.3,416 L847.8,409.2 L852.1,407.9 L854.6,410.1 L858,419.1 L864,414.7 L865.7,416 L868.7,410.9 L871.6,418.1 L874.1,410.6 L877.5,410.1 L880.9,408 L883,411.8 L885.2,408 L888.1,420.3 L891.1,422 L892.8,427.1 L897.1,423.2 L899.6,425.4 L903,441.5 L908.1,438.9 L909.8,439.8 L912.3,443.2 L916.6,433 L923.4,430 L927.6,437.2 L931.9,427.6 L937,438.4 L940.4,433.9 L942.9,433 L946.3,426.2 L951.4,431.3 L954.8,425.4 L959,418.1 L965.8,420.3 L970.1,414 L975.2,415.7 L979.4,410.6 L985.3,410.9 L990.4,405.5 L993,405.8 L995.5,401.1 L998.9,398.7 L1001.8,393.6 L1004,395.7 L1006.6,401.1 L1010,401.1 L1012.5,407.2 L1016.8,405 L1019.3,396.5 L1023.6,392.3 L1026.8,396.4 L1030.2,396.1 L1032.7,402.9 L1037,402.3 L1041.2,406.6 L1048,397.2 L1056.5,415.1 L1058.7,410 L1061.6,413.4 L1064.1,407.4 L1065.8,408.3 L1068.4,398.4 L1072.6,396.4 L1075.2,399.5 L1077.7,396.1 L1083.7,394.7 L1087.9,388.8 L1090.5,389.3 L1093,378.6 L1098.1,370.9 L1100.6,372.6 L1104,368.9 L1108.3,370.6 L1110.8,368.9 L1113.4,373.5 L1116.8,382 L1120.2,377.7 L1125.3,380.3 L1128.7,381.1 L1132.9,372.6 L1135.4,375.2 L1139.7,376.9 L1142.2,380.3 L1144.8,377.7 L1149,382 L1153.3,383.2 L1155,381.1 L1158.4,370.1 L1160.9,367.5 L1164.3,364.5 L1168.6,366.7 L1172.8,370.6 L1175.3,368.4 L1179.6,369.6 L1183.8,356.5 L1188.9,353.5" fill="none" stroke="#4a4a4a" stroke-width="2" stroke-linejoin="round"/>
<path d="M35.0,496.6 L37.0,496.6 L39.0,496.6 L41.0,496.5 L43.0,496.5 L45.0,496.5 L47.0,496.4 L49.0,496.4 L51.0,496.3 L53.0,496.3 L55.0,496.2 L57.0,496.2 L59.0,496.1 L61.0,496.1 L63.0,496.0 L65.0,496.0 L67.0,495.9 L69.0,495.8 L71.0,495.8 L73.0,495.7 L75.0,495.6 L77.0,495.6 L79.0,495.5 L81.0,495.4 L83.0,495.4 L85.0,495.3 L87.0,495.2 L89.0,495.1 L91.0,495.0 L93.0,495.0 L95.0,494.9 L97.0,494.8 L99.0,494.7 L101.0,494.6 L103.0,494.5 L105.0,494.4 L107.0,494.3 L109.0,494.2 L111.0,494.1 L113.0,494.0 L115.0,493.9 L117.0,493.8 L119.0,493.7 L121.0,493.6 L123.0,493.5 L125.0,493.4 L127.0,493.3 L129.0,493.2 L131.0,493.1 L133.0,493.0 L135.0,492.9 L137.0,492.7 L139.0,492.6 L141.0,492.5 L143.0,492.4 L145.0,492.3 L147.0,492.2 L149.0,492.0 L151.0,491.9 L153.0,491.8 L155.0,491.7 L157.0,491.5 L159.0,491.4 L161.0,491.3 L163.0,491.1 L165.0,491.0 L167.0,490.9 L169.0,490.7 L171.0,490.6 L173.0,490.5 L175.0,490.3 L177.0,490.2 L179.0,490.1 L181.0,489.9 L183.0,489.8 L185.0,489.6 L187.0,489.5 L189.0,489.4 L191.0,489.2 L193.0,489.1 L195.0,488.9 L197.0,488.8 L199.0,488.6 L201.0,488.5 L203.0,488.3 L205.0,488.2 L207.0,488.0 L209.0,487.9 L211.0,487.7 L213.0,487.6 L215.0,487.4 L217.0,487.3 L219.0,487.1 L221.0,487.0 L223.0,486.8 L225.0,486.6 L227.0,486.5 L229.0,486.3 L231.0,486.2 L233.0,486.0 L235.0,485.9 L237.0,485.7 L239.0,485.5 L241.0,485.4 L243.0,485.2 L245.0,485.1 L247.0,484.9 L249.0,484.7 L251.0,484.6 L253.0,484.4 L255.0,484.3 L257.0,484.1 L259.0,483.9 L261.0,483.8 L263.0,483.6 L265.0,483.4 L267.0,483.3 L269.0,483.1 L271.0,482.9 L273.0,482.8 L275.0,482.6 L277.0,482.5 L279.0,482.3 L281.0,482.1 L283.0,482.0 L285.0,481.8 L287.0,481.6 L289.0,481.5 L291.0,481.3 L293.0,481.1 L295.0,481.0 L297.0,480.8 L299.0,480.6 L301.0,480.5 L303.0,480.3 L305.0,480.2 L307.0,480.0 L309.0,479.8 L311.0,479.7 L313.0,479.5 L315.0,479.3 L317.0,479.2 L319.0,479.0 L321.0,478.8 L323.0,478.7 L325.0,478.5 L327.0,478.4 L329.0,478.2 L331.0,478.0 L333.0,477.9 L335.0,477.7 L337.0,477.5 L339.0,477.4 L341.0,477.2 L343.0,477.1 L345.0,476.9 L347.0,476.7 L349.0,476.6 L351.0,476.4 L353.0,476.3 L355.0,476.1 L357.0,475.9 L359.0,475.8 L361.0,475.6 L363.0,475.4 L365.0,475.3 L367.0,475.1 L369.0,474.9 L371.0,474.8 L373.0,474.6 L375.0,474.4 L377.0,474.3 L379.0,474.1 L381.0,473.9 L383.0,473.8 L385.0,473.6 L387.0,473.4 L389.0,473.2 L391.0,473.1 L393.0,472.9 L395.0,472.7 L397.0,472.5 L399.0,472.4 L401.0,472.2 L403.0,472.0 L405.0,471.8 L407.0,471.6 L409.0,471.4 L411.0,471.2 L413.0,471.1 L415.0,470.9 L417.0,470.7 L419.0,470.5 L421.0,470.3 L423.0,470.1 L425.0,469.9 L427.0,469.7 L429.0,469.5 L431.0,469.3 L433.0,469.1 L435.0,468.8 L437.0,468.6 L439.0,468.4 L441.0,468.2 L443.0,468.0 L445.0,467.8 L447.0,467.5 L449.0,467.3 L451.0,467.1 L453.0,466.9 L455.0,466.6 L457.0,466.4 L459.0,466.2 L461.0,465.9 L463.0,465.7 L465.0,465.4 L467.0,465.2 L469.0,464.9 L471.0,464.7 L473.0,464.4 L475.0,464.2 L477.0,463.9 L479.0,463.6 L481.0,463.4 L483.0,463.1 L485.0,462.8 L487.0,462.6 L489.0,462.3 L491.0,462.0 L493.0,461.8 L495.0,461.5 L497.0,461.2 L499.0,461.0 L501.0,460.7 L503.0,460.4 L505.0,460.1 L507.0,459.9 L509.0,459.6 L511.0,459.3 L513.0,459.0 L515.0,458.8 L517.0,458.5 L519.0,458.2 L521.0,457.9 L523.0,457.7 L525.0,457.4 L527.0,457.1 L529.0,456.8 L531.0,456.6 L533.0,456.3 L535.0,456.0 L537.0,455.7 L539.0,455.5 L541.0,455.2 L543.0,454.9 L545.0,454.7 L547.0,454.4 L549.0,454.2 L551.0,453.9 L553.0,453.6 L555.0,453.4 L557.0,453.1 L559.0,452.9 L561.0,452.7 L563.0,452.4 L565.0,452.2 L567.0,452.0 L569.0,451.7 L571.0,451.5 L573.0,451.3 L575.0,451.1 L577.0,450.9 L579.0,450.7 L581.0,450.5 L583.0,450.3 L585.0,450.1 L587.0,449.9 L589.0,449.7 L591.0,449.6 L593.0,449.4 L595.0,449.3 L597.0,449.1 L599.0,449.0 L601.0,448.8 L603.0,448.7 L605.0,448.6 L607.0,448.5 L609.0,448.4 L611.0,448.3 L613.0,448.2 L615.0,448.1 L617.0,448.1 L619.0,448.0 L621.0,448.0 L623.0,447.9 L625.0,447.9 L627.0,447.9 L629.0,447.9 L631.0,447.9 L633.0,447.9 L635.0,447.9 L637.0,447.9 L639.0,447.9 L641.0,447.9 L643.0,448.0 L645.0,448.0 L647.0,448.0 L649.0,448.1 L651.0,448.1 L653.0,448.2 L655.0,448.2 L657.0,448.3 L659.0,448.4 L661.0,448.4 L663.0,448.5 L665.0,448.6 L667.0,448.6 L669.0,448.7 L671.0,448.8 L673.0,448.9 L675.0,448.9 L677.0,449.0 L679.0,449.1 L681.0,449.2 L683.0,449.2 L685.0,449.3 L687.0,449.4 L689.0,449.4 L691.0,449.5 L693.0,449.6 L695.0,449.6 L697.0,449.7 L699.0,449.8 L701.0,449.8 L703.0,449.9 L705.0,449.9 L707.0,449.9 L709.0,450.0 L711.0,450.0 L713.0,450.0 L715.0,450.0 L717.0,450.0 L719.0,450.0 L721.0,450.0 L723.0,450.0 L725.0,449.9 L727.0,449.9 L729.0,449.8 L731.0,449.7 L733.0,449.6 L735.0,449.5 L737.0,449.4 L739.0,449.3 L741.0,449.1 L743.0,448.9 L745.0,448.7 L747.0,448.5 L749.0,448.3 L751.0,448.0 L753.0,447.8 L755.0,447.5 L757.0,447.1 L759.0,446.8 L761.0,446.5 L763.0,446.1 L765.0,445.7 L767.0,445.3 L769.0,444.9 L771.0,444.5 L773.0,444.0 L775.0,443.6 L777.0,443.1 L779.0,442.6 L781.0,442.1 L783.0,441.6 L785.0,441.1 L787.0,440.6 L789.0,440.0 L791.0,439.5 L793.0,439.0 L795.0,438.4 L797.0,437.9 L799.0,437.3 L801.0,436.8 L803.0,436.2 L805.0,435.6 L807.0,435.1 L809.0,434.5 L811.0,433.9 L813.0,433.4 L815.0,432.8 L817.0,432.2 L819.0,431.7 L821.0,431.2 L823.0,430.6 L825.0,430.1 L827.0,429.6 L829.0,429.1 L831.0,428.6 L833.0,428.2 L835.0,427.7 L837.0,427.3 L839.0,426.8 L841.0,426.4 L843.0,426.1 L845.0,425.7 L847.0,425.4 L849.0,425.1 L851.0,424.8 L853.0,424.5 L855.0,424.3 L857.0,424.1 L859.0,423.9 L861.0,423.7 L863.0,423.6 L865.0,423.5 L867.0,423.4 L869.0,423.3 L871.0,423.2 L873.0,423.1 L875.0,423.1 L877.0,423.0 L879.0,423.0 L881.0,423.0 L883.0,423.0 L885.0,423.0 L887.0,423.0 L889.0,423.0 L891.0,423.0 L893.0,423.1 L895.0,423.1 L897.0,423.1 L899.0,423.1 L901.0,423.2 L903.0,423.2 L905.0,423.2 L907.0,423.2 L909.0,423.2 L911.0,423.2 L913.0,423.2 L915.0,423.2 L917.0,423.2 L919.0,423.2 L921.0,423.1 L923.0,423.1 L925.0,423.0 L927.0,423.0 L929.0,422.9 L931.0,422.8 L933.0,422.7 L935.0,422.6 L937.0,422.5 L939.0,422.4 L941.0,422.3 L943.0,422.1 L945.0,422.0 L947.0,421.9 L949.0,421.7 L951.0,421.5 L953.0,421.4 L955.0,421.2 L957.0,421.0 L959.0,420.9 L961.0,420.7 L963.0,420.5 L965.0,420.3 L967.0,420.1 L969.0,419.9 L971.0,419.6 L973.0,419.4 L975.0,419.2 L977.0,419.0 L979.0,418.7 L981.0,418.5 L983.0,418.3 L985.0,418.0 L987.0,417.8 L989.0,417.5 L991.0,417.3 L993.0,417.0 L995.0,416.8 L997.0,416.5 L999.0,416.2 L1001.0,416.0 L1003.0,415.7 L1005.0,415.4 L1007.0,415.2 L1009.0,414.9 L1011.0,414.6 L1013.0,414.3 L1015.0,414.1 L1017.0,413.8 L1019.0,413.5 L1021.0,413.2 L1023.0,412.9 L1025.0,412.6 L1027.0,412.4 L1029.0,412.1 L1031.0,411.8 L1033.0,411.5 L1035.0,411.2 L1037.0,410.9 L1039.0,410.5 L1041.0,410.2 L1043.0,409.9 L1045.0,409.6 L1047.0,409.3 L1049.0,408.9 L1051.0,408.6 L1053.0,408.3 L1055.0,407.9 L1057.0,407.6 L1059.0,407.2 L1061.0,406.8 L1063.0,406.5 L1065.0,406.1 L1067.0,405.7 L1069.0,405.3 L1071.0,404.9 L1073.0,404.5 L1075.0,404.1 L1077.0,403.7 L1079.0,403.3 L1081.0,402.9 L1083.0,402.5 L1085.0,402.0 L1087.0,401.6 L1089.0,401.1 L1091.0,400.7 L1093.0,400.2 L1095.0,399.7 L1097.0,399.2 L1099.0,398.8 L1101.0,398.3 L1103.0,397.8 L1105.0,397.3 L1107.0,396.8 L1109.0,396.3 L1111.0,395.8 L1113.0,395.3 L1115.0,394.8 L1117.0,394.3 L1119.0,393.7 L1121.0,393.2 L1123.0,392.7 L1125.0,392.2 L1127.0,391.7 L1129.0,391.2 L1131.0,390.7 L1133.0,390.1 L1135.0,389.6 L1137.0,389.1 L1139.0,388.6 L1141.0,388.1 L1143.0,387.6 L1145.0,387.1 L1147.0,386.6 L1149.0,386.1 L1151.0,385.6 L1153.0,385.1 L1155.0,384.7 L1157.0,384.2 L1159.0,383.7 L1161.0,383.2 L1163.0,382.8 L1165.0,382.3 L1167.0,381.9 L1169.0,381.5 L1171.0,381.0 L1173.0,380.6 L1175.0,380.2 L1177.0,379.8 L1179.0,379.4 L1181.0,379.0 L1183.0,378.6 L1185.0,378.3 L1187.0,377.9 L1189.0,377.6 L1191.0,377.2 L1193.0,376.9 L1195.0,376.6 L1197.0,376.3 L1199.0,376.0 L1201.0,375.8 L1204.0,375.3 L1207.0,374.8 L1210.0,374.3 L1213.0,373.8 L1216.0,373.3 L1219.0,372.8 L1222.0,372.3 L1225.0,371.8 L1228.0,371.3 L1231.0,370.8 L1234.0,370.3 L1237.0,369.8 L1240.0,369.3 L1243.0,368.8 L1246.0,368.3 L1249.0,367.8 L1252.0,367.3 L1255.0,366.8 L1258.0,366.3 L1261.0,365.8 L1264.0,365.3 L1267.0,364.8 L1270.0,364.3 L1273.0,363.8 L1276.0,363.3 L1279.0,362.8 L1282.0,362.3 L1285.0,361.8 L1288.0,361.3 L1291.0,360.8 L1294.0,360.3 L1297.0,359.8 L1300.0,359.3 L1303.0,358.8 L1306.0,358.3 L1309.0,357.8 L1312.0,357.3 L1315.0,356.8 L1318.0,356.3 L1321.0,355.9 L1324.0,355.4 L1327.0,355.0 L1330.0,354.5 L1333.0,354.1 L1336.0,353.6 L1339.0,353.2 L1342.0,352.7 L1345.0,352.3 L1348.0,351.8 L1351.0,351.4 L1354.0,350.9 L1357.0,350.5 L1360.0,350.0 L1363.0,349.6 L1366.0,349.1 L1369.0,348.7 L1372.0,348.2 L1375.0,347.8 L1378.0,347.4 L1381.0,346.9 L1384.0,346.5 L1387.0,346.0 L1390.0,345.6 L1393.0,345.1 L1396.0,344.7 L1399.0,344.2 L1402.0,343.8 L1405.0,343.3 L1408.0,342.9 L1411.0,342.4 L1414.0,342.0 L1417.0,341.5 L1420.0,341.1 L1423.0,340.6 L1426.0,340.2 L1429.0,339.7 L1432.0,339.3 L1435.0,338.8 L1438.0,338.2 L1441.0,337.7 L1444.0,337.1 L1447.0,336.6 L1450.0,336.1 L1453.0,335.5 L1456.0,335.0 L1459.0,334.4 L1462.0,333.9 L1465.0,333.4 L1468.0,332.8 L1471.0,332.3 L1474.0,331.7 L1477.0,331.2 L1480.0,330.7 L1483.0,330.1 L1486.0,329.6 L1489.0,329.0 L1492.0,328.5 L1495.0,327.9 L1498.0,327.4 L1501.0,326.9 L1504.0,326.3 L1507.0,325.8 L1510.0,325.2 L1513.0,324.7 L1516.0,324.2 L1519.0,323.6 L1522.0,323.1 L1525.0,322.5 L1528.0,322.0 L1531.0,321.5 L1534.0,320.9 L1537.0,320.4 L1540.0,319.8 L1543.0,319.3 L1546.0,318.8 L1548.0,318.4" fill="none" stroke="#d3842a" stroke-width="3" stroke-dasharray="6,7.2" stroke-linecap="round"/>
<path d="M1199,376.1 L1316,355.0 L1432,334.3 L1548,313.3" fill="none" stroke="#d3842a" stroke-width="2" stroke-dasharray="3,2.4"/>
<path d="M1199,376.1 L1316,362.2 L1432,344.8 L1548,322.6" fill="none" stroke="#d3842a" stroke-width="2" stroke-dasharray="3,2.4"/>
<circle cx="35.0" cy="496.6" r="2.6" fill="#d3842a"/>
<circle cx="151.4" cy="491.9" r="2.6" fill="#d3842a"/>
<circle cx="267.8" cy="483.2" r="2.6" fill="#d3842a"/>
<circle cx="384.2" cy="473.7" r="2.6" fill="#d3842a"/>
<circle cx="500.5" cy="460.7" r="2.6" fill="#d3842a"/>
<circle cx="616.9" cy="448.1" r="2.6" fill="#d3842a"/>
<circle cx="733.3" cy="449.6" r="2.6" fill="#d3842a"/>
<circle cx="849.7" cy="425.0" r="2.6" fill="#d3842a"/>
<circle cx="966.1" cy="420.2" r="2.6" fill="#d3842a"/>
<circle cx="1082.5" cy="402.6" r="2.6" fill="#d3842a"/>
<circle cx="1198.8" cy="376.0" r="2.6" fill="#d3842a"/>
<circle cx="1316" cy="355.0" r="2.4" fill="#d3842a"/>
<circle cx="1432" cy="334.3" r="2.4" fill="#d3842a"/>
<circle cx="1316" cy="362.2" r="2.4" fill="#d3842a"/>
<circle cx="1432" cy="344.8" r="2.4" fill="#d3842a"/>
<circle cx="1316" cy="356.6" r="2.4" fill="#d3842a"/>
<circle cx="1432" cy="339.3" r="2.4" fill="#d3842a"/>
<line x1="1189" y1="353.6" x2="1548.4" y2="311.6" stroke="#11a611" stroke-width="2.2" stroke-dasharray="6,2.3"/>
<path d="M1548.5,306.2 L1553.8,314.2 L1543.2,314.2 Z" fill="#ff9a3a"/>
<path d="M1548.5,311.5 L1553.8,319.5 L1543.2,319.5 Z" fill="#ff9a3a"/>
<path d="M1548.5,316.7 L1553.8,324.7 L1543.2,324.7 Z" fill="#ff9a3a"/>
<circle cx="1189" cy="353.6" r="4.5" fill="#09a009"/>
<circle cx="1548.4" cy="311.6" r="4.7" fill="#09a009"/>
<text x="21.5" y="175.5" text-anchor="end" class="ax">800</text>
<text x="21.5" y="220.3" text-anchor="end" class="ax">700</text>
<text x="21.5" y="265.2" text-anchor="end" class="ax">600</text>
<text x="21.5" y="310.1" text-anchor="end" class="ax">500</text>
<text x="21.5" y="354.9" text-anchor="end" class="ax">400</text>
<text x="21.5" y="399.8" text-anchor="end" class="ax">300</text>
<text x="21.5" y="444.6" text-anchor="end" class="ax">200</text>
<text x="21.5" y="489.5" text-anchor="end" class="ax">100</text>
<text x="21.5" y="534.3" text-anchor="end" class="ax">0</text>
<text x="35.0" y="553" text-anchor="middle" class="ax">12/2014</text>
<text x="151.4" y="553" text-anchor="middle" class="ax">12/2015</text>
<text x="267.8" y="553" text-anchor="middle" class="ax">12/2016</text>
<text x="384.2" y="553" text-anchor="middle" class="ax">12/2017</text>
<text x="500.5" y="553" text-anchor="middle" class="ax">12/2018</text>
<text x="616.9" y="553" text-anchor="middle" class="ax">12/2019</text>
<text x="733.3" y="553" text-anchor="middle" class="ax">12/2020</text>
<text x="849.7" y="553" text-anchor="middle" class="ax">12/2021</text>
<text x="966.1" y="553" text-anchor="middle" class="ax">12/2022</text>
<text x="1082.5" y="553" text-anchor="middle" class="ax">12/2023</text>
<text x="1198.8" y="553" text-anchor="middle" class="ax">12/2024</text>
<text x="1315.2" y="553" text-anchor="middle" class="ax">12/2025</text>
<text x="1431.6" y="553" text-anchor="middle" class="ax">12/2026</text>
<text x="1548.5" y="553" text-anchor="end" class="ax">12/2027</text>
<text x="1195" y="185" class="prog">Prognose</text>
</svg>
<!-- legend -->
<svg class="abs" style="left:0;top:0" width="1819" height="589">
<line x1="479" y1="133.7" x2="495" y2="133.7" stroke="#4a4a4a" stroke-width="2"/>
<line x1="538" y1="133.7" x2="549" y2="133.7" stroke="#d3842a" stroke-width="3"/>
<circle cx="547.5" cy="133.7" r="2.6" fill="#d3842a"/>
<circle cx="553.5" cy="133.7" r="1.3" fill="#d3842a"/>
<line x1="718" y1="133.7" x2="722" y2="133.7" stroke="#d3842a" stroke-width="2"/>
<circle cx="726" cy="133.7" r="2.3" fill="#d3842a"/>
<line x1="729" y1="133.7" x2="733" y2="133.7" stroke="#d3842a" stroke-width="2"/>
<line x1="892" y1="133.7" x2="908" y2="133.7" stroke="#90e890" stroke-width="2"/>
</svg>
<div class="leg" style="left:499px">Kurs</div>
<div class="leg" style="left:558.5px">Fair Value bereinigter Gewinn</div>
<div class="leg" style="left:738px">Fair Value Prognosekorridor</div>
<div class="leg" style="left:912px">Bewertungslinien</div>
<div class="rb" style="left:686px">5J</div>
<div class="rb" style="left:715.5px">8J</div>
<div class="rb on" style="left:745px">10J</div>
<div class="rb" style="left:775px">15J</div>
<div class="rb" style="left:804.5px">20J</div>
<div class="rb" style="left:834px">Alle</div>
<div class="logb">log.</div>
<!-- right panel -->
<div class="h" style="left:1628px;top:135px;letter-spacing:0.1px">Multiples</div>
<div class="info" style="left:1706.3px;top:135.5px"><svg width="18" height="18" viewBox="0 0 18 18" style="display:block"><circle cx="9" cy="9" r="8.7" fill="#1592dc"/><path d="M7.6,4.7 H10.6 V6.5 H7.6Z M6.8,7.9 H10.6 V12.2 H11.3 V13.5 H6.8 V12.2 H7.6 V9 H6.8Z" fill="#fff"/></svg></div>
<div class="rp" style="left:1661px;top:170px;letter-spacing:0.25px">Schnitt</div>
<div class="rp" style="left:1741.5px;top:170px;letter-spacing:0.3px">Akt.</div>
<div class="rp" style="left:1563px;top:201px;letter-spacing:-0.3px">KGV ber.</div>
<div class="box w" style="left:1657px;top:195.5px;width:63px">28.3</div>
<div class="box" style="left:1723px;top:195.5px;width:53px">33.7</div>
<div class="h" style="left:1622px;top:241px;letter-spacing:0.1px">Aktienkauf</div>
<div class="info" style="left:1712px;top:241.7px"><svg width="18" height="18" viewBox="0 0 18 18" style="display:block"><circle cx="9" cy="9" r="8.7" fill="#1592dc"/><path d="M7.6,4.7 H10.6 V6.5 H7.6Z M6.8,7.9 H10.6 V12.2 H11.3 V13.5 H6.8 V12.2 H7.6 V9 H6.8Z" fill="#fff"/></svg></div>
<div class="rp" style="left:1638px;top:270px;letter-spacing:-0.09px">Kauf in USD</div>
<div class="rp" style="left:1563px;top:299px">Betrag</div>
<div class="box w" style="left:1657px;top:294px;width:119px">1000</div>
<div class="rp" style="left:1563px;top:330px">Aktien</div>
<div class="box" style="left:1657px;top:325.5px;width:119px">2.6</div>
<div class="rp" style="left:1629.3px;top:360px;letter-spacing:-0.19px">Rendite in USD</div>
<div class="rp" style="left:1563px;top:390px">Kursgewinn</div>
<div class="box g" style="left:1657px;top:385.5px;width:119px;letter-spacing:0.4px">236.58</div>
<div class="rp" style="left:1563px;top:420px">Dividende</div>
<div class="box g" style="left:1657px;top:416.5px;width:119px;letter-spacing:0.4px">18.68</div>
<div class="rp" style="left:1563px;top:451px">Gesamt</div>
<div class="box g" style="left:1657px;top:447px;width:119px;letter-spacing:0.4px">255.26</div>
<div class="rp" style="left:1563px;top:483px">Rendite</div>
<div class="box g" style="left:1657px;top:478.5px;width:119px;letter-spacing:-0.1px">25.5 %</div>
<div class="rp" style="left:1563px;top:515px;letter-spacing:0.25px">Aufs Jahr</div>
<div class="box g" style="left:1657px;top:510px;width:119px;letter-spacing:-0.2px">7.6 %</div>
<div class="rp" style="left:1563px;top:546px;letter-spacing:-0.1px">Pers. Div.</div>
<div class="box" style="left:1657px;top:541px;width:119px;letter-spacing:-0.3px">0.0 %</div>
<svg class="abs" style="left:0;top:0" width="1819" height="589">
<path d="M1734,533.5 L1788,533.3 M1735,537.7 C1740,537.4 1746,535.6 1758,534.8 L1768,534.2" fill="none" stroke="#0000f0" stroke-width="2.2" stroke-linecap="round"/>
</svg>
<div class="sb"></div>
<div class="th"></div>
</body></html>
